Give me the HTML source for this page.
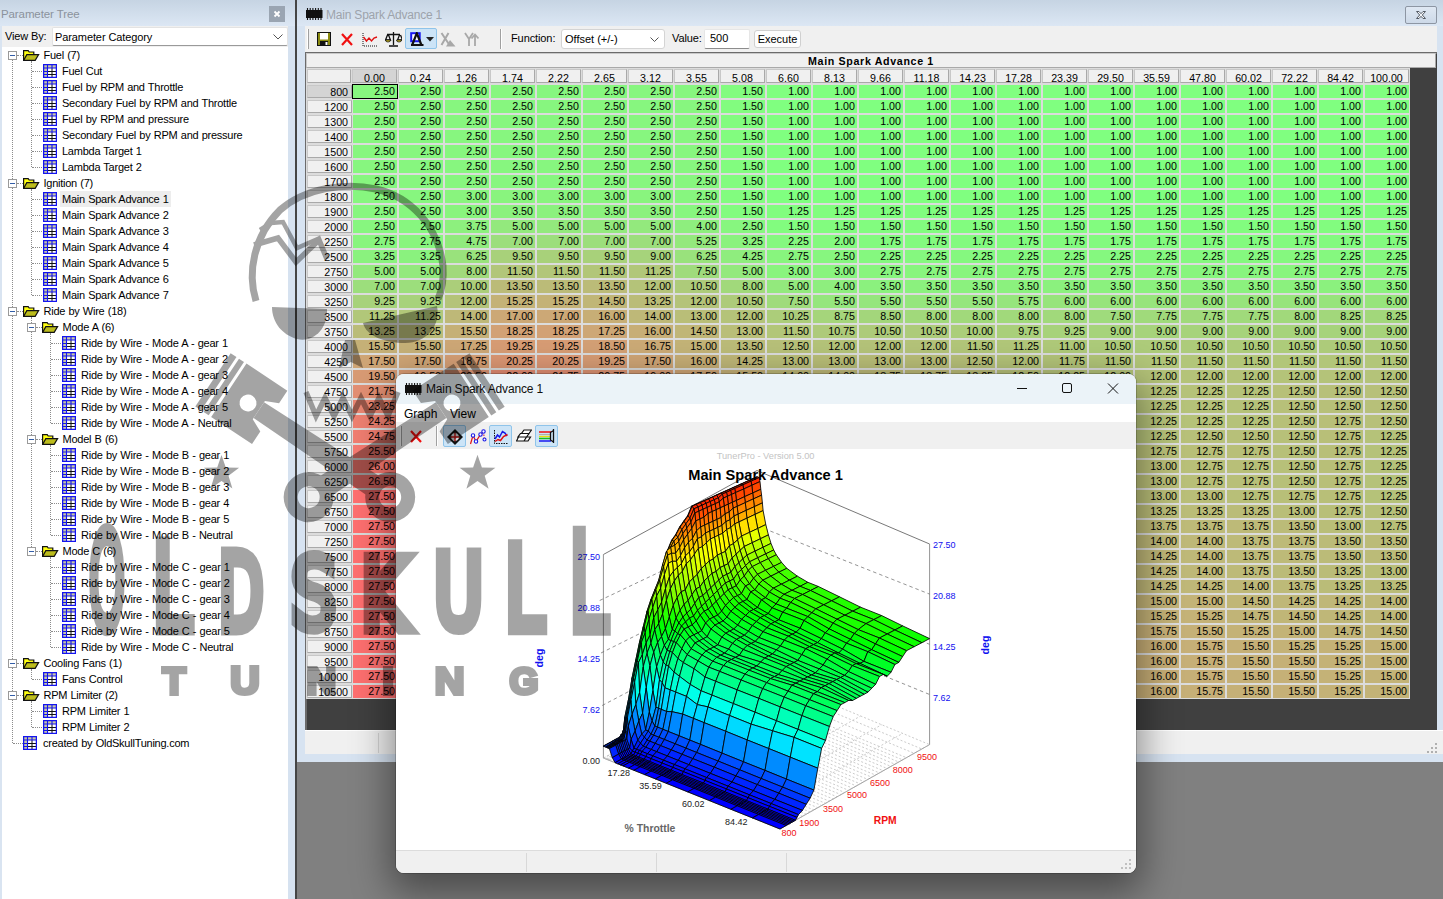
<!DOCTYPE html><html><head><meta charset="utf-8"><title>Main Spark Advance 1</title><style>
*{box-sizing:border-box;margin:0;padding:0}
html,body{width:1443px;height:899px;overflow:hidden}
body{background:#808080;font-family:"Liberation Sans",sans-serif;font-size:11px;color:#000;position:relative}
.abs{position:absolute}
#left{position:absolute;left:0;top:0;width:290px;height:899px;background:#fff;border-left:2px solid #d9e4f1}
#lcap{position:absolute;left:-2px;top:0;width:297px;height:26px;background:linear-gradient(#c6d4e3,#dce7f4)}
#lcap span{position:absolute;left:1px;top:8px;font-size:11.5px;color:#8b929c;letter-spacing:-.1px}
#lclose{position:absolute;left:269px;top:6px;width:16px;height:16px;background:#9aa5b2}
#split{position:absolute;left:288px;top:26px;width:9px;height:873px;background:#d6e2f0}
#split i{position:absolute;left:7px;top:-26px;width:2px;height:899px;background:#454545}
.tree{position:absolute;left:0;top:47px;width:288px}
.tr{position:absolute;left:0;height:16px;line-height:16px;white-space:nowrap;font-size:11px;letter-spacing:-.25px;word-spacing:.5px;color:#000}
.tr .t{position:absolute;top:0;padding:0 2px}
.sel{background:#ededed}
.ico{position:absolute;top:1px;width:14px;height:14px}
.fold{position:absolute;top:1px;width:17px;height:14px}
.exp{position:absolute;top:4px;width:9px;height:9px;border:1px solid #9a9a9a;background:#fff}
.exp:after{content:"";position:absolute;left:1px;top:3px;width:5px;height:1px;background:#335ea8}
.dv{position:absolute;width:0;border-left:1px dotted #8c8c8c}
.dh{position:absolute;height:0;border-top:1px dotted #8c8c8c}
#main{position:absolute;left:297px;top:0;width:1146px;height:762px;background:#d7e3f1}
#mcap{position:absolute;left:0;top:0;width:1146px;height:26px;background:linear-gradient(#c6d4e3,#dce7f4)}
#mcap span{position:absolute;left:29px;top:8px;font-size:12px;color:#9da3ab;letter-spacing:-.2px}
#tb{position:absolute;left:8px;top:26px;width:1132px;height:26px;background:#f0f0f0}
#grid{position:absolute;left:8px;top:52px;width:1132px;height:678px;background:#404040;border-top:2px solid #6b6b6b;border-left:2px solid #6b6b6b}
#stat{position:absolute;left:8px;top:730px;width:1138px;height:24px;background:#f0f0f0;border-top:1px solid #fff}
.hc{position:absolute;background:#f0f0f0;border:1px solid #a9a9a9;border-top-color:#c8c8c8;border-left-color:#c8c8c8;font-size:10.67px;height:14px;line-height:17px;overflow:hidden}
.c{position:absolute;width:44.400px;height:13px;line-height:13px;font-size:10.67px;text-align:right;padding-right:2px}
.rh{position:absolute;left:9px;width:45px;height:13px;line-height:12px;font-size:10.67px;text-align:right;padding-right:3px;background:#f0f0f0;border:1px solid #a9a9a9;border-top-color:#c8c8c8;border-left-color:#c8c8c8}
#gw{position:absolute;left:396px;top:374px;width:740px;height:499px;background:#fff;border-radius:8px;box-shadow:0 0 0 1px rgba(0,0,0,.18),0 14px 38px 6px rgba(0,0,0,.42);overflow:hidden}
#gcap{position:absolute;left:0;top:0;width:740px;height:30px;background:#ebf3f8}
#gcap span{position:absolute;left:30px;top:8px;font-size:12px;color:#111;letter-spacing:-.15px}
#gmenu{position:absolute;left:0;top:30px;width:740px;height:18px;background:#fff;font-size:12px}
#gtb{position:absolute;left:0;top:48px;width:740px;height:27px;background:#f0f0f0}
#gstat{position:absolute;left:0;top:476px;width:740px;height:23px;background:#f0f0f0;border-top:1px solid #dcdcdc}
</style></head><body>
<div id="left"><div id="lcap"><span>Parameter Tree</span><div id="lclose"><svg width="16" height="16"><path d="M5.5 5.5l5 5M10.5 5.5l-5 5" stroke="#fff" stroke-width="1.8"/></svg></div></div>
<div class="abs" style="left:0;top:26px;width:288px;height:21px;background:#f0f0f0"></div><div class="abs" style="left:3px;top:30px;font-size:11px;letter-spacing:-.15px">View By:</div>
<div class="abs" style="left:50px;top:27px;width:236px;height:19px;background:#fff;border:1px solid #e3e3e3;border-bottom-color:#9a9a9a;border-radius:2px;font-size:11px;line-height:18px;padding-left:2px;letter-spacing:-.1px">Parameter Category<svg class="abs" style="right:4px;top:6px" width="10" height="6"><path d="M.5 .5l4.5 4.5 4.5-4.5" fill="none" stroke="#555" stroke-width="1"/></svg></div>
<div class="tree">
<div class="dv" style="left:10px;top:8px;height:688px"></div>
<div class="dh" style="left:15px;top:8px;width:6px"></div>
<div class="dh" style="left:30px;top:24px;width:12px"></div>
<div class="dh" style="left:30px;top:40px;width:12px"></div>
<div class="dh" style="left:30px;top:56px;width:12px"></div>
<div class="dh" style="left:30px;top:72px;width:12px"></div>
<div class="dh" style="left:30px;top:88px;width:12px"></div>
<div class="dh" style="left:30px;top:104px;width:12px"></div>
<div class="dh" style="left:30px;top:120px;width:12px"></div>
<div class="dh" style="left:15px;top:136px;width:6px"></div>
<div class="dh" style="left:30px;top:152px;width:12px"></div>
<div class="dh" style="left:30px;top:168px;width:12px"></div>
<div class="dh" style="left:30px;top:184px;width:12px"></div>
<div class="dh" style="left:30px;top:200px;width:12px"></div>
<div class="dh" style="left:30px;top:216px;width:12px"></div>
<div class="dh" style="left:30px;top:232px;width:12px"></div>
<div class="dh" style="left:30px;top:248px;width:12px"></div>
<div class="dh" style="left:15px;top:264px;width:6px"></div>
<div class="dh" style="left:34px;top:280px;width:6px"></div>
<div class="dh" style="left:49px;top:296px;width:12px"></div>
<div class="dh" style="left:49px;top:312px;width:12px"></div>
<div class="dh" style="left:49px;top:328px;width:12px"></div>
<div class="dh" style="left:49px;top:344px;width:12px"></div>
<div class="dh" style="left:49px;top:360px;width:12px"></div>
<div class="dh" style="left:49px;top:376px;width:12px"></div>
<div class="dh" style="left:34px;top:392px;width:6px"></div>
<div class="dh" style="left:49px;top:408px;width:12px"></div>
<div class="dh" style="left:49px;top:424px;width:12px"></div>
<div class="dh" style="left:49px;top:440px;width:12px"></div>
<div class="dh" style="left:49px;top:456px;width:12px"></div>
<div class="dh" style="left:49px;top:472px;width:12px"></div>
<div class="dh" style="left:49px;top:488px;width:12px"></div>
<div class="dh" style="left:34px;top:504px;width:6px"></div>
<div class="dh" style="left:49px;top:520px;width:12px"></div>
<div class="dh" style="left:49px;top:536px;width:12px"></div>
<div class="dh" style="left:49px;top:552px;width:12px"></div>
<div class="dh" style="left:49px;top:568px;width:12px"></div>
<div class="dh" style="left:49px;top:584px;width:12px"></div>
<div class="dh" style="left:49px;top:600px;width:12px"></div>
<div class="dh" style="left:15px;top:616px;width:6px"></div>
<div class="dh" style="left:30px;top:632px;width:12px"></div>
<div class="dh" style="left:15px;top:648px;width:6px"></div>
<div class="dh" style="left:30px;top:664px;width:12px"></div>
<div class="dh" style="left:30px;top:680px;width:12px"></div>
<div class="dh" style="left:11px;top:696px;width:10px"></div>
<div class="dv" style="left:29px;top:14px;height:106px"></div>
<div class="dv" style="left:29px;top:142px;height:106px"></div>
<div class="dv" style="left:29px;top:270px;height:234px"></div>
<div class="dv" style="left:48px;top:286px;height:90px"></div>
<div class="dv" style="left:48px;top:398px;height:90px"></div>
<div class="dv" style="left:48px;top:510px;height:90px"></div>
<div class="dv" style="left:29px;top:622px;height:10px"></div>
<div class="dv" style="left:29px;top:654px;height:26px"></div>
<div class="tr" style="top:0px"><div class="exp" style="left:6px"></div><svg class="fold" style="left:21px" viewBox="0 0 17 14"><path d="M.6 12V2.600h4.600l1 1.400h4.600v2.500" fill="#ffff10" stroke="#111" stroke-width="1.200"/><path d="M.6 12.400L3.800 6.600h11.800l-3.400 5.800z" fill="#bcbc1c" stroke="#111" stroke-width="1.200"/></svg><div class="t" style="left:39.5px">Fuel (7)</div></div>
<div class="tr" style="top:16px"><svg class="ico" style="left:41px" viewBox="0 0 14 14"><rect x="0" y="0" width="14" height="14" fill="#fff"/><rect x="0" y="0" width="14" height="4" fill="#c9c9a4"/><rect x="0" y="0" width="4.500" height="14" fill="#c9c9a4"/><path d="M4.500 7.500h9M4.500 10.500h9M9 4v9.500" stroke="#111" stroke-width="1" fill="none"/><path d="M0 4h14M4.500 0v14M9 0v4M0 7.500h4.500M0 10.500h4.500" stroke="#1414f0" stroke-width="1.100" fill="none"/><rect x=".6" y=".6" width="12.800" height="12.800" fill="none" stroke="#1414f0" stroke-width="1.300"/></svg><div class="t" style="left:58px">Fuel Cut</div></div>
<div class="tr" style="top:32px"><svg class="ico" style="left:41px" viewBox="0 0 14 14"><rect x="0" y="0" width="14" height="14" fill="#fff"/><rect x="0" y="0" width="14" height="4" fill="#c9c9a4"/><rect x="0" y="0" width="4.500" height="14" fill="#c9c9a4"/><path d="M4.500 7.500h9M4.500 10.500h9M9 4v9.500" stroke="#111" stroke-width="1" fill="none"/><path d="M0 4h14M4.500 0v14M9 0v4M0 7.500h4.500M0 10.500h4.500" stroke="#1414f0" stroke-width="1.100" fill="none"/><rect x=".6" y=".6" width="12.800" height="12.800" fill="none" stroke="#1414f0" stroke-width="1.300"/></svg><div class="t" style="left:58px">Fuel by RPM and Throttle</div></div>
<div class="tr" style="top:48px"><svg class="ico" style="left:41px" viewBox="0 0 14 14"><rect x="0" y="0" width="14" height="14" fill="#fff"/><rect x="0" y="0" width="14" height="4" fill="#c9c9a4"/><rect x="0" y="0" width="4.500" height="14" fill="#c9c9a4"/><path d="M4.500 7.500h9M4.500 10.500h9M9 4v9.500" stroke="#111" stroke-width="1" fill="none"/><path d="M0 4h14M4.500 0v14M9 0v4M0 7.500h4.500M0 10.500h4.500" stroke="#1414f0" stroke-width="1.100" fill="none"/><rect x=".6" y=".6" width="12.800" height="12.800" fill="none" stroke="#1414f0" stroke-width="1.300"/></svg><div class="t" style="left:58px">Secondary Fuel by RPM and Throttle</div></div>
<div class="tr" style="top:64px"><svg class="ico" style="left:41px" viewBox="0 0 14 14"><rect x="0" y="0" width="14" height="14" fill="#fff"/><rect x="0" y="0" width="14" height="4" fill="#c9c9a4"/><rect x="0" y="0" width="4.500" height="14" fill="#c9c9a4"/><path d="M4.500 7.500h9M4.500 10.500h9M9 4v9.500" stroke="#111" stroke-width="1" fill="none"/><path d="M0 4h14M4.500 0v14M9 0v4M0 7.500h4.500M0 10.500h4.500" stroke="#1414f0" stroke-width="1.100" fill="none"/><rect x=".6" y=".6" width="12.800" height="12.800" fill="none" stroke="#1414f0" stroke-width="1.300"/></svg><div class="t" style="left:58px">Fuel by RPM and pressure</div></div>
<div class="tr" style="top:80px"><svg class="ico" style="left:41px" viewBox="0 0 14 14"><rect x="0" y="0" width="14" height="14" fill="#fff"/><rect x="0" y="0" width="14" height="4" fill="#c9c9a4"/><rect x="0" y="0" width="4.500" height="14" fill="#c9c9a4"/><path d="M4.500 7.500h9M4.500 10.500h9M9 4v9.500" stroke="#111" stroke-width="1" fill="none"/><path d="M0 4h14M4.500 0v14M9 0v4M0 7.500h4.500M0 10.500h4.500" stroke="#1414f0" stroke-width="1.100" fill="none"/><rect x=".6" y=".6" width="12.800" height="12.800" fill="none" stroke="#1414f0" stroke-width="1.300"/></svg><div class="t" style="left:58px">Secondary Fuel by RPM and pressure</div></div>
<div class="tr" style="top:96px"><svg class="ico" style="left:41px" viewBox="0 0 14 14"><rect x="0" y="0" width="14" height="14" fill="#fff"/><rect x="0" y="0" width="14" height="4" fill="#c9c9a4"/><rect x="0" y="0" width="4.500" height="14" fill="#c9c9a4"/><path d="M4.500 7.500h9M4.500 10.500h9M9 4v9.500" stroke="#111" stroke-width="1" fill="none"/><path d="M0 4h14M4.500 0v14M9 0v4M0 7.500h4.500M0 10.500h4.500" stroke="#1414f0" stroke-width="1.100" fill="none"/><rect x=".6" y=".6" width="12.800" height="12.800" fill="none" stroke="#1414f0" stroke-width="1.300"/></svg><div class="t" style="left:58px">Lambda Target 1</div></div>
<div class="tr" style="top:112px"><svg class="ico" style="left:41px" viewBox="0 0 14 14"><rect x="0" y="0" width="14" height="14" fill="#fff"/><rect x="0" y="0" width="14" height="4" fill="#c9c9a4"/><rect x="0" y="0" width="4.500" height="14" fill="#c9c9a4"/><path d="M4.500 7.500h9M4.500 10.500h9M9 4v9.500" stroke="#111" stroke-width="1" fill="none"/><path d="M0 4h14M4.500 0v14M9 0v4M0 7.500h4.500M0 10.500h4.500" stroke="#1414f0" stroke-width="1.100" fill="none"/><rect x=".6" y=".6" width="12.800" height="12.800" fill="none" stroke="#1414f0" stroke-width="1.300"/></svg><div class="t" style="left:58px">Lambda Target 2</div></div>
<div class="tr" style="top:128px"><div class="exp" style="left:6px"></div><svg class="fold" style="left:21px" viewBox="0 0 17 14"><path d="M.6 12V2.600h4.600l1 1.400h4.600v2.500" fill="#ffff10" stroke="#111" stroke-width="1.200"/><path d="M.6 12.400L3.800 6.600h11.800l-3.400 5.800z" fill="#bcbc1c" stroke="#111" stroke-width="1.200"/></svg><div class="t" style="left:39.5px">Ignition (7)</div></div>
<div class="tr" style="top:144px"><svg class="ico" style="left:41px" viewBox="0 0 14 14"><rect x="0" y="0" width="14" height="14" fill="#fff"/><rect x="0" y="0" width="14" height="4" fill="#c9c9a4"/><rect x="0" y="0" width="4.500" height="14" fill="#c9c9a4"/><path d="M4.500 7.500h9M4.500 10.500h9M9 4v9.500" stroke="#111" stroke-width="1" fill="none"/><path d="M0 4h14M4.500 0v14M9 0v4M0 7.500h4.500M0 10.500h4.500" stroke="#1414f0" stroke-width="1.100" fill="none"/><rect x=".6" y=".6" width="12.800" height="12.800" fill="none" stroke="#1414f0" stroke-width="1.300"/></svg><div class="t sel" style="left:58px">Main Spark Advance 1</div></div>
<div class="tr" style="top:160px"><svg class="ico" style="left:41px" viewBox="0 0 14 14"><rect x="0" y="0" width="14" height="14" fill="#fff"/><rect x="0" y="0" width="14" height="4" fill="#c9c9a4"/><rect x="0" y="0" width="4.500" height="14" fill="#c9c9a4"/><path d="M4.500 7.500h9M4.500 10.500h9M9 4v9.500" stroke="#111" stroke-width="1" fill="none"/><path d="M0 4h14M4.500 0v14M9 0v4M0 7.500h4.500M0 10.500h4.500" stroke="#1414f0" stroke-width="1.100" fill="none"/><rect x=".6" y=".6" width="12.800" height="12.800" fill="none" stroke="#1414f0" stroke-width="1.300"/></svg><div class="t" style="left:58px">Main Spark Advance 2</div></div>
<div class="tr" style="top:176px"><svg class="ico" style="left:41px" viewBox="0 0 14 14"><rect x="0" y="0" width="14" height="14" fill="#fff"/><rect x="0" y="0" width="14" height="4" fill="#c9c9a4"/><rect x="0" y="0" width="4.500" height="14" fill="#c9c9a4"/><path d="M4.500 7.500h9M4.500 10.500h9M9 4v9.500" stroke="#111" stroke-width="1" fill="none"/><path d="M0 4h14M4.500 0v14M9 0v4M0 7.500h4.500M0 10.500h4.500" stroke="#1414f0" stroke-width="1.100" fill="none"/><rect x=".6" y=".6" width="12.800" height="12.800" fill="none" stroke="#1414f0" stroke-width="1.300"/></svg><div class="t" style="left:58px">Main Spark Advance 3</div></div>
<div class="tr" style="top:192px"><svg class="ico" style="left:41px" viewBox="0 0 14 14"><rect x="0" y="0" width="14" height="14" fill="#fff"/><rect x="0" y="0" width="14" height="4" fill="#c9c9a4"/><rect x="0" y="0" width="4.500" height="14" fill="#c9c9a4"/><path d="M4.500 7.500h9M4.500 10.500h9M9 4v9.500" stroke="#111" stroke-width="1" fill="none"/><path d="M0 4h14M4.500 0v14M9 0v4M0 7.500h4.500M0 10.500h4.500" stroke="#1414f0" stroke-width="1.100" fill="none"/><rect x=".6" y=".6" width="12.800" height="12.800" fill="none" stroke="#1414f0" stroke-width="1.300"/></svg><div class="t" style="left:58px">Main Spark Advance 4</div></div>
<div class="tr" style="top:208px"><svg class="ico" style="left:41px" viewBox="0 0 14 14"><rect x="0" y="0" width="14" height="14" fill="#fff"/><rect x="0" y="0" width="14" height="4" fill="#c9c9a4"/><rect x="0" y="0" width="4.500" height="14" fill="#c9c9a4"/><path d="M4.500 7.500h9M4.500 10.500h9M9 4v9.500" stroke="#111" stroke-width="1" fill="none"/><path d="M0 4h14M4.500 0v14M9 0v4M0 7.500h4.500M0 10.500h4.500" stroke="#1414f0" stroke-width="1.100" fill="none"/><rect x=".6" y=".6" width="12.800" height="12.800" fill="none" stroke="#1414f0" stroke-width="1.300"/></svg><div class="t" style="left:58px">Main Spark Advance 5</div></div>
<div class="tr" style="top:224px"><svg class="ico" style="left:41px" viewBox="0 0 14 14"><rect x="0" y="0" width="14" height="14" fill="#fff"/><rect x="0" y="0" width="14" height="4" fill="#c9c9a4"/><rect x="0" y="0" width="4.500" height="14" fill="#c9c9a4"/><path d="M4.500 7.500h9M4.500 10.500h9M9 4v9.500" stroke="#111" stroke-width="1" fill="none"/><path d="M0 4h14M4.500 0v14M9 0v4M0 7.500h4.500M0 10.500h4.500" stroke="#1414f0" stroke-width="1.100" fill="none"/><rect x=".6" y=".6" width="12.800" height="12.800" fill="none" stroke="#1414f0" stroke-width="1.300"/></svg><div class="t" style="left:58px">Main Spark Advance 6</div></div>
<div class="tr" style="top:240px"><svg class="ico" style="left:41px" viewBox="0 0 14 14"><rect x="0" y="0" width="14" height="14" fill="#fff"/><rect x="0" y="0" width="14" height="4" fill="#c9c9a4"/><rect x="0" y="0" width="4.500" height="14" fill="#c9c9a4"/><path d="M4.500 7.500h9M4.500 10.500h9M9 4v9.500" stroke="#111" stroke-width="1" fill="none"/><path d="M0 4h14M4.500 0v14M9 0v4M0 7.500h4.500M0 10.500h4.500" stroke="#1414f0" stroke-width="1.100" fill="none"/><rect x=".6" y=".6" width="12.800" height="12.800" fill="none" stroke="#1414f0" stroke-width="1.300"/></svg><div class="t" style="left:58px">Main Spark Advance 7</div></div>
<div class="tr" style="top:256px"><div class="exp" style="left:6px"></div><svg class="fold" style="left:21px" viewBox="0 0 17 14"><path d="M.6 12V2.600h4.600l1 1.400h4.600v2.500" fill="#ffff10" stroke="#111" stroke-width="1.200"/><path d="M.6 12.400L3.800 6.600h11.800l-3.400 5.800z" fill="#bcbc1c" stroke="#111" stroke-width="1.200"/></svg><div class="t" style="left:39.5px">Ride by Wire (18)</div></div>
<div class="tr" style="top:272px"><div class="exp" style="left:25px"></div><svg class="fold" style="left:40px" viewBox="0 0 17 14"><path d="M.6 12V2.600h4.600l1 1.400h4.600v2.500" fill="#ffff10" stroke="#111" stroke-width="1.200"/><path d="M.6 12.400L3.800 6.600h11.800l-3.400 5.800z" fill="#bcbc1c" stroke="#111" stroke-width="1.200"/></svg><div class="t" style="left:58.5px">Mode A (6)</div></div>
<div class="tr" style="top:288px"><svg class="ico" style="left:60px" viewBox="0 0 14 14"><rect x="0" y="0" width="14" height="14" fill="#fff"/><rect x="0" y="0" width="14" height="4" fill="#c9c9a4"/><rect x="0" y="0" width="4.500" height="14" fill="#c9c9a4"/><path d="M4.500 7.500h9M4.500 10.500h9M9 4v9.500" stroke="#111" stroke-width="1" fill="none"/><path d="M0 4h14M4.500 0v14M9 0v4M0 7.500h4.500M0 10.500h4.500" stroke="#1414f0" stroke-width="1.100" fill="none"/><rect x=".6" y=".6" width="12.800" height="12.800" fill="none" stroke="#1414f0" stroke-width="1.300"/></svg><div class="t" style="left:77px">Ride by Wire - Mode A - gear 1</div></div>
<div class="tr" style="top:304px"><svg class="ico" style="left:60px" viewBox="0 0 14 14"><rect x="0" y="0" width="14" height="14" fill="#fff"/><rect x="0" y="0" width="14" height="4" fill="#c9c9a4"/><rect x="0" y="0" width="4.500" height="14" fill="#c9c9a4"/><path d="M4.500 7.500h9M4.500 10.500h9M9 4v9.500" stroke="#111" stroke-width="1" fill="none"/><path d="M0 4h14M4.500 0v14M9 0v4M0 7.500h4.500M0 10.500h4.500" stroke="#1414f0" stroke-width="1.100" fill="none"/><rect x=".6" y=".6" width="12.800" height="12.800" fill="none" stroke="#1414f0" stroke-width="1.300"/></svg><div class="t" style="left:77px">Ride by Wire - Mode A - gear 2</div></div>
<div class="tr" style="top:320px"><svg class="ico" style="left:60px" viewBox="0 0 14 14"><rect x="0" y="0" width="14" height="14" fill="#fff"/><rect x="0" y="0" width="14" height="4" fill="#c9c9a4"/><rect x="0" y="0" width="4.500" height="14" fill="#c9c9a4"/><path d="M4.500 7.500h9M4.500 10.500h9M9 4v9.500" stroke="#111" stroke-width="1" fill="none"/><path d="M0 4h14M4.500 0v14M9 0v4M0 7.500h4.500M0 10.500h4.500" stroke="#1414f0" stroke-width="1.100" fill="none"/><rect x=".6" y=".6" width="12.800" height="12.800" fill="none" stroke="#1414f0" stroke-width="1.300"/></svg><div class="t" style="left:77px">Ride by Wire - Mode A - gear 3</div></div>
<div class="tr" style="top:336px"><svg class="ico" style="left:60px" viewBox="0 0 14 14"><rect x="0" y="0" width="14" height="14" fill="#fff"/><rect x="0" y="0" width="14" height="4" fill="#c9c9a4"/><rect x="0" y="0" width="4.500" height="14" fill="#c9c9a4"/><path d="M4.500 7.500h9M4.500 10.500h9M9 4v9.500" stroke="#111" stroke-width="1" fill="none"/><path d="M0 4h14M4.500 0v14M9 0v4M0 7.500h4.500M0 10.500h4.500" stroke="#1414f0" stroke-width="1.100" fill="none"/><rect x=".6" y=".6" width="12.800" height="12.800" fill="none" stroke="#1414f0" stroke-width="1.300"/></svg><div class="t" style="left:77px">Ride by Wire - Mode A - gear 4</div></div>
<div class="tr" style="top:352px"><svg class="ico" style="left:60px" viewBox="0 0 14 14"><rect x="0" y="0" width="14" height="14" fill="#fff"/><rect x="0" y="0" width="14" height="4" fill="#c9c9a4"/><rect x="0" y="0" width="4.500" height="14" fill="#c9c9a4"/><path d="M4.500 7.500h9M4.500 10.500h9M9 4v9.500" stroke="#111" stroke-width="1" fill="none"/><path d="M0 4h14M4.500 0v14M9 0v4M0 7.500h4.500M0 10.500h4.500" stroke="#1414f0" stroke-width="1.100" fill="none"/><rect x=".6" y=".6" width="12.800" height="12.800" fill="none" stroke="#1414f0" stroke-width="1.300"/></svg><div class="t" style="left:77px">Ride by Wire - Mode A - gear 5</div></div>
<div class="tr" style="top:368px"><svg class="ico" style="left:60px" viewBox="0 0 14 14"><rect x="0" y="0" width="14" height="14" fill="#fff"/><rect x="0" y="0" width="14" height="4" fill="#c9c9a4"/><rect x="0" y="0" width="4.500" height="14" fill="#c9c9a4"/><path d="M4.500 7.500h9M4.500 10.500h9M9 4v9.500" stroke="#111" stroke-width="1" fill="none"/><path d="M0 4h14M4.500 0v14M9 0v4M0 7.500h4.500M0 10.500h4.500" stroke="#1414f0" stroke-width="1.100" fill="none"/><rect x=".6" y=".6" width="12.800" height="12.800" fill="none" stroke="#1414f0" stroke-width="1.300"/></svg><div class="t" style="left:77px">Ride by Wire - Mode A - Neutral</div></div>
<div class="tr" style="top:384px"><div class="exp" style="left:25px"></div><svg class="fold" style="left:40px" viewBox="0 0 17 14"><path d="M.6 12V2.600h4.600l1 1.400h4.600v2.500" fill="#ffff10" stroke="#111" stroke-width="1.200"/><path d="M.6 12.400L3.800 6.600h11.800l-3.400 5.800z" fill="#bcbc1c" stroke="#111" stroke-width="1.200"/></svg><div class="t" style="left:58.5px">Model B (6)</div></div>
<div class="tr" style="top:400px"><svg class="ico" style="left:60px" viewBox="0 0 14 14"><rect x="0" y="0" width="14" height="14" fill="#fff"/><rect x="0" y="0" width="14" height="4" fill="#c9c9a4"/><rect x="0" y="0" width="4.500" height="14" fill="#c9c9a4"/><path d="M4.500 7.500h9M4.500 10.500h9M9 4v9.500" stroke="#111" stroke-width="1" fill="none"/><path d="M0 4h14M4.500 0v14M9 0v4M0 7.500h4.500M0 10.500h4.500" stroke="#1414f0" stroke-width="1.100" fill="none"/><rect x=".6" y=".6" width="12.800" height="12.800" fill="none" stroke="#1414f0" stroke-width="1.300"/></svg><div class="t" style="left:77px">Ride by Wire - Mode B - gear 1</div></div>
<div class="tr" style="top:416px"><svg class="ico" style="left:60px" viewBox="0 0 14 14"><rect x="0" y="0" width="14" height="14" fill="#fff"/><rect x="0" y="0" width="14" height="4" fill="#c9c9a4"/><rect x="0" y="0" width="4.500" height="14" fill="#c9c9a4"/><path d="M4.500 7.500h9M4.500 10.500h9M9 4v9.500" stroke="#111" stroke-width="1" fill="none"/><path d="M0 4h14M4.500 0v14M9 0v4M0 7.500h4.500M0 10.500h4.500" stroke="#1414f0" stroke-width="1.100" fill="none"/><rect x=".6" y=".6" width="12.800" height="12.800" fill="none" stroke="#1414f0" stroke-width="1.300"/></svg><div class="t" style="left:77px">Ride by Wire - Mode B - gear 2</div></div>
<div class="tr" style="top:432px"><svg class="ico" style="left:60px" viewBox="0 0 14 14"><rect x="0" y="0" width="14" height="14" fill="#fff"/><rect x="0" y="0" width="14" height="4" fill="#c9c9a4"/><rect x="0" y="0" width="4.500" height="14" fill="#c9c9a4"/><path d="M4.500 7.500h9M4.500 10.500h9M9 4v9.500" stroke="#111" stroke-width="1" fill="none"/><path d="M0 4h14M4.500 0v14M9 0v4M0 7.500h4.500M0 10.500h4.500" stroke="#1414f0" stroke-width="1.100" fill="none"/><rect x=".6" y=".6" width="12.800" height="12.800" fill="none" stroke="#1414f0" stroke-width="1.300"/></svg><div class="t" style="left:77px">Ride by Wire - Mode B - gear 3</div></div>
<div class="tr" style="top:448px"><svg class="ico" style="left:60px" viewBox="0 0 14 14"><rect x="0" y="0" width="14" height="14" fill="#fff"/><rect x="0" y="0" width="14" height="4" fill="#c9c9a4"/><rect x="0" y="0" width="4.500" height="14" fill="#c9c9a4"/><path d="M4.500 7.500h9M4.500 10.500h9M9 4v9.500" stroke="#111" stroke-width="1" fill="none"/><path d="M0 4h14M4.500 0v14M9 0v4M0 7.500h4.500M0 10.500h4.500" stroke="#1414f0" stroke-width="1.100" fill="none"/><rect x=".6" y=".6" width="12.800" height="12.800" fill="none" stroke="#1414f0" stroke-width="1.300"/></svg><div class="t" style="left:77px">Ride by Wire - Mode B - gear 4</div></div>
<div class="tr" style="top:464px"><svg class="ico" style="left:60px" viewBox="0 0 14 14"><rect x="0" y="0" width="14" height="14" fill="#fff"/><rect x="0" y="0" width="14" height="4" fill="#c9c9a4"/><rect x="0" y="0" width="4.500" height="14" fill="#c9c9a4"/><path d="M4.500 7.500h9M4.500 10.500h9M9 4v9.500" stroke="#111" stroke-width="1" fill="none"/><path d="M0 4h14M4.500 0v14M9 0v4M0 7.500h4.500M0 10.500h4.500" stroke="#1414f0" stroke-width="1.100" fill="none"/><rect x=".6" y=".6" width="12.800" height="12.800" fill="none" stroke="#1414f0" stroke-width="1.300"/></svg><div class="t" style="left:77px">Ride by Wire - Mode B - gear 5</div></div>
<div class="tr" style="top:480px"><svg class="ico" style="left:60px" viewBox="0 0 14 14"><rect x="0" y="0" width="14" height="14" fill="#fff"/><rect x="0" y="0" width="14" height="4" fill="#c9c9a4"/><rect x="0" y="0" width="4.500" height="14" fill="#c9c9a4"/><path d="M4.500 7.500h9M4.500 10.500h9M9 4v9.500" stroke="#111" stroke-width="1" fill="none"/><path d="M0 4h14M4.500 0v14M9 0v4M0 7.500h4.500M0 10.500h4.500" stroke="#1414f0" stroke-width="1.100" fill="none"/><rect x=".6" y=".6" width="12.800" height="12.800" fill="none" stroke="#1414f0" stroke-width="1.300"/></svg><div class="t" style="left:77px">Ride by Wire - Mode B - Neutral</div></div>
<div class="tr" style="top:496px"><div class="exp" style="left:25px"></div><svg class="fold" style="left:40px" viewBox="0 0 17 14"><path d="M.6 12V2.600h4.600l1 1.400h4.600v2.500" fill="#ffff10" stroke="#111" stroke-width="1.200"/><path d="M.6 12.400L3.800 6.600h11.800l-3.400 5.800z" fill="#bcbc1c" stroke="#111" stroke-width="1.200"/></svg><div class="t" style="left:58.5px">Mode C (6)</div></div>
<div class="tr" style="top:512px"><svg class="ico" style="left:60px" viewBox="0 0 14 14"><rect x="0" y="0" width="14" height="14" fill="#fff"/><rect x="0" y="0" width="14" height="4" fill="#c9c9a4"/><rect x="0" y="0" width="4.500" height="14" fill="#c9c9a4"/><path d="M4.500 7.500h9M4.500 10.500h9M9 4v9.500" stroke="#111" stroke-width="1" fill="none"/><path d="M0 4h14M4.500 0v14M9 0v4M0 7.500h4.500M0 10.500h4.500" stroke="#1414f0" stroke-width="1.100" fill="none"/><rect x=".6" y=".6" width="12.800" height="12.800" fill="none" stroke="#1414f0" stroke-width="1.300"/></svg><div class="t" style="left:77px">Ride by Wire - Mode C - gear 1</div></div>
<div class="tr" style="top:528px"><svg class="ico" style="left:60px" viewBox="0 0 14 14"><rect x="0" y="0" width="14" height="14" fill="#fff"/><rect x="0" y="0" width="14" height="4" fill="#c9c9a4"/><rect x="0" y="0" width="4.500" height="14" fill="#c9c9a4"/><path d="M4.500 7.500h9M4.500 10.500h9M9 4v9.500" stroke="#111" stroke-width="1" fill="none"/><path d="M0 4h14M4.500 0v14M9 0v4M0 7.500h4.500M0 10.500h4.500" stroke="#1414f0" stroke-width="1.100" fill="none"/><rect x=".6" y=".6" width="12.800" height="12.800" fill="none" stroke="#1414f0" stroke-width="1.300"/></svg><div class="t" style="left:77px">Ride by Wire - Mode C - gear 2</div></div>
<div class="tr" style="top:544px"><svg class="ico" style="left:60px" viewBox="0 0 14 14"><rect x="0" y="0" width="14" height="14" fill="#fff"/><rect x="0" y="0" width="14" height="4" fill="#c9c9a4"/><rect x="0" y="0" width="4.500" height="14" fill="#c9c9a4"/><path d="M4.500 7.500h9M4.500 10.500h9M9 4v9.500" stroke="#111" stroke-width="1" fill="none"/><path d="M0 4h14M4.500 0v14M9 0v4M0 7.500h4.500M0 10.500h4.500" stroke="#1414f0" stroke-width="1.100" fill="none"/><rect x=".6" y=".6" width="12.800" height="12.800" fill="none" stroke="#1414f0" stroke-width="1.300"/></svg><div class="t" style="left:77px">Ride by Wire - Mode C - gear 3</div></div>
<div class="tr" style="top:560px"><svg class="ico" style="left:60px" viewBox="0 0 14 14"><rect x="0" y="0" width="14" height="14" fill="#fff"/><rect x="0" y="0" width="14" height="4" fill="#c9c9a4"/><rect x="0" y="0" width="4.500" height="14" fill="#c9c9a4"/><path d="M4.500 7.500h9M4.500 10.500h9M9 4v9.500" stroke="#111" stroke-width="1" fill="none"/><path d="M0 4h14M4.500 0v14M9 0v4M0 7.500h4.500M0 10.500h4.500" stroke="#1414f0" stroke-width="1.100" fill="none"/><rect x=".6" y=".6" width="12.800" height="12.800" fill="none" stroke="#1414f0" stroke-width="1.300"/></svg><div class="t" style="left:77px">Ride by Wire - Mode C - gear 4</div></div>
<div class="tr" style="top:576px"><svg class="ico" style="left:60px" viewBox="0 0 14 14"><rect x="0" y="0" width="14" height="14" fill="#fff"/><rect x="0" y="0" width="14" height="4" fill="#c9c9a4"/><rect x="0" y="0" width="4.500" height="14" fill="#c9c9a4"/><path d="M4.500 7.500h9M4.500 10.500h9M9 4v9.500" stroke="#111" stroke-width="1" fill="none"/><path d="M0 4h14M4.500 0v14M9 0v4M0 7.500h4.500M0 10.500h4.500" stroke="#1414f0" stroke-width="1.100" fill="none"/><rect x=".6" y=".6" width="12.800" height="12.800" fill="none" stroke="#1414f0" stroke-width="1.300"/></svg><div class="t" style="left:77px">Ride by Wire - Mode C - gear 5</div></div>
<div class="tr" style="top:592px"><svg class="ico" style="left:60px" viewBox="0 0 14 14"><rect x="0" y="0" width="14" height="14" fill="#fff"/><rect x="0" y="0" width="14" height="4" fill="#c9c9a4"/><rect x="0" y="0" width="4.500" height="14" fill="#c9c9a4"/><path d="M4.500 7.500h9M4.500 10.500h9M9 4v9.500" stroke="#111" stroke-width="1" fill="none"/><path d="M0 4h14M4.500 0v14M9 0v4M0 7.500h4.500M0 10.500h4.500" stroke="#1414f0" stroke-width="1.100" fill="none"/><rect x=".6" y=".6" width="12.800" height="12.800" fill="none" stroke="#1414f0" stroke-width="1.300"/></svg><div class="t" style="left:77px">Ride by Wire - Mode C - Neutral</div></div>
<div class="tr" style="top:608px"><div class="exp" style="left:6px"></div><svg class="fold" style="left:21px" viewBox="0 0 17 14"><path d="M.6 12V2.600h4.600l1 1.400h4.600v2.500" fill="#ffff10" stroke="#111" stroke-width="1.200"/><path d="M.6 12.400L3.800 6.600h11.800l-3.400 5.800z" fill="#bcbc1c" stroke="#111" stroke-width="1.200"/></svg><div class="t" style="left:39.5px">Cooling Fans (1)</div></div>
<div class="tr" style="top:624px"><svg class="ico" style="left:41px" viewBox="0 0 14 14"><rect x="0" y="0" width="14" height="14" fill="#fff"/><rect x="0" y="0" width="14" height="4" fill="#c9c9a4"/><rect x="0" y="0" width="4.500" height="14" fill="#c9c9a4"/><path d="M4.500 7.500h9M4.500 10.500h9M9 4v9.500" stroke="#111" stroke-width="1" fill="none"/><path d="M0 4h14M4.500 0v14M9 0v4M0 7.500h4.500M0 10.500h4.500" stroke="#1414f0" stroke-width="1.100" fill="none"/><rect x=".6" y=".6" width="12.800" height="12.800" fill="none" stroke="#1414f0" stroke-width="1.300"/></svg><div class="t" style="left:58px">Fans Control</div></div>
<div class="tr" style="top:640px"><div class="exp" style="left:6px"></div><svg class="fold" style="left:21px" viewBox="0 0 17 14"><path d="M.6 12V2.600h4.600l1 1.400h4.600v2.500" fill="#ffff10" stroke="#111" stroke-width="1.200"/><path d="M.6 12.400L3.800 6.600h11.800l-3.400 5.800z" fill="#bcbc1c" stroke="#111" stroke-width="1.200"/></svg><div class="t" style="left:39.5px">RPM Limiter (2)</div></div>
<div class="tr" style="top:656px"><svg class="ico" style="left:41px" viewBox="0 0 14 14"><rect x="0" y="0" width="14" height="14" fill="#fff"/><rect x="0" y="0" width="14" height="4" fill="#c9c9a4"/><rect x="0" y="0" width="4.500" height="14" fill="#c9c9a4"/><path d="M4.500 7.500h9M4.500 10.500h9M9 4v9.500" stroke="#111" stroke-width="1" fill="none"/><path d="M0 4h14M4.500 0v14M9 0v4M0 7.500h4.500M0 10.500h4.500" stroke="#1414f0" stroke-width="1.100" fill="none"/><rect x=".6" y=".6" width="12.800" height="12.800" fill="none" stroke="#1414f0" stroke-width="1.300"/></svg><div class="t" style="left:58px">RPM Limiter 1</div></div>
<div class="tr" style="top:672px"><svg class="ico" style="left:41px" viewBox="0 0 14 14"><rect x="0" y="0" width="14" height="14" fill="#fff"/><rect x="0" y="0" width="14" height="4" fill="#c9c9a4"/><rect x="0" y="0" width="4.500" height="14" fill="#c9c9a4"/><path d="M4.500 7.500h9M4.500 10.500h9M9 4v9.500" stroke="#111" stroke-width="1" fill="none"/><path d="M0 4h14M4.500 0v14M9 0v4M0 7.500h4.500M0 10.500h4.500" stroke="#1414f0" stroke-width="1.100" fill="none"/><rect x=".6" y=".6" width="12.800" height="12.800" fill="none" stroke="#1414f0" stroke-width="1.300"/></svg><div class="t" style="left:58px">RPM Limiter 2</div></div>
<div class="tr" style="top:688px"><svg class="ico" style="left:21px" viewBox="0 0 14 14"><rect x="0" y="0" width="14" height="14" fill="#fff"/><rect x="0" y="0" width="14" height="4" fill="#c9c9a4"/><rect x="0" y="0" width="4.500" height="14" fill="#c9c9a4"/><path d="M4.500 7.500h9M4.500 10.500h9M9 4v9.500" stroke="#111" stroke-width="1" fill="none"/><path d="M0 4h14M4.500 0v14M9 0v4M0 7.500h4.500M0 10.500h4.500" stroke="#1414f0" stroke-width="1.100" fill="none"/><rect x=".6" y=".6" width="12.800" height="12.800" fill="none" stroke="#1414f0" stroke-width="1.300"/></svg><div class="t" style="left:39px">created by OldSkullTuning.com</div></div>
</div></div>
<div id="split"><i></i></div>
<div id="main"><div id="mcap">
<svg class="abs" style="left:9px;top:8px" width="17" height="12" viewBox="0 0 17 12"><rect x="0" y="2" width="16.500" height="8" fill="#111"/><path d="M1.500 0v12M4.200 0v12M6.900 0v12M9.600 0v12M12.300 0v12M15 0v12" stroke="#111" stroke-width="1.100"/></svg>
<span>Main Spark Advance 1</span>
<div class="abs" style="left:1108px;top:6px;width:32px;height:18px;border:1px solid #8d96a3;border-radius:2px;background:linear-gradient(#dfe8f3,#cdd9e8)"><svg width="30" height="16"><path d="M10.5 4.5h2.5l2 2.2 2-2.2h2.5l-3.2 3.5 3.2 3.5h-2.5l-2-2.2-2 2.2h-2.5l3.2-3.5z" fill="#f4f6f9" stroke="#555c66" stroke-width="1"/></svg></div>
</div>
<div id="tb">
<div class="abs" style="left:2px;top:3px;width:2px;height:20px;border-left:1px solid #fff;border-right:1px solid #a0a0a0"></div>
<svg class="abs" style="left:12px;top:6px" width="14" height="14" viewBox="0 0 14 14"><rect x="0" y="0" width="14" height="14" fill="#111"/><rect x="1" y="1" width="12" height="12" fill="#8a8a10"/><rect x="3" y="1" width="8" height="6.5" fill="#fff"/><rect x="3" y="9" width="8" height="5" fill="#111"/><rect x="8.5" y="10" width="2" height="3" fill="#fff"/></svg>
<svg class="abs" style="left:36px;top:7px" width="12" height="13" viewBox="0 0 12 13"><path d="M1 1l10 11M11 1L1 12" stroke="#f01010" stroke-width="2.2" fill="none"/></svg>
<svg class="abs" style="left:57px;top:7px" width="16" height="14" viewBox="0 0 16 14"><path d="M1 0v13h15" stroke="#111" stroke-width="1" fill="none" stroke-dasharray="1 1"/><path d="M1.5 4l3 4 2.5-3 2.500 3 2.500-3 3-1" stroke="#e01010" stroke-width="1.4" fill="none"/></svg>
<svg class="abs" style="left:80px;top:5px" width="17" height="16" viewBox="0 0 17 16"><path d="M8.500 1v13M4 15h9M2 3.500h13M2.500 4l-2 5h5l-2-5M14.500 4l-2 5h5l-2-5" stroke="#111" stroke-width="1.300" fill="none"/><path d="M0.500 9h5a2.500 2 0 0 1-5 0zM11.500 9h5a2.500 2 0 0 1-5 0z" fill="#e8d020" stroke="#111" stroke-width=".8"/></svg>
<div class="abs" style="left:100px;top:2px;width:32px;height:21px;background:#cce4f7;border:1px solid #8fc4ea;border-radius:2px"></div>
<svg class="abs" style="left:105px;top:6px" width="14" height="14" viewBox="0 0 14 14"><rect x="1.200" y="1.200" width="8.500" height="8" fill="#fff" stroke="#1818f0" stroke-width="2"/><path d="M1 13h12.500M2.200 13L6.800 1.200 11.400 13" stroke="#111" stroke-width="2.200" fill="none"/></svg>
<svg class="abs" style="left:121px;top:11px" width="8" height="5"><path d="M0 0h8l-4 4.500z" fill="#222"/></svg>
<svg class="abs" style="left:135px;top:6px" width="16" height="15" viewBox="0 0 16 15"><path d="M1.500 1l8 12M8.500 1l-7 12" stroke="#a8a8a8" stroke-width="2" fill="none"/><path d="M6 14.500h9.500l-5.500-6.500z" fill="#a8a8a8"/></svg>
<svg class="abs" style="left:159px;top:6px" width="15" height="15" viewBox="0 0 15 15"><path d="M1 1l4 6v7M9 1l-4 6M11 14V3M7.500 6.500L11 2.500l3.500 4" stroke="#a8a8a8" stroke-width="1.800" fill="none"/></svg>
<div class="abs" style="left:195px;top:3px;width:2px;height:20px;border-left:1px solid #a0a0a0;border-right:1px solid #fff"></div>
<div class="abs" style="left:206px;top:6px;font-size:11px;letter-spacing:-.1px">Function:</div>
<div class="abs" style="left:256px;top:3px;width:104px;height:20px;background:#fff;border:1px solid #d4d4d4;border-radius:3px;font-size:11px;line-height:18px;padding-left:3px">Offset (+/-)<svg class="abs" style="right:5px;top:7px" width="9" height="6"><path d="M.5 .5l4 4 4-4" fill="none" stroke="#555" stroke-width="1"/></svg></div>
<div class="abs" style="left:367px;top:6px;font-size:11px;letter-spacing:-.1px">Value:</div>
<div class="abs" style="left:399px;top:3px;width:46px;height:20px;background:#fff;border:1px solid #e6e6e6;border-bottom-color:#8c8c8c;border-radius:2px;font-size:11px;line-height:17px;padding-left:5px">500</div>
<div class="abs" style="left:449px;top:4px;width:47px;height:18px;background:#fdfdfd;border:1px solid #d0d0d0;border-radius:3px;font-size:11px;line-height:17px;text-align:center">Execute</div>
</div>
<div id="grid">
<div class="abs" style="left:-1px;top:-1px;width:1104px;height:646px;background:#dcdcdc"></div>
<div class="hc" style="left:-1px;top:-1px;width:1130px;height:15px;line-height:15px;text-align:center;font-weight:bold;font-size:10.67px;letter-spacing:.66px;padding-right:0">Main Spark Advance 1</div>
<div class="hc" style="left:0px;top:15px;width:44px"></div>
<div class="hc" style="left:45.3px;top:15px;width:44.400px;text-align:center;background:#d4d4d4">0.00</div>
<div class="hc" style="left:91.3px;top:15px;width:44.400px;text-align:center">0.24</div>
<div class="hc" style="left:137.3px;top:15px;width:44.400px;text-align:center">1.26</div>
<div class="hc" style="left:183.3px;top:15px;width:44.400px;text-align:center">1.74</div>
<div class="hc" style="left:229.3px;top:15px;width:44.400px;text-align:center">2.22</div>
<div class="hc" style="left:275.3px;top:15px;width:44.400px;text-align:center">2.65</div>
<div class="hc" style="left:321.3px;top:15px;width:44.400px;text-align:center">3.12</div>
<div class="hc" style="left:367.3px;top:15px;width:44.400px;text-align:center">3.55</div>
<div class="hc" style="left:413.3px;top:15px;width:44.400px;text-align:center">5.08</div>
<div class="hc" style="left:459.3px;top:15px;width:44.400px;text-align:center">6.60</div>
<div class="hc" style="left:505.3px;top:15px;width:44.400px;text-align:center">8.13</div>
<div class="hc" style="left:551.3px;top:15px;width:44.400px;text-align:center">9.66</div>
<div class="hc" style="left:597.3px;top:15px;width:44.400px;text-align:center">11.18</div>
<div class="hc" style="left:643.3px;top:15px;width:44.400px;text-align:center">14.23</div>
<div class="hc" style="left:689.3px;top:15px;width:44.400px;text-align:center">17.28</div>
<div class="hc" style="left:735.3px;top:15px;width:44.400px;text-align:center">23.39</div>
<div class="hc" style="left:781.3px;top:15px;width:44.400px;text-align:center">29.50</div>
<div class="hc" style="left:827.3px;top:15px;width:44.400px;text-align:center">35.59</div>
<div class="hc" style="left:873.3px;top:15px;width:44.400px;text-align:center">47.80</div>
<div class="hc" style="left:919.3px;top:15px;width:44.400px;text-align:center">60.02</div>
<div class="hc" style="left:965.3px;top:15px;width:44.400px;text-align:center">72.22</div>
<div class="hc" style="left:1011.3px;top:15px;width:44.400px;text-align:center">84.42</div>
<div class="hc" style="left:1057.3px;top:15px;width:44.400px;text-align:center">100.00</div>
<div class="rh" style="top:30.5px;left:0px;background:#d4d4d4">800</div>
<div class="c" style="left:45.6px;top:30.5px;background:#87f67f;outline:1px solid #000">2.50</div><div class="c" style="left:91.6px;top:30.5px;background:#87f67f">2.50</div><div class="c" style="left:137.6px;top:30.5px;background:#87f67f">2.50</div><div class="c" style="left:183.6px;top:30.5px;background:#87f67f">2.50</div><div class="c" style="left:229.6px;top:30.5px;background:#87f67f">2.50</div><div class="c" style="left:275.6px;top:30.5px;background:#87f67f">2.50</div><div class="c" style="left:321.6px;top:30.5px;background:#87f67f">2.50</div><div class="c" style="left:367.6px;top:30.5px;background:#87f67f">2.50</div><div class="c" style="left:413.6px;top:30.5px;background:#82fc7f">1.50</div><div class="c" style="left:459.6px;top:30.5px;background:#80ff80">1.00</div><div class="c" style="left:505.6px;top:30.5px;background:#80ff80">1.00</div><div class="c" style="left:551.6px;top:30.5px;background:#80ff80">1.00</div><div class="c" style="left:597.6px;top:30.5px;background:#80ff80">1.00</div><div class="c" style="left:643.6px;top:30.5px;background:#80ff80">1.00</div><div class="c" style="left:689.6px;top:30.5px;background:#80ff80">1.00</div><div class="c" style="left:735.6px;top:30.5px;background:#80ff80">1.00</div><div class="c" style="left:781.6px;top:30.5px;background:#80ff80">1.00</div><div class="c" style="left:827.6px;top:30.5px;background:#80ff80">1.00</div><div class="c" style="left:873.6px;top:30.5px;background:#80ff80">1.00</div><div class="c" style="left:919.6px;top:30.5px;background:#80ff80">1.00</div><div class="c" style="left:965.6px;top:30.5px;background:#80ff80">1.00</div><div class="c" style="left:1011.6px;top:30.5px;background:#80ff80">1.00</div><div class="c" style="left:1057.6px;top:30.5px;background:#80ff80">1.00</div>
<div class="rh" style="top:45.5px;left:0px">1200</div>
<div class="c" style="left:45.6px;top:45.5px;background:#87f67f">2.50</div><div class="c" style="left:91.6px;top:45.5px;background:#87f67f">2.50</div><div class="c" style="left:137.6px;top:45.5px;background:#87f67f">2.50</div><div class="c" style="left:183.6px;top:45.5px;background:#87f67f">2.50</div><div class="c" style="left:229.6px;top:45.5px;background:#87f67f">2.50</div><div class="c" style="left:275.6px;top:45.5px;background:#87f67f">2.50</div><div class="c" style="left:321.6px;top:45.5px;background:#87f67f">2.50</div><div class="c" style="left:367.6px;top:45.5px;background:#87f67f">2.50</div><div class="c" style="left:413.6px;top:45.5px;background:#82fc7f">1.50</div><div class="c" style="left:459.6px;top:45.5px;background:#80ff80">1.00</div><div class="c" style="left:505.6px;top:45.5px;background:#80ff80">1.00</div><div class="c" style="left:551.6px;top:45.5px;background:#80ff80">1.00</div><div class="c" style="left:597.6px;top:45.5px;background:#80ff80">1.00</div><div class="c" style="left:643.6px;top:45.5px;background:#80ff80">1.00</div><div class="c" style="left:689.6px;top:45.5px;background:#80ff80">1.00</div><div class="c" style="left:735.6px;top:45.5px;background:#80ff80">1.00</div><div class="c" style="left:781.6px;top:45.5px;background:#80ff80">1.00</div><div class="c" style="left:827.6px;top:45.5px;background:#80ff80">1.00</div><div class="c" style="left:873.6px;top:45.5px;background:#80ff80">1.00</div><div class="c" style="left:919.6px;top:45.5px;background:#80ff80">1.00</div><div class="c" style="left:965.6px;top:45.5px;background:#80ff80">1.00</div><div class="c" style="left:1011.6px;top:45.5px;background:#80ff80">1.00</div><div class="c" style="left:1057.6px;top:45.5px;background:#80ff80">1.00</div>
<div class="rh" style="top:60.5px;left:0px">1300</div>
<div class="c" style="left:45.6px;top:60.5px;background:#87f67f">2.50</div><div class="c" style="left:91.6px;top:60.5px;background:#87f67f">2.50</div><div class="c" style="left:137.6px;top:60.5px;background:#87f67f">2.50</div><div class="c" style="left:183.6px;top:60.5px;background:#87f67f">2.50</div><div class="c" style="left:229.6px;top:60.5px;background:#87f67f">2.50</div><div class="c" style="left:275.6px;top:60.5px;background:#87f67f">2.50</div><div class="c" style="left:321.6px;top:60.5px;background:#87f67f">2.50</div><div class="c" style="left:367.6px;top:60.5px;background:#87f67f">2.50</div><div class="c" style="left:413.6px;top:60.5px;background:#82fc7f">1.50</div><div class="c" style="left:459.6px;top:60.5px;background:#80ff80">1.00</div><div class="c" style="left:505.6px;top:60.5px;background:#80ff80">1.00</div><div class="c" style="left:551.6px;top:60.5px;background:#80ff80">1.00</div><div class="c" style="left:597.6px;top:60.5px;background:#80ff80">1.00</div><div class="c" style="left:643.6px;top:60.5px;background:#80ff80">1.00</div><div class="c" style="left:689.6px;top:60.5px;background:#80ff80">1.00</div><div class="c" style="left:735.6px;top:60.5px;background:#80ff80">1.00</div><div class="c" style="left:781.6px;top:60.5px;background:#80ff80">1.00</div><div class="c" style="left:827.6px;top:60.5px;background:#80ff80">1.00</div><div class="c" style="left:873.6px;top:60.5px;background:#80ff80">1.00</div><div class="c" style="left:919.6px;top:60.5px;background:#80ff80">1.00</div><div class="c" style="left:965.6px;top:60.5px;background:#80ff80">1.00</div><div class="c" style="left:1011.6px;top:60.5px;background:#80ff80">1.00</div><div class="c" style="left:1057.6px;top:60.5px;background:#80ff80">1.00</div>
<div class="rh" style="top:75.5px;left:0px">1400</div>
<div class="c" style="left:45.6px;top:75.5px;background:#87f67f">2.50</div><div class="c" style="left:91.6px;top:75.5px;background:#87f67f">2.50</div><div class="c" style="left:137.6px;top:75.5px;background:#87f67f">2.50</div><div class="c" style="left:183.6px;top:75.5px;background:#87f67f">2.50</div><div class="c" style="left:229.6px;top:75.5px;background:#87f67f">2.50</div><div class="c" style="left:275.6px;top:75.5px;background:#87f67f">2.50</div><div class="c" style="left:321.6px;top:75.5px;background:#87f67f">2.50</div><div class="c" style="left:367.6px;top:75.5px;background:#87f67f">2.50</div><div class="c" style="left:413.6px;top:75.5px;background:#82fc7f">1.50</div><div class="c" style="left:459.6px;top:75.5px;background:#80ff80">1.00</div><div class="c" style="left:505.6px;top:75.5px;background:#80ff80">1.00</div><div class="c" style="left:551.6px;top:75.5px;background:#80ff80">1.00</div><div class="c" style="left:597.6px;top:75.5px;background:#80ff80">1.00</div><div class="c" style="left:643.6px;top:75.5px;background:#80ff80">1.00</div><div class="c" style="left:689.6px;top:75.5px;background:#80ff80">1.00</div><div class="c" style="left:735.6px;top:75.5px;background:#80ff80">1.00</div><div class="c" style="left:781.6px;top:75.5px;background:#80ff80">1.00</div><div class="c" style="left:827.6px;top:75.5px;background:#80ff80">1.00</div><div class="c" style="left:873.6px;top:75.5px;background:#80ff80">1.00</div><div class="c" style="left:919.6px;top:75.5px;background:#80ff80">1.00</div><div class="c" style="left:965.6px;top:75.5px;background:#80ff80">1.00</div><div class="c" style="left:1011.6px;top:75.5px;background:#80ff80">1.00</div><div class="c" style="left:1057.6px;top:75.5px;background:#80ff80">1.00</div>
<div class="rh" style="top:90.5px;left:0px">1500</div>
<div class="c" style="left:45.6px;top:90.5px;background:#87f67f">2.50</div><div class="c" style="left:91.6px;top:90.5px;background:#87f67f">2.50</div><div class="c" style="left:137.6px;top:90.5px;background:#87f67f">2.50</div><div class="c" style="left:183.6px;top:90.5px;background:#87f67f">2.50</div><div class="c" style="left:229.6px;top:90.5px;background:#87f67f">2.50</div><div class="c" style="left:275.6px;top:90.5px;background:#87f67f">2.50</div><div class="c" style="left:321.6px;top:90.5px;background:#87f67f">2.50</div><div class="c" style="left:367.6px;top:90.5px;background:#87f67f">2.50</div><div class="c" style="left:413.6px;top:90.5px;background:#82fc7f">1.50</div><div class="c" style="left:459.6px;top:90.5px;background:#80ff80">1.00</div><div class="c" style="left:505.6px;top:90.5px;background:#80ff80">1.00</div><div class="c" style="left:551.6px;top:90.5px;background:#80ff80">1.00</div><div class="c" style="left:597.6px;top:90.5px;background:#80ff80">1.00</div><div class="c" style="left:643.6px;top:90.5px;background:#80ff80">1.00</div><div class="c" style="left:689.6px;top:90.5px;background:#80ff80">1.00</div><div class="c" style="left:735.6px;top:90.5px;background:#80ff80">1.00</div><div class="c" style="left:781.6px;top:90.5px;background:#80ff80">1.00</div><div class="c" style="left:827.6px;top:90.5px;background:#80ff80">1.00</div><div class="c" style="left:873.6px;top:90.5px;background:#80ff80">1.00</div><div class="c" style="left:919.6px;top:90.5px;background:#80ff80">1.00</div><div class="c" style="left:965.6px;top:90.5px;background:#80ff80">1.00</div><div class="c" style="left:1011.6px;top:90.5px;background:#80ff80">1.00</div><div class="c" style="left:1057.6px;top:90.5px;background:#80ff80">1.00</div>
<div class="rh" style="top:105.5px;left:0px">1600</div>
<div class="c" style="left:45.6px;top:105.5px;background:#87f67f">2.50</div><div class="c" style="left:91.6px;top:105.5px;background:#87f67f">2.50</div><div class="c" style="left:137.6px;top:105.5px;background:#87f67f">2.50</div><div class="c" style="left:183.6px;top:105.5px;background:#87f67f">2.50</div><div class="c" style="left:229.6px;top:105.5px;background:#87f67f">2.50</div><div class="c" style="left:275.6px;top:105.5px;background:#87f67f">2.50</div><div class="c" style="left:321.6px;top:105.5px;background:#87f67f">2.50</div><div class="c" style="left:367.6px;top:105.5px;background:#87f67f">2.50</div><div class="c" style="left:413.6px;top:105.5px;background:#82fc7f">1.50</div><div class="c" style="left:459.6px;top:105.5px;background:#80ff80">1.00</div><div class="c" style="left:505.6px;top:105.5px;background:#80ff80">1.00</div><div class="c" style="left:551.6px;top:105.5px;background:#80ff80">1.00</div><div class="c" style="left:597.6px;top:105.5px;background:#80ff80">1.00</div><div class="c" style="left:643.6px;top:105.5px;background:#80ff80">1.00</div><div class="c" style="left:689.6px;top:105.5px;background:#80ff80">1.00</div><div class="c" style="left:735.6px;top:105.5px;background:#80ff80">1.00</div><div class="c" style="left:781.6px;top:105.5px;background:#80ff80">1.00</div><div class="c" style="left:827.6px;top:105.5px;background:#80ff80">1.00</div><div class="c" style="left:873.6px;top:105.5px;background:#80ff80">1.00</div><div class="c" style="left:919.6px;top:105.5px;background:#80ff80">1.00</div><div class="c" style="left:965.6px;top:105.5px;background:#80ff80">1.00</div><div class="c" style="left:1011.6px;top:105.5px;background:#80ff80">1.00</div><div class="c" style="left:1057.6px;top:105.5px;background:#80ff80">1.00</div>
<div class="rh" style="top:120.5px;left:0px">1700</div>
<div class="c" style="left:45.6px;top:120.5px;background:#87f67f">2.50</div><div class="c" style="left:91.6px;top:120.5px;background:#87f67f">2.50</div><div class="c" style="left:137.6px;top:120.5px;background:#87f67f">2.50</div><div class="c" style="left:183.6px;top:120.5px;background:#87f67f">2.50</div><div class="c" style="left:229.6px;top:120.5px;background:#87f67f">2.50</div><div class="c" style="left:275.6px;top:120.5px;background:#87f67f">2.50</div><div class="c" style="left:321.6px;top:120.5px;background:#87f67f">2.50</div><div class="c" style="left:367.6px;top:120.5px;background:#87f67f">2.50</div><div class="c" style="left:413.6px;top:120.5px;background:#82fc7f">1.50</div><div class="c" style="left:459.6px;top:120.5px;background:#80ff80">1.00</div><div class="c" style="left:505.6px;top:120.5px;background:#80ff80">1.00</div><div class="c" style="left:551.6px;top:120.5px;background:#80ff80">1.00</div><div class="c" style="left:597.6px;top:120.5px;background:#80ff80">1.00</div><div class="c" style="left:643.6px;top:120.5px;background:#80ff80">1.00</div><div class="c" style="left:689.6px;top:120.5px;background:#80ff80">1.00</div><div class="c" style="left:735.6px;top:120.5px;background:#80ff80">1.00</div><div class="c" style="left:781.6px;top:120.5px;background:#80ff80">1.00</div><div class="c" style="left:827.6px;top:120.5px;background:#80ff80">1.00</div><div class="c" style="left:873.6px;top:120.5px;background:#80ff80">1.00</div><div class="c" style="left:919.6px;top:120.5px;background:#80ff80">1.00</div><div class="c" style="left:965.6px;top:120.5px;background:#80ff80">1.00</div><div class="c" style="left:1011.6px;top:120.5px;background:#80ff80">1.00</div><div class="c" style="left:1057.6px;top:120.5px;background:#80ff80">1.00</div>
<div class="rh" style="top:135.5px;left:0px">1800</div>
<div class="c" style="left:45.6px;top:135.5px;background:#87f67f">2.50</div><div class="c" style="left:91.6px;top:135.5px;background:#87f67f">2.50</div><div class="c" style="left:137.6px;top:135.5px;background:#89f47e">3.00</div><div class="c" style="left:183.6px;top:135.5px;background:#89f47e">3.00</div><div class="c" style="left:229.6px;top:135.5px;background:#89f47e">3.00</div><div class="c" style="left:275.6px;top:135.5px;background:#89f47e">3.00</div><div class="c" style="left:321.6px;top:135.5px;background:#89f47e">3.00</div><div class="c" style="left:367.6px;top:135.5px;background:#87f67f">2.50</div><div class="c" style="left:413.6px;top:135.5px;background:#82fc7f">1.50</div><div class="c" style="left:459.6px;top:135.5px;background:#80ff80">1.00</div><div class="c" style="left:505.6px;top:135.5px;background:#80ff80">1.00</div><div class="c" style="left:551.6px;top:135.5px;background:#80ff80">1.00</div><div class="c" style="left:597.6px;top:135.5px;background:#80ff80">1.00</div><div class="c" style="left:643.6px;top:135.5px;background:#80ff80">1.00</div><div class="c" style="left:689.6px;top:135.5px;background:#80ff80">1.00</div><div class="c" style="left:735.6px;top:135.5px;background:#80ff80">1.00</div><div class="c" style="left:781.6px;top:135.5px;background:#80ff80">1.00</div><div class="c" style="left:827.6px;top:135.5px;background:#80ff80">1.00</div><div class="c" style="left:873.6px;top:135.5px;background:#80ff80">1.00</div><div class="c" style="left:919.6px;top:135.5px;background:#80ff80">1.00</div><div class="c" style="left:965.6px;top:135.5px;background:#80ff80">1.00</div><div class="c" style="left:1011.6px;top:135.5px;background:#80ff80">1.00</div><div class="c" style="left:1057.6px;top:135.5px;background:#80ff80">1.00</div>
<div class="rh" style="top:150.5px;left:0px">1900</div>
<div class="c" style="left:45.6px;top:150.5px;background:#87f67f">2.50</div><div class="c" style="left:91.6px;top:150.5px;background:#87f67f">2.50</div><div class="c" style="left:137.6px;top:150.5px;background:#89f47e">3.00</div><div class="c" style="left:183.6px;top:150.5px;background:#8bf17e">3.50</div><div class="c" style="left:229.6px;top:150.5px;background:#8bf17e">3.50</div><div class="c" style="left:275.6px;top:150.5px;background:#8bf17e">3.50</div><div class="c" style="left:321.6px;top:150.5px;background:#8bf17e">3.50</div><div class="c" style="left:367.6px;top:150.5px;background:#87f67f">2.50</div><div class="c" style="left:413.6px;top:150.5px;background:#82fc7f">1.50</div><div class="c" style="left:459.6px;top:150.5px;background:#81fd7f">1.25</div><div class="c" style="left:505.6px;top:150.5px;background:#81fd7f">1.25</div><div class="c" style="left:551.6px;top:150.5px;background:#81fd7f">1.25</div><div class="c" style="left:597.6px;top:150.5px;background:#81fd7f">1.25</div><div class="c" style="left:643.6px;top:150.5px;background:#81fd7f">1.25</div><div class="c" style="left:689.6px;top:150.5px;background:#81fd7f">1.25</div><div class="c" style="left:735.6px;top:150.5px;background:#81fd7f">1.25</div><div class="c" style="left:781.6px;top:150.5px;background:#81fd7f">1.25</div><div class="c" style="left:827.6px;top:150.5px;background:#81fd7f">1.25</div><div class="c" style="left:873.6px;top:150.5px;background:#81fd7f">1.25</div><div class="c" style="left:919.6px;top:150.5px;background:#81fd7f">1.25</div><div class="c" style="left:965.6px;top:150.5px;background:#81fd7f">1.25</div><div class="c" style="left:1011.6px;top:150.5px;background:#81fd7f">1.25</div><div class="c" style="left:1057.6px;top:150.5px;background:#81fd7f">1.25</div>
<div class="rh" style="top:165.5px;left:0px">2000</div>
<div class="c" style="left:45.6px;top:165.5px;background:#87f67f">2.50</div><div class="c" style="left:91.6px;top:165.5px;background:#87f67f">2.50</div><div class="c" style="left:137.6px;top:165.5px;background:#8df07e">3.75</div><div class="c" style="left:183.6px;top:165.5px;background:#93e97d">5.00</div><div class="c" style="left:229.6px;top:165.5px;background:#93e97d">5.00</div><div class="c" style="left:275.6px;top:165.5px;background:#93e97d">5.00</div><div class="c" style="left:321.6px;top:165.5px;background:#93e97d">5.00</div><div class="c" style="left:367.6px;top:165.5px;background:#8eee7e">4.00</div><div class="c" style="left:413.6px;top:165.5px;background:#87f67f">2.50</div><div class="c" style="left:459.6px;top:165.5px;background:#82fc7f">1.50</div><div class="c" style="left:505.6px;top:165.5px;background:#82fc7f">1.50</div><div class="c" style="left:551.6px;top:165.5px;background:#82fc7f">1.50</div><div class="c" style="left:597.6px;top:165.5px;background:#82fc7f">1.50</div><div class="c" style="left:643.6px;top:165.5px;background:#82fc7f">1.50</div><div class="c" style="left:689.6px;top:165.5px;background:#82fc7f">1.50</div><div class="c" style="left:735.6px;top:165.5px;background:#82fc7f">1.50</div><div class="c" style="left:781.6px;top:165.5px;background:#82fc7f">1.50</div><div class="c" style="left:827.6px;top:165.5px;background:#82fc7f">1.50</div><div class="c" style="left:873.6px;top:165.5px;background:#82fc7f">1.50</div><div class="c" style="left:919.6px;top:165.5px;background:#82fc7f">1.50</div><div class="c" style="left:965.6px;top:165.5px;background:#82fc7f">1.50</div><div class="c" style="left:1011.6px;top:165.5px;background:#82fc7f">1.50</div><div class="c" style="left:1057.6px;top:165.5px;background:#82fc7f">1.50</div>
<div class="rh" style="top:180.5px;left:0px">2250</div>
<div class="c" style="left:45.6px;top:180.5px;background:#88f57e">2.75</div><div class="c" style="left:91.6px;top:180.5px;background:#88f57e">2.75</div><div class="c" style="left:137.6px;top:180.5px;background:#91ea7d">4.75</div><div class="c" style="left:183.6px;top:180.5px;background:#9cde7c">7.00</div><div class="c" style="left:229.6px;top:180.5px;background:#9cde7c">7.00</div><div class="c" style="left:275.6px;top:180.5px;background:#9cde7c">7.00</div><div class="c" style="left:321.6px;top:180.5px;background:#9cde7c">7.00</div><div class="c" style="left:367.6px;top:180.5px;background:#94e87d">5.25</div><div class="c" style="left:413.6px;top:180.5px;background:#8af27e">3.25</div><div class="c" style="left:459.6px;top:180.5px;background:#85f87f">2.25</div><div class="c" style="left:505.6px;top:180.5px;background:#84f97f">2.00</div><div class="c" style="left:551.6px;top:180.5px;background:#83fa7f">1.75</div><div class="c" style="left:597.6px;top:180.5px;background:#83fa7f">1.75</div><div class="c" style="left:643.6px;top:180.5px;background:#83fa7f">1.75</div><div class="c" style="left:689.6px;top:180.5px;background:#83fa7f">1.75</div><div class="c" style="left:735.6px;top:180.5px;background:#83fa7f">1.75</div><div class="c" style="left:781.6px;top:180.5px;background:#83fa7f">1.75</div><div class="c" style="left:827.6px;top:180.5px;background:#83fa7f">1.75</div><div class="c" style="left:873.6px;top:180.5px;background:#83fa7f">1.75</div><div class="c" style="left:919.6px;top:180.5px;background:#83fa7f">1.75</div><div class="c" style="left:965.6px;top:180.5px;background:#83fa7f">1.75</div><div class="c" style="left:1011.6px;top:180.5px;background:#83fa7f">1.75</div><div class="c" style="left:1057.6px;top:180.5px;background:#83fa7f">1.75</div>
<div class="rh" style="top:195.5px;left:0px">2500</div>
<div class="c" style="left:45.6px;top:195.5px;background:#8af27e">3.25</div><div class="c" style="left:91.6px;top:195.5px;background:#8af27e">3.25</div><div class="c" style="left:137.6px;top:195.5px;background:#99e27c">6.25</div><div class="c" style="left:183.6px;top:195.5px;background:#a8d17a">9.50</div><div class="c" style="left:229.6px;top:195.5px;background:#a8d17a">9.50</div><div class="c" style="left:275.6px;top:195.5px;background:#a8d17a">9.50</div><div class="c" style="left:321.6px;top:195.5px;background:#a6d37b">9.00</div><div class="c" style="left:367.6px;top:195.5px;background:#99e27c">6.25</div><div class="c" style="left:413.6px;top:195.5px;background:#8fed7e">4.25</div><div class="c" style="left:459.6px;top:195.5px;background:#88f57e">2.75</div><div class="c" style="left:505.6px;top:195.5px;background:#87f67f">2.50</div><div class="c" style="left:551.6px;top:195.5px;background:#85f87f">2.25</div><div class="c" style="left:597.6px;top:195.5px;background:#85f87f">2.25</div><div class="c" style="left:643.6px;top:195.5px;background:#85f87f">2.25</div><div class="c" style="left:689.6px;top:195.5px;background:#85f87f">2.25</div><div class="c" style="left:735.6px;top:195.5px;background:#85f87f">2.25</div><div class="c" style="left:781.6px;top:195.5px;background:#85f87f">2.25</div><div class="c" style="left:827.6px;top:195.5px;background:#85f87f">2.25</div><div class="c" style="left:873.6px;top:195.5px;background:#85f87f">2.25</div><div class="c" style="left:919.6px;top:195.5px;background:#85f87f">2.25</div><div class="c" style="left:965.6px;top:195.5px;background:#85f87f">2.25</div><div class="c" style="left:1011.6px;top:195.5px;background:#85f87f">2.25</div><div class="c" style="left:1057.6px;top:195.5px;background:#85f87f">2.25</div>
<div class="rh" style="top:210.5px;left:0px">2750</div>
<div class="c" style="left:45.6px;top:210.5px;background:#93e97d">5.00</div><div class="c" style="left:91.6px;top:210.5px;background:#93e97d">5.00</div><div class="c" style="left:137.6px;top:210.5px;background:#a1d97b">8.00</div><div class="c" style="left:183.6px;top:210.5px;background:#b2c679">11.50</div><div class="c" style="left:229.6px;top:210.5px;background:#b2c679">11.50</div><div class="c" style="left:275.6px;top:210.5px;background:#b2c679">11.50</div><div class="c" style="left:321.6px;top:210.5px;background:#b1c779">11.25</div><div class="c" style="left:367.6px;top:210.5px;background:#9fdb7c">7.50</div><div class="c" style="left:413.6px;top:210.5px;background:#93e97d">5.00</div><div class="c" style="left:459.6px;top:210.5px;background:#89f47e">3.00</div><div class="c" style="left:505.6px;top:210.5px;background:#89f47e">3.00</div><div class="c" style="left:551.6px;top:210.5px;background:#88f57e">2.75</div><div class="c" style="left:597.6px;top:210.5px;background:#88f57e">2.75</div><div class="c" style="left:643.6px;top:210.5px;background:#88f57e">2.75</div><div class="c" style="left:689.6px;top:210.5px;background:#88f57e">2.75</div><div class="c" style="left:735.6px;top:210.5px;background:#88f57e">2.75</div><div class="c" style="left:781.6px;top:210.5px;background:#88f57e">2.75</div><div class="c" style="left:827.6px;top:210.5px;background:#88f57e">2.75</div><div class="c" style="left:873.6px;top:210.5px;background:#88f57e">2.75</div><div class="c" style="left:919.6px;top:210.5px;background:#88f57e">2.75</div><div class="c" style="left:965.6px;top:210.5px;background:#88f57e">2.75</div><div class="c" style="left:1011.6px;top:210.5px;background:#88f57e">2.75</div><div class="c" style="left:1057.6px;top:210.5px;background:#88f57e">2.75</div>
<div class="rh" style="top:225.5px;left:0px">3000</div>
<div class="c" style="left:45.6px;top:225.5px;background:#9cde7c">7.00</div><div class="c" style="left:91.6px;top:225.5px;background:#9cde7c">7.00</div><div class="c" style="left:137.6px;top:225.5px;background:#abce7a">10.00</div><div class="c" style="left:183.6px;top:225.5px;background:#bbbb78">13.50</div><div class="c" style="left:229.6px;top:225.5px;background:#bbbb78">13.50</div><div class="c" style="left:275.6px;top:225.5px;background:#bbbb78">13.50</div><div class="c" style="left:321.6px;top:225.5px;background:#b4c379">12.00</div><div class="c" style="left:367.6px;top:225.5px;background:#adcb7a">10.50</div><div class="c" style="left:413.6px;top:225.5px;background:#a1d97b">8.00</div><div class="c" style="left:459.6px;top:225.5px;background:#93e97d">5.00</div><div class="c" style="left:505.6px;top:225.5px;background:#8eee7e">4.00</div><div class="c" style="left:551.6px;top:225.5px;background:#8bf17e">3.50</div><div class="c" style="left:597.6px;top:225.5px;background:#8bf17e">3.50</div><div class="c" style="left:643.6px;top:225.5px;background:#8bf17e">3.50</div><div class="c" style="left:689.6px;top:225.5px;background:#8bf17e">3.50</div><div class="c" style="left:735.6px;top:225.5px;background:#8bf17e">3.50</div><div class="c" style="left:781.6px;top:225.5px;background:#8bf17e">3.50</div><div class="c" style="left:827.6px;top:225.5px;background:#8bf17e">3.50</div><div class="c" style="left:873.6px;top:225.5px;background:#8bf17e">3.50</div><div class="c" style="left:919.6px;top:225.5px;background:#8bf17e">3.50</div><div class="c" style="left:965.6px;top:225.5px;background:#8bf17e">3.50</div><div class="c" style="left:1011.6px;top:225.5px;background:#8bf17e">3.50</div><div class="c" style="left:1057.6px;top:225.5px;background:#8bf17e">3.50</div>
<div class="rh" style="top:240.5px;left:0px">3250</div>
<div class="c" style="left:45.6px;top:240.5px;background:#a7d27b">9.25</div><div class="c" style="left:91.6px;top:240.5px;background:#a7d27b">9.25</div><div class="c" style="left:137.6px;top:240.5px;background:#b4c379">12.00</div><div class="c" style="left:183.6px;top:240.5px;background:#c4b277">15.25</div><div class="c" style="left:229.6px;top:240.5px;background:#c4b277">15.25</div><div class="c" style="left:275.6px;top:240.5px;background:#c0b677">14.50</div><div class="c" style="left:321.6px;top:240.5px;background:#babc78">13.25</div><div class="c" style="left:367.6px;top:240.5px;background:#b4c379">12.00</div><div class="c" style="left:413.6px;top:240.5px;background:#adcb7a">10.50</div><div class="c" style="left:459.6px;top:240.5px;background:#9fdb7c">7.50</div><div class="c" style="left:505.6px;top:240.5px;background:#95e67d">5.50</div><div class="c" style="left:551.6px;top:240.5px;background:#95e67d">5.50</div><div class="c" style="left:597.6px;top:240.5px;background:#95e67d">5.50</div><div class="c" style="left:643.6px;top:240.5px;background:#95e67d">5.50</div><div class="c" style="left:689.6px;top:240.5px;background:#96e57d">5.75</div><div class="c" style="left:735.6px;top:240.5px;background:#97e47c">6.00</div><div class="c" style="left:781.6px;top:240.5px;background:#97e47c">6.00</div><div class="c" style="left:827.6px;top:240.5px;background:#97e47c">6.00</div><div class="c" style="left:873.6px;top:240.5px;background:#97e47c">6.00</div><div class="c" style="left:919.6px;top:240.5px;background:#97e47c">6.00</div><div class="c" style="left:965.6px;top:240.5px;background:#97e47c">6.00</div><div class="c" style="left:1011.6px;top:240.5px;background:#97e47c">6.00</div><div class="c" style="left:1057.6px;top:240.5px;background:#97e47c">6.00</div>
<div class="rh" style="top:255.5px;left:0px">3500</div>
<div class="c" style="left:45.6px;top:255.5px;background:#b1c779">11.25</div><div class="c" style="left:91.6px;top:255.5px;background:#b1c779">11.25</div><div class="c" style="left:137.6px;top:255.5px;background:#beb878">14.00</div><div class="c" style="left:183.6px;top:255.5px;background:#cca876">17.00</div><div class="c" style="left:229.6px;top:255.5px;background:#cca876">17.00</div><div class="c" style="left:275.6px;top:255.5px;background:#c7ae76">16.00</div><div class="c" style="left:321.6px;top:255.5px;background:#beb878">14.00</div><div class="c" style="left:367.6px;top:255.5px;background:#b9be78">13.00</div><div class="c" style="left:413.6px;top:255.5px;background:#b4c379">12.00</div><div class="c" style="left:459.6px;top:255.5px;background:#accd7a">10.25</div><div class="c" style="left:505.6px;top:255.5px;background:#a5d57b">8.75</div><div class="c" style="left:551.6px;top:255.5px;background:#a3d67b">8.50</div><div class="c" style="left:597.6px;top:255.5px;background:#a1d97b">8.00</div><div class="c" style="left:643.6px;top:255.5px;background:#a1d97b">8.00</div><div class="c" style="left:689.6px;top:255.5px;background:#a1d97b">8.00</div><div class="c" style="left:735.6px;top:255.5px;background:#a1d97b">8.00</div><div class="c" style="left:781.6px;top:255.5px;background:#9fdb7c">7.50</div><div class="c" style="left:827.6px;top:255.5px;background:#a0da7b">7.75</div><div class="c" style="left:873.6px;top:255.5px;background:#a0da7b">7.75</div><div class="c" style="left:919.6px;top:255.5px;background:#a0da7b">7.75</div><div class="c" style="left:965.6px;top:255.5px;background:#a1d97b">8.00</div><div class="c" style="left:1011.6px;top:255.5px;background:#a2d77b">8.25</div><div class="c" style="left:1057.6px;top:255.5px;background:#a2d77b">8.25</div>
<div class="rh" style="top:270.5px;left:0px">3750</div>
<div class="c" style="left:45.6px;top:270.5px;background:#babc78">13.25</div><div class="c" style="left:91.6px;top:270.5px;background:#babc78">13.25</div><div class="c" style="left:137.6px;top:270.5px;background:#c5b077">15.50</div><div class="c" style="left:183.6px;top:270.5px;background:#d2a175">18.25</div><div class="c" style="left:229.6px;top:270.5px;background:#d2a175">18.25</div><div class="c" style="left:275.6px;top:270.5px;background:#cda776">17.25</div><div class="c" style="left:321.6px;top:270.5px;background:#c7ae76">16.00</div><div class="c" style="left:367.6px;top:270.5px;background:#c0b677">14.50</div><div class="c" style="left:413.6px;top:270.5px;background:#b9be78">13.00</div><div class="c" style="left:459.6px;top:270.5px;background:#b2c679">11.50</div><div class="c" style="left:505.6px;top:270.5px;background:#aeca7a">10.75</div><div class="c" style="left:551.6px;top:270.5px;background:#adcb7a">10.50</div><div class="c" style="left:597.6px;top:270.5px;background:#adcb7a">10.50</div><div class="c" style="left:643.6px;top:270.5px;background:#abce7a">10.00</div><div class="c" style="left:689.6px;top:270.5px;background:#a9cf7a">9.75</div><div class="c" style="left:735.6px;top:270.5px;background:#a7d27b">9.25</div><div class="c" style="left:781.6px;top:270.5px;background:#a6d37b">9.00</div><div class="c" style="left:827.6px;top:270.5px;background:#a6d37b">9.00</div><div class="c" style="left:873.6px;top:270.5px;background:#a6d37b">9.00</div><div class="c" style="left:919.6px;top:270.5px;background:#a6d37b">9.00</div><div class="c" style="left:965.6px;top:270.5px;background:#a6d37b">9.00</div><div class="c" style="left:1011.6px;top:270.5px;background:#a6d37b">9.00</div><div class="c" style="left:1057.6px;top:270.5px;background:#a6d37b">9.00</div>
<div class="rh" style="top:285.5px;left:0px">4000</div>
<div class="c" style="left:45.6px;top:285.5px;background:#c5b077">15.50</div><div class="c" style="left:91.6px;top:285.5px;background:#c5b077">15.50</div><div class="c" style="left:137.6px;top:285.5px;background:#cda776">17.25</div><div class="c" style="left:183.6px;top:285.5px;background:#d79c74">19.25</div><div class="c" style="left:229.6px;top:285.5px;background:#d79c74">19.25</div><div class="c" style="left:275.6px;top:285.5px;background:#d3a075">18.50</div><div class="c" style="left:321.6px;top:285.5px;background:#cbaa76">16.75</div><div class="c" style="left:367.6px;top:285.5px;background:#c3b377">15.00</div><div class="c" style="left:413.6px;top:285.5px;background:#bbbb78">13.50</div><div class="c" style="left:459.6px;top:285.5px;background:#b7c079">12.50</div><div class="c" style="left:505.6px;top:285.5px;background:#b4c379">12.00</div><div class="c" style="left:551.6px;top:285.5px;background:#b4c379">12.00</div><div class="c" style="left:597.6px;top:285.5px;background:#b4c379">12.00</div><div class="c" style="left:643.6px;top:285.5px;background:#b2c679">11.50</div><div class="c" style="left:689.6px;top:285.5px;background:#b1c779">11.25</div><div class="c" style="left:735.6px;top:285.5px;background:#afc979">11.00</div><div class="c" style="left:781.6px;top:285.5px;background:#adcb7a">10.50</div><div class="c" style="left:827.6px;top:285.5px;background:#adcb7a">10.50</div><div class="c" style="left:873.6px;top:285.5px;background:#adcb7a">10.50</div><div class="c" style="left:919.6px;top:285.5px;background:#adcb7a">10.50</div><div class="c" style="left:965.6px;top:285.5px;background:#adcb7a">10.50</div><div class="c" style="left:1011.6px;top:285.5px;background:#adcb7a">10.50</div><div class="c" style="left:1057.6px;top:285.5px;background:#adcb7a">10.50</div>
<div class="rh" style="top:300.5px;left:0px">4250</div>
<div class="c" style="left:45.6px;top:300.5px;background:#cfa576">17.50</div><div class="c" style="left:91.6px;top:300.5px;background:#cfa576">17.50</div><div class="c" style="left:137.6px;top:300.5px;background:#d59f75">18.75</div><div class="c" style="left:183.6px;top:300.5px;background:#dc9774">20.25</div><div class="c" style="left:229.6px;top:300.5px;background:#dc9774">20.25</div><div class="c" style="left:275.6px;top:300.5px;background:#d79c74">19.25</div><div class="c" style="left:321.6px;top:300.5px;background:#cfa576">17.50</div><div class="c" style="left:367.6px;top:300.5px;background:#c7ae76">16.00</div><div class="c" style="left:413.6px;top:300.5px;background:#bfb778">14.25</div><div class="c" style="left:459.6px;top:300.5px;background:#b9be78">13.00</div><div class="c" style="left:505.6px;top:300.5px;background:#b9be78">13.00</div><div class="c" style="left:551.6px;top:300.5px;background:#b9be78">13.00</div><div class="c" style="left:597.6px;top:300.5px;background:#b9be78">13.00</div><div class="c" style="left:643.6px;top:300.5px;background:#b7c079">12.50</div><div class="c" style="left:689.6px;top:300.5px;background:#b4c379">12.00</div><div class="c" style="left:735.6px;top:300.5px;background:#b3c479">11.75</div><div class="c" style="left:781.6px;top:300.5px;background:#b2c679">11.50</div><div class="c" style="left:827.6px;top:300.5px;background:#b2c679">11.50</div><div class="c" style="left:873.6px;top:300.5px;background:#b2c679">11.50</div><div class="c" style="left:919.6px;top:300.5px;background:#b2c679">11.50</div><div class="c" style="left:965.6px;top:300.5px;background:#b2c679">11.50</div><div class="c" style="left:1011.6px;top:300.5px;background:#b2c679">11.50</div><div class="c" style="left:1057.6px;top:300.5px;background:#b2c679">11.50</div>
<div class="rh" style="top:315.5px;left:0px">4500</div>
<div class="c" style="left:45.6px;top:315.5px;background:#d89b74">19.50</div><div class="c" style="left:91.6px;top:315.5px;background:#d89b74">19.50</div><div class="c" style="left:137.6px;top:315.5px;background:#dd9574">20.50</div><div class="c" style="left:183.6px;top:315.5px;background:#e48d73">22.00</div><div class="c" style="left:229.6px;top:315.5px;background:#e38f73">21.75</div><div class="c" style="left:275.6px;top:315.5px;background:#de9474">20.75</div><div class="c" style="left:321.6px;top:315.5px;background:#d69d75">19.00</div><div class="c" style="left:367.6px;top:315.5px;background:#cfa576">17.50</div><div class="c" style="left:413.6px;top:315.5px;background:#c5b077">15.50</div><div class="c" style="left:459.6px;top:315.5px;background:#beb878">14.00</div><div class="c" style="left:505.6px;top:315.5px;background:#beb878">14.00</div><div class="c" style="left:551.6px;top:315.5px;background:#bdba78">13.75</div><div class="c" style="left:597.6px;top:315.5px;background:#bdba78">13.75</div><div class="c" style="left:643.6px;top:315.5px;background:#babc78">13.25</div><div class="c" style="left:689.6px;top:315.5px;background:#b7c079">12.50</div><div class="c" style="left:735.6px;top:315.5px;background:#b5c279">12.25</div><div class="c" style="left:781.6px;top:315.5px;background:#b4c379">12.00</div><div class="c" style="left:827.6px;top:315.5px;background:#b4c379">12.00</div><div class="c" style="left:873.6px;top:315.5px;background:#b4c379">12.00</div><div class="c" style="left:919.6px;top:315.5px;background:#b4c379">12.00</div><div class="c" style="left:965.6px;top:315.5px;background:#b4c379">12.00</div><div class="c" style="left:1011.6px;top:315.5px;background:#b4c379">12.00</div><div class="c" style="left:1057.6px;top:315.5px;background:#b4c379">12.00</div>
<div class="rh" style="top:330.5px;left:0px">4750</div>
<div class="c" style="left:45.6px;top:330.5px;background:#e38f73">21.75</div><div class="c" style="left:827.6px;top:330.5px;background:#b5c279">12.25</div><div class="c" style="left:873.6px;top:330.5px;background:#b5c279">12.25</div><div class="c" style="left:919.6px;top:330.5px;background:#b5c279">12.25</div><div class="c" style="left:965.6px;top:330.5px;background:#b7c079">12.50</div><div class="c" style="left:1011.6px;top:330.5px;background:#b7c079">12.50</div><div class="c" style="left:1057.6px;top:330.5px;background:#b7c079">12.50</div>
<div class="rh" style="top:345.5px;left:0px">5000</div>
<div class="c" style="left:45.6px;top:345.5px;background:#ea8672">23.25</div><div class="c" style="left:827.6px;top:345.5px;background:#b5c279">12.25</div><div class="c" style="left:873.6px;top:345.5px;background:#b5c279">12.25</div><div class="c" style="left:919.6px;top:345.5px;background:#b5c279">12.25</div><div class="c" style="left:965.6px;top:345.5px;background:#b7c079">12.50</div><div class="c" style="left:1011.6px;top:345.5px;background:#b7c079">12.50</div><div class="c" style="left:1057.6px;top:345.5px;background:#b7c079">12.50</div>
<div class="rh" style="top:360.5px;left:0px">5250</div>
<div class="c" style="left:45.6px;top:360.5px;background:#ef8171">24.25</div><div class="c" style="left:827.6px;top:360.5px;background:#b5c279">12.25</div><div class="c" style="left:873.6px;top:360.5px;background:#b5c279">12.25</div><div class="c" style="left:919.6px;top:360.5px;background:#b5c279">12.25</div><div class="c" style="left:965.6px;top:360.5px;background:#b7c079">12.50</div><div class="c" style="left:1011.6px;top:360.5px;background:#b8bf78">12.75</div><div class="c" style="left:1057.6px;top:360.5px;background:#b7c079">12.50</div>
<div class="rh" style="top:375.5px;left:0px">5500</div>
<div class="c" style="left:45.6px;top:375.5px;background:#f17e71">24.75</div><div class="c" style="left:827.6px;top:375.5px;background:#b5c279">12.25</div><div class="c" style="left:873.6px;top:375.5px;background:#b7c079">12.50</div><div class="c" style="left:919.6px;top:375.5px;background:#b7c079">12.50</div><div class="c" style="left:965.6px;top:375.5px;background:#b7c079">12.50</div><div class="c" style="left:1011.6px;top:375.5px;background:#b8bf78">12.75</div><div class="c" style="left:1057.6px;top:375.5px;background:#b5c279">12.25</div>
<div class="rh" style="top:390.5px;left:0px">5750</div>
<div class="c" style="left:45.6px;top:390.5px;background:#f57a71">25.50</div><div class="c" style="left:827.6px;top:390.5px;background:#b8bf78">12.75</div><div class="c" style="left:873.6px;top:390.5px;background:#b8bf78">12.75</div><div class="c" style="left:919.6px;top:390.5px;background:#b8bf78">12.75</div><div class="c" style="left:965.6px;top:390.5px;background:#b7c079">12.50</div><div class="c" style="left:1011.6px;top:390.5px;background:#b8bf78">12.75</div><div class="c" style="left:1057.6px;top:390.5px;background:#b5c279">12.25</div>
<div class="rh" style="top:405.5px;left:0px">6000</div>
<div class="c" style="left:45.6px;top:405.5px;background:#f77870">26.00</div><div class="c" style="left:827.6px;top:405.5px;background:#b9be78">13.00</div><div class="c" style="left:873.6px;top:405.5px;background:#b8bf78">12.75</div><div class="c" style="left:919.6px;top:405.5px;background:#b8bf78">12.75</div><div class="c" style="left:965.6px;top:405.5px;background:#b7c079">12.50</div><div class="c" style="left:1011.6px;top:405.5px;background:#b8bf78">12.75</div><div class="c" style="left:1057.6px;top:405.5px;background:#b5c279">12.25</div>
<div class="rh" style="top:420.5px;left:0px">6250</div>
<div class="c" style="left:45.6px;top:420.5px;background:#fa7570">26.50</div><div class="c" style="left:827.6px;top:420.5px;background:#b9be78">13.00</div><div class="c" style="left:873.6px;top:420.5px;background:#b8bf78">12.75</div><div class="c" style="left:919.6px;top:420.5px;background:#b8bf78">12.75</div><div class="c" style="left:965.6px;top:420.5px;background:#b7c079">12.50</div><div class="c" style="left:1011.6px;top:420.5px;background:#b8bf78">12.75</div><div class="c" style="left:1057.6px;top:420.5px;background:#b5c279">12.25</div>
<div class="rh" style="top:435.5px;left:0px">6500</div>
<div class="c" style="left:45.6px;top:435.5px;background:#ff7070">27.50</div><div class="c" style="left:827.6px;top:435.5px;background:#b9be78">13.00</div><div class="c" style="left:873.6px;top:435.5px;background:#b9be78">13.00</div><div class="c" style="left:919.6px;top:435.5px;background:#b8bf78">12.75</div><div class="c" style="left:965.6px;top:435.5px;background:#b8bf78">12.75</div><div class="c" style="left:1011.6px;top:435.5px;background:#b8bf78">12.75</div><div class="c" style="left:1057.6px;top:435.5px;background:#b5c279">12.25</div>
<div class="rh" style="top:450.5px;left:0px">6750</div>
<div class="c" style="left:45.6px;top:450.5px;background:#ff7070">27.50</div><div class="c" style="left:827.6px;top:450.5px;background:#babc78">13.25</div><div class="c" style="left:873.6px;top:450.5px;background:#babc78">13.25</div><div class="c" style="left:919.6px;top:450.5px;background:#babc78">13.25</div><div class="c" style="left:965.6px;top:450.5px;background:#b9be78">13.00</div><div class="c" style="left:1011.6px;top:450.5px;background:#b8bf78">12.75</div><div class="c" style="left:1057.6px;top:450.5px;background:#b7c079">12.50</div>
<div class="rh" style="top:465.5px;left:0px">7000</div>
<div class="c" style="left:45.6px;top:465.5px;background:#ff7070">27.50</div><div class="c" style="left:827.6px;top:465.5px;background:#bdba78">13.75</div><div class="c" style="left:873.6px;top:465.5px;background:#bdba78">13.75</div><div class="c" style="left:919.6px;top:465.5px;background:#bdba78">13.75</div><div class="c" style="left:965.6px;top:465.5px;background:#bbbb78">13.50</div><div class="c" style="left:1011.6px;top:465.5px;background:#b9be78">13.00</div><div class="c" style="left:1057.6px;top:465.5px;background:#b8bf78">12.75</div>
<div class="rh" style="top:480.5px;left:0px">7250</div>
<div class="c" style="left:45.6px;top:480.5px;background:#ff7070">27.50</div><div class="c" style="left:827.6px;top:480.5px;background:#beb878">14.00</div><div class="c" style="left:873.6px;top:480.5px;background:#beb878">14.00</div><div class="c" style="left:919.6px;top:480.5px;background:#bdba78">13.75</div><div class="c" style="left:965.6px;top:480.5px;background:#bdba78">13.75</div><div class="c" style="left:1011.6px;top:480.5px;background:#bbbb78">13.50</div><div class="c" style="left:1057.6px;top:480.5px;background:#bbbb78">13.50</div>
<div class="rh" style="top:495.5px;left:0px">7500</div>
<div class="c" style="left:45.6px;top:495.5px;background:#ff7070">27.50</div><div class="c" style="left:827.6px;top:495.5px;background:#bfb778">14.25</div><div class="c" style="left:873.6px;top:495.5px;background:#beb878">14.00</div><div class="c" style="left:919.6px;top:495.5px;background:#bdba78">13.75</div><div class="c" style="left:965.6px;top:495.5px;background:#bdba78">13.75</div><div class="c" style="left:1011.6px;top:495.5px;background:#bbbb78">13.50</div><div class="c" style="left:1057.6px;top:495.5px;background:#bbbb78">13.50</div>
<div class="rh" style="top:510.5px;left:0px">7750</div>
<div class="c" style="left:45.6px;top:510.5px;background:#ff7070">27.50</div><div class="c" style="left:827.6px;top:510.5px;background:#bfb778">14.25</div><div class="c" style="left:873.6px;top:510.5px;background:#beb878">14.00</div><div class="c" style="left:919.6px;top:510.5px;background:#bdba78">13.75</div><div class="c" style="left:965.6px;top:510.5px;background:#bbbb78">13.50</div><div class="c" style="left:1011.6px;top:510.5px;background:#babc78">13.25</div><div class="c" style="left:1057.6px;top:510.5px;background:#b9be78">13.00</div>
<div class="rh" style="top:525.5px;left:0px">8000</div>
<div class="c" style="left:45.6px;top:525.5px;background:#ff7070">27.50</div><div class="c" style="left:827.6px;top:525.5px;background:#bfb778">14.25</div><div class="c" style="left:873.6px;top:525.5px;background:#bfb778">14.25</div><div class="c" style="left:919.6px;top:525.5px;background:#beb878">14.00</div><div class="c" style="left:965.6px;top:525.5px;background:#bdba78">13.75</div><div class="c" style="left:1011.6px;top:525.5px;background:#babc78">13.25</div><div class="c" style="left:1057.6px;top:525.5px;background:#babc78">13.25</div>
<div class="rh" style="top:540.5px;left:0px">8250</div>
<div class="c" style="left:45.6px;top:540.5px;background:#ff7070">27.50</div><div class="c" style="left:827.6px;top:540.5px;background:#c3b377">15.00</div><div class="c" style="left:873.6px;top:540.5px;background:#c3b377">15.00</div><div class="c" style="left:919.6px;top:540.5px;background:#c0b677">14.50</div><div class="c" style="left:965.6px;top:540.5px;background:#bfb778">14.25</div><div class="c" style="left:1011.6px;top:540.5px;background:#bfb778">14.25</div><div class="c" style="left:1057.6px;top:540.5px;background:#beb878">14.00</div>
<div class="rh" style="top:555.5px;left:0px">8500</div>
<div class="c" style="left:45.6px;top:555.5px;background:#ff7070">27.50</div><div class="c" style="left:827.6px;top:555.5px;background:#c4b277">15.25</div><div class="c" style="left:873.6px;top:555.5px;background:#c4b277">15.25</div><div class="c" style="left:919.6px;top:555.5px;background:#c1b477">14.75</div><div class="c" style="left:965.6px;top:555.5px;background:#c0b677">14.50</div><div class="c" style="left:1011.6px;top:555.5px;background:#bfb778">14.25</div><div class="c" style="left:1057.6px;top:555.5px;background:#beb878">14.00</div>
<div class="rh" style="top:570.5px;left:0px">8750</div>
<div class="c" style="left:45.6px;top:570.5px;background:#ff7070">27.50</div><div class="c" style="left:827.6px;top:570.5px;background:#c6af77">15.75</div><div class="c" style="left:873.6px;top:570.5px;background:#c5b077">15.50</div><div class="c" style="left:919.6px;top:570.5px;background:#c4b277">15.25</div><div class="c" style="left:965.6px;top:570.5px;background:#c3b377">15.00</div><div class="c" style="left:1011.6px;top:570.5px;background:#c1b477">14.75</div><div class="c" style="left:1057.6px;top:570.5px;background:#c0b677">14.50</div>
<div class="rh" style="top:585.5px;left:0px">9000</div>
<div class="c" style="left:45.6px;top:585.5px;background:#ff7070">27.50</div><div class="c" style="left:827.6px;top:585.5px;background:#c7ae76">16.00</div><div class="c" style="left:873.6px;top:585.5px;background:#c6af77">15.75</div><div class="c" style="left:919.6px;top:585.5px;background:#c5b077">15.50</div><div class="c" style="left:965.6px;top:585.5px;background:#c4b277">15.25</div><div class="c" style="left:1011.6px;top:585.5px;background:#c4b277">15.25</div><div class="c" style="left:1057.6px;top:585.5px;background:#c3b377">15.00</div>
<div class="rh" style="top:600.5px;left:0px">9500</div>
<div class="c" style="left:45.6px;top:600.5px;background:#ff7070">27.50</div><div class="c" style="left:827.6px;top:600.5px;background:#c7ae76">16.00</div><div class="c" style="left:873.6px;top:600.5px;background:#c6af77">15.75</div><div class="c" style="left:919.6px;top:600.5px;background:#c5b077">15.50</div><div class="c" style="left:965.6px;top:600.5px;background:#c5b077">15.50</div><div class="c" style="left:1011.6px;top:600.5px;background:#c4b277">15.25</div><div class="c" style="left:1057.6px;top:600.5px;background:#c3b377">15.00</div>
<div class="rh" style="top:615.5px;left:0px">10000</div>
<div class="c" style="left:45.6px;top:615.5px;background:#ff7070">27.50</div><div class="c" style="left:827.6px;top:615.5px;background:#c7ae76">16.00</div><div class="c" style="left:873.6px;top:615.5px;background:#c6af77">15.75</div><div class="c" style="left:919.6px;top:615.5px;background:#c5b077">15.50</div><div class="c" style="left:965.6px;top:615.5px;background:#c5b077">15.50</div><div class="c" style="left:1011.6px;top:615.5px;background:#c4b277">15.25</div><div class="c" style="left:1057.6px;top:615.5px;background:#c3b377">15.00</div>
<div class="rh" style="top:630.5px;left:0px">10500</div>
<div class="c" style="left:45.6px;top:630.5px;background:#ff7070">27.50</div><div class="c" style="left:827.6px;top:630.5px;background:#c7ae76">16.00</div><div class="c" style="left:873.6px;top:630.5px;background:#c6af77">15.75</div><div class="c" style="left:919.6px;top:630.5px;background:#c5b077">15.50</div><div class="c" style="left:965.6px;top:630.5px;background:#c5b077">15.50</div><div class="c" style="left:1011.6px;top:630.5px;background:#c4b277">15.25</div><div class="c" style="left:1057.6px;top:630.5px;background:#c3b377">15.00</div>
</div>
<div id="stat"><div class="abs" style="left:73px;top:2px;width:1px;height:20px;background:#d4d4d4"></div><svg class="abs" style="right:6px;bottom:1px" width="10" height="10"><path d="M8 0h2v2h-2zM8 4h2v2h-2zM8 8h2v2h-2zM4 4h2v2h-2zM4 8h2v2h-2zM0 8h2v2h-2z" fill="#b0b0b0"/></svg></div>
</div>
<div id="gw">
<div id="gcap"><svg class="abs" style="left:9px;top:9px" width="17" height="12" viewBox="0 0 17 12"><rect x="0" y="2" width="16.500" height="8" fill="#111"/><path d="M1.500 0v12M4.200 0v12M6.900 0v12M9.600 0v12M12.300 0v12M15 0v12" stroke="#111" stroke-width="1.100"/></svg><span>Main Spark Advance 1</span>
<svg class="abs" style="left:610px;top:4px" width="130" height="22"><path d="M11 10.500h10" stroke="#111" stroke-width="1"/><rect x="56.500" y="5.500" width="9" height="9" rx="1.500" fill="none" stroke="#111" stroke-width="1"/><path d="M102 5.500l10 10M112 5.500l-10 10" stroke="#111" stroke-width="1"/></svg>
</div>
<div id="gmenu"><span class="abs" style="left:8px;top:3px">Graph</span><span class="abs" style="left:54px;top:3px">View</span></div>
<div id="gtb"><div class="abs" style="left:0;top:1px;width:740px;height:26px">
<div class="abs" style="left:4px;top:3px;width:2px;height:20px;border-left:1px solid #fff;border-right:1px solid #a0a0a0"></div>
<svg class="abs" style="left:14px;top:7px" width="12" height="13" viewBox="0 0 12 13"><path d="M1 1l10 11M11 1L1 12" stroke="#f01010" stroke-width="2.200" fill="none"/></svg>
<div class="abs" style="left:40px;top:3px;width:2px;height:20px;border-left:1px solid #a0a0a0;border-right:1px solid #fff"></div>
<div class="abs" style="left:47px;top:2px;width:23px;height:22px;background:#cce4f7;border:1px solid #8fc4ea;border-radius:2px"></div>
<svg class="abs" style="left:51px;top:6px" width="16" height="16" viewBox="0 0 16 16"><path d="M8 0L16 8 8 16 0 8z" fill="#111"/><circle cx="8" cy="8" r="4.300" fill="#d8dde2"/><path d="M8 3.500v9M3.500 8h9" stroke="#c01010" stroke-width="1.400"/><circle cx="8" cy="8" r="4.300" fill="none" stroke="#111" stroke-width=".8"/></svg>
<svg class="abs" style="left:73.500px;top:5.500px" width="17" height="16" viewBox="0 0 17 16"><path d="M.5 15L3 6.500 6 12.500 10.500 5.500 13.500 2.500" stroke="#e01010" stroke-width="1.200" fill="none"/><path d="M13.500 2.500l1 9" stroke="#e01010" stroke-width="1" stroke-dasharray="1.500 1.500"/><g fill="#fff" stroke="#1818e8" stroke-width="1.100"><circle cx="3" cy="6.500" r="1.700"/><circle cx="6" cy="12.500" r="1.700"/><circle cx="10.500" cy="5.500" r="1.700"/><circle cx="13.500" cy="2.500" r="1.700"/><circle cx="14.500" cy="10.500" r="1.500"/></g></svg>
<div class="abs" style="left:93px;top:2px;width:23px;height:22px;background:#cce4f7;border:1px solid #8fc4ea;border-radius:2px"></div>
<svg class="abs" style="left:97px;top:6.500px" width="16" height="15" viewBox="0 0 16 15"><path d="M1.500 0v13.500h14" stroke="#111" stroke-width="1" fill="none" stroke-dasharray="1.500 1"/><path d="M2 9l2.500-4 2 2 3-5.500 2.500 1.500 2 3" stroke="#1818e8" stroke-width="1.500" fill="none"/><path d="M2 11.500l3-2 2.500 1 3-4 4-2" stroke="#e01010" stroke-width="1.500" fill="none"/></svg>
<svg class="abs" style="left:120px;top:6px" width="16" height="13" viewBox="0 0 16 13"><path d="M8 1h7.500l-2.500 3.500h-7.500zM4.500 4.500h8.500l-2.500 3.500h-8.500zM2.500 8h12l-2.500 4h-11.500zM10.500 8l-2.500 4" stroke="#111" stroke-width="1.200" fill="#fff" stroke-linejoin="miter"/></svg>
<div class="abs" style="left:139px;top:2px;width:23px;height:22px;background:#cce4f7;border:1px solid #8fc4ea;border-radius:2px"></div>
<svg class="abs" style="left:143px;top:6px" width="16" height="14" viewBox="0 0 16 14"><path d="M0 3h12" stroke="#f01010" stroke-width="1.300"/><path d="M0 5.500h12" stroke="#b0b0b0" stroke-width="1"/><path d="M0 7.500h12" stroke="#e8e010" stroke-width="1.300"/><path d="M0 9.500h12" stroke="#10c020" stroke-width="1.300"/><path d="M0 12h12" stroke="#1818f0" stroke-width="1.300"/><path d="M14.500 0v14M14.500 1.500l-3 2v7.500l3 2" stroke="#111" stroke-width="1.300" fill="none"/></svg>
</div></div>
<svg class="abs" style="left:0;top:75px" width="740" height="401" viewBox="396 449 740 401" font-family="Liberation Sans, sans-serif"><path d="M603.4,554.5 L757.0,470.5 L929.6,544.0" fill="none" stroke="#555" stroke-width=".8"/><path d="M603.4,758.0 L603.4,554.5 M929.6,744.6 L929.6,544.0 M757.0,673.0 L757.0,476.7" fill="none" stroke="#777" stroke-width=".8"/><path d="M603.4,758.0 L780.0,829.0 L929.6,744.6" fill="none" stroke="#888" stroke-width=".8"/><path d="M602.2,705.5 L757.0,623.9 L929.6,694.5 M601.0,653.0 L757.0,574.9 L929.6,644.3 M599.7,600.5 L757.0,525.8 L929.6,594.1 " fill="none" stroke="#666" stroke-width=".7" stroke-dasharray="3.500 3"/><path d="M603.4,758.0 L780.0,829.0 M609.7,754.5 L786.2,825.5 M611.3,753.6 L787.7,824.6 M612.9,752.7 L789.3,823.8 M614.5,751.9 L790.8,822.9 M616.1,751.0 L792.3,822.0 M617.7,750.1 L793.9,821.2 M619.2,749.2 L795.4,820.3 M620.8,748.4 L797.0,819.4 M622.4,747.5 L798.5,818.6 M626.4,745.3 L802.4,816.4 M630.3,743.1 L806.2,814.2 M634.3,740.9 L810.1,812.0 M638.2,738.7 L813.9,809.9 M642.2,736.5 L817.8,807.7 M646.2,734.3 L821.6,805.5 M650.1,732.1 L825.5,803.3 M654.1,730.0 L829.4,801.2 M658.0,727.8 L833.2,799.0 M662.0,725.6 L837.1,796.8 M665.9,723.4 L840.9,794.6 M669.9,721.2 L844.8,792.5 M673.9,719.0 L848.6,790.3 M677.8,716.8 L852.5,788.1 M681.8,714.6 L856.3,785.9 M685.7,712.4 L860.2,783.8 M689.7,710.2 L864.1,781.6 M693.7,708.1 L867.9,779.4 M697.6,705.9 L871.8,777.2 M701.6,703.7 L875.6,775.1 M705.5,701.5 L879.5,772.9 M709.5,699.3 L883.3,770.7 M713.5,697.1 L887.2,768.5 M717.4,694.9 L891.0,766.4 M721.4,692.7 L894.9,764.2 M725.3,690.5 L898.8,762.0 M729.3,688.3 L902.6,759.8 M733.2,686.1 L906.5,757.7 M741.2,681.8 L914.2,753.3 M749.1,677.4 L921.9,749.0 M757.0,673.0 L929.6,744.6 M603.4,758.0 L757.0,673.0 M603.8,758.2 L757.4,673.2 M605.6,758.9 L759.2,673.9 M606.5,759.2 L760.0,674.2 M607.3,759.6 L760.8,674.6 M608.1,759.9 L761.6,674.9 M608.9,760.2 L762.4,675.2 M609.7,760.5 L763.1,675.5 M612.4,761.6 L765.8,676.6 M615.1,762.7 L768.4,677.7 M617.8,763.8 L771.0,678.8 M620.5,764.9 L773.7,679.9 M623.1,765.9 L776.3,681.0 M628.5,768.1 L781.6,683.2 M633.9,770.3 L786.8,685.4 M644.7,774.6 L797.4,689.7 M655.5,778.9 L807.9,694.1 M666.3,783.3 L818.4,698.5 M687.8,791.9 L839.5,707.2 M709.4,800.6 L860.6,716.0 M730.9,809.3 L881.7,724.7 M752.5,817.9 L902.7,733.4 M780.0,829.0 L929.6,744.6 " fill="none" stroke="#b4b4b4" stroke-width=".7" stroke-dasharray="2 2"/><g stroke="#000" stroke-width=".85" stroke-linejoin="round"><polygon points="748.8,480.4 749.2,480.5 757.4,476.9 757.0,476.7" fill="#ff2100"/><polygon points="749.2,480.5 751.0,481.2 759.2,477.5 757.4,476.9" fill="#ff2100"/><polygon points="751.0,481.2 751.8,485.3 760.0,481.6 759.2,477.5" fill="#ff2b00"/><polygon points="751.8,485.3 752.7,493.0 760.8,489.3 760.0,481.6" fill="#ff4700"/><polygon points="752.7,493.0 753.4,498.9 761.6,495.2 760.8,489.3" fill="#ff6700"/><polygon points="753.4,498.9 754.3,506.7 762.4,502.9 761.6,495.2" fill="#ff8800"/><polygon points="754.3,506.7 755.0,514.4 763.1,510.6 762.4,502.9" fill="#ffad00"/><polygon points="755.0,514.4 757.7,528.5 765.8,524.6 763.1,510.6" fill="#ffe000"/><polygon points="757.7,528.5 760.3,538.8 768.4,534.9 765.8,524.6" fill="#e5ff00"/><polygon points="760.3,538.8 763.0,547.3 771.0,543.4 768.4,534.9" fill="#bbff00"/><polygon points="763.0,547.3 765.6,553.9 773.7,550.0 771.0,543.4" fill="#9bff00"/><polygon points="765.6,553.9 768.3,558.7 776.3,554.8 773.7,550.0" fill="#83ff00"/><polygon points="768.3,558.7 773.5,566.4 781.6,562.4 776.3,554.8" fill="#6cff00"/><polygon points="773.5,566.4 778.8,572.2 786.8,568.3 781.6,562.4" fill="#55ff00"/><polygon points="778.8,572.2 789.4,580.2 797.4,576.2 786.8,568.3" fill="#42ff00"/><polygon points="789.4,580.2 800.0,586.3 807.9,582.3 797.4,576.2" fill="#34ff00"/><polygon points="800.0,586.3 810.5,590.5 818.4,586.5 807.9,582.3" fill="#30ff00"/><polygon points="810.5,590.5 831.6,600.8 839.5,596.8 818.4,586.5" fill="#2bff00"/><polygon points="831.6,600.8 852.7,611.2 860.6,607.2 839.5,596.8" fill="#22ff00"/><polygon points="852.7,611.2 873.8,619.6 881.7,615.6 860.6,607.2" fill="#1dff00"/><polygon points="873.8,619.6 894.9,630.0 902.7,625.9 881.7,615.6" fill="#18ff00"/><polygon points="894.9,630.0 921.9,642.7 929.6,638.6 902.7,625.9" fill="#0fff00"/><polygon points="740.7,484.1 741.1,484.2 749.2,480.5 748.8,480.4" fill="#ff2100"/><polygon points="741.1,484.2 742.8,484.9 751.0,481.2 749.2,480.5" fill="#ff2100"/><polygon points="742.8,484.9 743.7,489.0 751.8,485.3 751.0,481.2" fill="#ff2b00"/><polygon points="743.7,489.0 744.5,496.7 752.7,493.0 751.8,485.3" fill="#ff4700"/><polygon points="744.5,496.7 745.3,502.6 753.4,498.9 752.7,493.0" fill="#ff6700"/><polygon points="745.3,502.6 746.1,510.4 754.3,506.7 753.4,498.9" fill="#ff8800"/><polygon points="746.1,510.4 746.9,518.2 755.0,514.4 754.3,506.7" fill="#ffad00"/><polygon points="746.9,518.2 749.6,532.3 757.7,528.5 755.0,514.4" fill="#ffe000"/><polygon points="749.6,532.3 752.2,542.7 760.3,538.8 757.7,528.5" fill="#e5ff00"/><polygon points="752.2,542.7 754.9,551.2 763.0,547.3 760.3,538.8" fill="#bbff00"/><polygon points="754.9,551.2 757.6,557.8 765.6,553.9 763.0,547.3" fill="#9bff00"/><polygon points="757.6,557.8 760.2,562.6 768.3,558.7 765.6,553.9" fill="#83ff00"/><polygon points="760.2,562.6 765.5,570.3 773.5,566.4 768.3,558.7" fill="#6cff00"/><polygon points="765.5,570.3 770.8,576.2 778.8,572.2 773.5,566.4" fill="#55ff00"/><polygon points="770.8,576.2 781.4,584.2 789.4,580.2 778.8,572.2" fill="#42ff00"/><polygon points="781.4,584.2 792.0,590.3 800.0,586.3 789.4,580.2" fill="#34ff00"/><polygon points="792.0,590.3 802.6,594.5 810.5,590.5 800.0,586.3" fill="#30ff00"/><polygon points="802.6,594.5 823.7,604.8 831.6,600.8 810.5,590.5" fill="#2bff00"/><polygon points="823.7,604.8 844.9,615.2 852.7,611.2 831.6,600.8" fill="#22ff00"/><polygon points="844.9,615.2 866.0,623.6 873.8,619.6 852.7,611.2" fill="#1dff00"/><polygon points="866.0,623.6 887.2,634.0 894.9,630.0 873.8,619.6" fill="#18ff00"/><polygon points="887.2,634.0 914.2,646.7 921.9,642.7 894.9,630.0" fill="#0fff00"/><polygon points="732.5,487.7 732.9,487.9 741.1,484.2 740.7,484.1" fill="#ff2100"/><polygon points="732.9,487.9 734.7,488.6 742.8,484.9 741.1,484.2" fill="#ff2100"/><polygon points="734.7,488.6 735.5,492.6 743.7,489.0 742.8,484.9" fill="#ff2b00"/><polygon points="735.5,492.6 736.4,500.5 744.5,496.7 743.7,489.0" fill="#ff4700"/><polygon points="736.4,500.5 737.2,506.4 745.3,502.6 744.5,496.7" fill="#ff6700"/><polygon points="737.2,506.4 738.0,514.2 746.1,510.4 745.3,502.6" fill="#ff8800"/><polygon points="738.0,514.2 738.8,522.0 746.9,518.2 746.1,510.4" fill="#ffad00"/><polygon points="738.8,522.0 741.5,536.1 749.6,532.3 746.9,518.2" fill="#ffe000"/><polygon points="741.5,536.1 744.2,546.5 752.2,542.7 749.6,532.3" fill="#e5ff00"/><polygon points="744.2,546.5 746.9,555.1 754.9,551.2 752.2,542.7" fill="#bbff00"/><polygon points="746.9,555.1 749.5,561.8 757.6,557.8 754.9,551.2" fill="#9bff00"/><polygon points="749.5,561.8 752.2,566.6 760.2,562.6 757.6,557.8" fill="#83ff00"/><polygon points="752.2,566.6 757.5,574.3 765.5,570.3 760.2,562.6" fill="#6cff00"/><polygon points="757.5,574.3 762.8,580.2 770.8,576.2 765.5,570.3" fill="#55ff00"/><polygon points="762.8,580.2 773.4,588.2 781.4,584.2 770.8,576.2" fill="#42ff00"/><polygon points="773.4,588.2 784.0,594.3 792.0,590.3 781.4,584.2" fill="#34ff00"/><polygon points="784.0,594.3 794.6,598.5 802.6,594.5 792.0,590.3" fill="#30ff00"/><polygon points="794.6,598.5 815.8,608.8 823.7,604.8 802.6,594.5" fill="#2bff00"/><polygon points="815.8,608.8 837.0,619.2 844.9,615.2 823.7,604.8" fill="#22ff00"/><polygon points="837.0,619.2 858.2,629.6 866.0,623.6 844.9,615.2" fill="#1bff00"/><polygon points="858.2,629.6 879.4,638.0 887.2,634.0 866.0,623.6" fill="#16ff00"/><polygon points="879.4,638.0 906.5,650.7 914.2,646.7 887.2,634.0" fill="#0fff00"/><polygon points="728.4,489.6 728.8,489.7 732.9,487.9 732.5,487.7" fill="#ff2100"/><polygon points="728.8,489.7 730.6,490.4 734.7,488.6 732.9,487.9" fill="#ff2100"/><polygon points="730.6,490.4 731.5,494.5 735.5,492.6 734.7,488.6" fill="#ff2b00"/><polygon points="731.5,494.5 732.3,502.3 736.4,500.5 735.5,492.6" fill="#ff4700"/><polygon points="732.3,502.3 733.1,508.2 737.2,506.4 736.4,500.5" fill="#ff6700"/><polygon points="733.1,508.2 733.9,516.1 738.0,514.2 737.2,506.4" fill="#ff8800"/><polygon points="733.9,516.1 734.7,523.9 738.8,522.0 738.0,514.2" fill="#ffad00"/><polygon points="734.7,523.9 737.5,539.9 741.5,536.1 738.8,522.0" fill="#ffe300"/><polygon points="737.5,539.9 740.1,550.4 744.2,546.5 741.5,536.1" fill="#e0ff00"/><polygon points="740.1,550.4 742.8,558.9 746.9,555.1 744.2,546.5" fill="#b6ff00"/><polygon points="742.8,558.9 745.5,565.6 749.5,561.8 746.9,555.1" fill="#96ff00"/><polygon points="745.5,565.6 748.2,570.4 752.2,566.6 749.5,561.8" fill="#7fff00"/><polygon points="748.2,570.4 753.5,578.2 757.5,574.3 752.2,566.6" fill="#67ff00"/><polygon points="753.5,578.2 758.8,584.0 762.8,580.2 757.5,574.3" fill="#50ff00"/><polygon points="758.8,584.0 769.4,592.0 773.4,588.2 762.8,580.2" fill="#3eff00"/><polygon points="769.4,592.0 780.1,598.2 784.0,594.3 773.4,588.2" fill="#30ff00"/><polygon points="780.1,598.2 790.7,602.4 794.6,598.5 784.0,594.3" fill="#2bff00"/><polygon points="790.7,602.4 811.9,612.7 815.8,608.8 794.6,598.5" fill="#26ff00"/><polygon points="811.9,612.7 833.1,623.1 837.0,619.2 815.8,608.8" fill="#1dff00"/><polygon points="833.1,623.1 854.3,633.5 858.2,629.6 837.0,619.2" fill="#14ff00"/><polygon points="854.3,633.5 875.5,643.9 879.4,638.0 858.2,629.6" fill="#0dff00"/><polygon points="875.5,643.9 902.6,656.6 906.5,650.7 879.4,638.0" fill="#06ff00"/><polygon points="724.3,491.4 724.7,491.6 728.8,489.7 728.4,489.6" fill="#ff2100"/><polygon points="724.7,491.6 726.5,492.3 730.6,490.4 728.8,489.7" fill="#ff2100"/><polygon points="726.5,492.3 727.4,496.3 731.5,494.5 730.6,490.4" fill="#ff2b00"/><polygon points="727.4,496.3 728.2,504.2 732.3,502.3 731.5,494.5" fill="#ff4700"/><polygon points="728.2,504.2 729.0,512.0 733.1,508.2 732.3,502.3" fill="#ff6a00"/><polygon points="729.0,512.0 729.9,519.8 733.9,516.1 733.1,508.2" fill="#ff8c00"/><polygon points="729.9,519.8 730.7,527.6 734.7,523.9 733.9,516.1" fill="#ffb200"/><polygon points="730.7,527.6 733.4,543.7 737.5,539.9 734.7,523.9" fill="#ffe900"/><polygon points="733.4,543.7 736.1,554.2 740.1,550.4 737.5,539.9" fill="#d7ff00"/><polygon points="736.1,554.2 738.8,562.8 742.8,558.9 740.1,550.4" fill="#adff00"/><polygon points="738.8,562.8 741.5,569.5 745.5,565.6 742.8,558.9" fill="#8dff00"/><polygon points="741.5,569.5 744.2,576.1 748.2,570.4 745.5,565.6" fill="#73ff00"/><polygon points="744.2,576.1 749.5,583.9 753.5,578.2 748.2,570.4" fill="#59ff00"/><polygon points="749.5,583.9 754.8,589.8 758.8,584.0 753.5,578.2" fill="#42ff00"/><polygon points="754.8,589.8 765.5,597.8 769.4,592.0 758.8,584.0" fill="#30ff00"/><polygon points="765.5,597.8 776.1,603.9 780.1,598.2 769.4,592.0" fill="#22ff00"/><polygon points="776.1,603.9 786.7,608.2 790.7,602.4 780.1,598.2" fill="#1dff00"/><polygon points="786.7,608.2 807.9,616.6 811.9,612.7 790.7,602.4" fill="#1bff00"/><polygon points="807.9,616.6 829.2,628.9 833.1,623.1 811.9,612.7" fill="#11ff00"/><polygon points="829.2,628.9 850.4,639.3 854.3,633.5 833.1,623.1" fill="#06ff00"/><polygon points="850.4,639.3 871.7,649.7 875.5,643.9 854.3,633.5" fill="#00ff03"/><polygon points="871.7,649.7 898.8,662.4 902.6,656.6 875.5,643.9" fill="#00ff0c"/><polygon points="720.2,493.2 720.7,493.4 724.7,491.6 724.3,491.4" fill="#ff2100"/><polygon points="720.7,493.4 722.4,494.1 726.5,492.3 724.7,491.6" fill="#ff2100"/><polygon points="722.4,494.1 723.3,498.2 727.4,496.3 726.5,492.3" fill="#ff2b00"/><polygon points="723.3,498.2 724.2,506.0 728.2,504.2 727.4,496.3" fill="#ff4700"/><polygon points="724.2,506.0 725.0,513.9 729.0,512.0 728.2,504.2" fill="#ff6c00"/><polygon points="725.0,513.9 725.8,521.7 729.9,519.8 729.0,512.0" fill="#ff9100"/><polygon points="725.8,521.7 726.6,529.5 730.7,527.6 729.9,519.8" fill="#ffb600"/><polygon points="726.6,529.5 729.4,545.7 733.4,543.7 730.7,527.6" fill="#ffee00"/><polygon points="729.4,545.7 732.1,558.0 736.1,554.2 733.4,543.7" fill="#d0ff00"/><polygon points="732.1,558.0 734.8,566.6 738.8,562.8 736.1,554.2" fill="#a4ff00"/><polygon points="734.8,566.6 737.5,573.3 741.5,569.5 738.8,562.8" fill="#83ff00"/><polygon points="737.5,573.3 740.2,580.0 744.2,576.1 741.5,569.5" fill="#67ff00"/><polygon points="740.2,580.0 745.5,585.9 749.5,583.9 744.2,576.1" fill="#4eff00"/><polygon points="745.5,585.9 750.8,591.8 754.8,589.8 749.5,583.9" fill="#39ff00"/><polygon points="750.8,591.8 761.5,599.8 765.5,597.8 754.8,589.8" fill="#26ff00"/><polygon points="761.5,599.8 772.1,607.8 776.1,603.9 765.5,597.8" fill="#16ff00"/><polygon points="772.1,607.8 782.7,612.1 786.7,608.2 776.1,603.9" fill="#0fff00"/><polygon points="782.7,612.1 804.0,620.5 807.9,616.6 786.7,608.2" fill="#0fff00"/><polygon points="804.0,620.5 825.3,632.8 829.2,628.9 807.9,616.6" fill="#06ff00"/><polygon points="825.3,632.8 846.5,643.2 850.4,639.3 829.2,628.9" fill="#00ff07"/><polygon points="846.5,643.2 867.8,651.7 871.7,649.7 850.4,639.3" fill="#00ff0e"/><polygon points="867.8,651.7 894.9,664.5 898.8,662.4 871.7,649.7" fill="#00ff15"/><polygon points="716.1,495.1 716.6,495.2 720.7,493.4 720.2,493.2" fill="#ff2100"/><polygon points="716.6,495.2 718.4,497.8 722.4,494.1 720.7,493.4" fill="#ff2400"/><polygon points="718.4,497.8 719.2,501.9 723.3,498.2 722.4,494.1" fill="#ff2f00"/><polygon points="719.2,501.9 720.1,507.9 724.2,506.0 723.3,498.2" fill="#ff4900"/><polygon points="720.1,507.9 720.9,517.6 725.0,513.9 724.2,506.0" fill="#ff6e00"/><polygon points="720.9,517.6 721.8,525.5 725.8,521.7 725.0,513.9" fill="#ff9600"/><polygon points="721.8,525.5 722.6,533.3 726.6,529.5 725.8,521.7" fill="#ffbb00"/><polygon points="722.6,533.3 725.4,551.4 729.4,545.7 726.6,529.5" fill="#fff500"/><polygon points="725.4,551.4 728.1,563.7 732.1,558.0 729.4,545.7" fill="#c4ff00"/><polygon points="728.1,563.7 730.8,572.3 734.8,566.6 732.1,558.0" fill="#96ff00"/><polygon points="730.8,572.3 733.5,579.1 737.5,573.3 734.8,566.6" fill="#75ff00"/><polygon points="733.5,579.1 736.2,585.8 740.2,580.0 737.5,573.3" fill="#59ff00"/><polygon points="736.2,585.8 741.5,593.6 745.5,585.9 740.2,580.0" fill="#40ff00"/><polygon points="741.5,593.6 746.9,599.5 750.8,591.8 745.5,585.9" fill="#2bff00"/><polygon points="746.9,599.5 757.5,607.5 761.5,599.8 750.8,591.8" fill="#18ff00"/><polygon points="757.5,607.5 768.2,613.6 772.1,607.8 761.5,599.8" fill="#08ff00"/><polygon points="768.2,613.6 778.8,619.8 782.7,612.1 772.1,607.8" fill="#00ff00"/><polygon points="778.8,619.8 800.1,628.3 804.0,620.5 782.7,612.1" fill="#00ff03"/><polygon points="800.1,628.3 821.4,638.7 825.3,632.8 804.0,620.5" fill="#00ff0a"/><polygon points="821.4,638.7 842.6,649.1 846.5,643.2 825.3,632.8" fill="#00ff15"/><polygon points="842.6,649.1 863.9,661.4 867.8,651.7 846.5,643.2" fill="#00ff1e"/><polygon points="863.9,661.4 891.0,672.3 894.9,664.5 867.8,651.7" fill="#00ff25"/><polygon points="712.1,496.9 712.5,497.1 716.6,495.2 716.1,495.1" fill="#ff2100"/><polygon points="712.5,497.1 714.3,499.7 718.4,497.8 716.6,495.2" fill="#ff2600"/><polygon points="714.3,499.7 715.2,503.8 719.2,501.9 718.4,497.8" fill="#ff3400"/><polygon points="715.2,503.8 716.0,509.8 720.1,507.9 719.2,501.9" fill="#ff4b00"/><polygon points="716.0,509.8 716.8,519.5 720.9,517.6 720.1,507.9" fill="#ff7100"/><polygon points="716.8,519.5 717.7,527.4 721.8,525.5 720.9,517.6" fill="#ff9a00"/><polygon points="717.7,527.4 718.5,535.2 722.6,533.3 721.8,525.5" fill="#ffc000"/><polygon points="718.5,535.2 721.3,553.3 725.4,551.4 722.6,533.3" fill="#fffc00"/><polygon points="721.3,553.3 724.0,565.7 728.1,563.7 725.4,551.4" fill="#bbff00"/><polygon points="724.0,565.7 726.8,574.3 730.8,572.3 728.1,563.7" fill="#8dff00"/><polygon points="726.8,574.3 729.5,581.0 733.5,579.1 730.8,572.3" fill="#6cff00"/><polygon points="729.5,581.0 732.2,587.8 736.2,585.8 733.5,579.1" fill="#50ff00"/><polygon points="732.2,587.8 737.5,595.6 741.5,593.6 736.2,585.8" fill="#34ff00"/><polygon points="737.5,595.6 742.9,601.5 746.9,599.5 741.5,593.6" fill="#1dff00"/><polygon points="742.9,601.5 753.5,609.5 757.5,607.5 746.9,599.5" fill="#0aff00"/><polygon points="753.5,609.5 764.2,615.6 768.2,613.6 757.5,607.5" fill="#00ff03"/><polygon points="764.2,615.6 774.8,621.8 778.8,619.8 768.2,613.6" fill="#00ff0c"/><polygon points="774.8,621.8 796.1,632.2 800.1,628.3 778.8,619.8" fill="#00ff13"/><polygon points="796.1,632.2 817.5,642.6 821.4,638.7 800.1,628.3" fill="#00ff1a"/><polygon points="817.5,642.6 838.7,653.0 842.6,649.1 821.4,638.7" fill="#00ff23"/><polygon points="838.7,653.0 860.0,663.4 863.9,661.4 842.6,649.1" fill="#00ff2f"/><polygon points="860.0,663.4 887.2,676.2 891.0,672.3 863.9,661.4" fill="#00ff38"/><polygon points="708.0,498.8 708.4,498.9 712.5,497.1 712.1,496.9" fill="#ff2100"/><polygon points="708.4,498.9 710.2,501.5 714.3,499.7 712.5,497.1" fill="#ff2600"/><polygon points="710.2,501.5 711.1,505.6 715.2,503.8 714.3,499.7" fill="#ff3400"/><polygon points="711.1,505.6 712.0,511.6 716.0,509.8 715.2,503.8" fill="#ff4b00"/><polygon points="712.0,511.6 712.8,521.4 716.8,519.5 716.0,509.8" fill="#ff7100"/><polygon points="712.8,521.4 713.7,529.3 717.7,527.4 716.8,519.5" fill="#ff9a00"/><polygon points="713.7,529.3 714.5,537.1 718.5,535.2 717.7,527.4" fill="#ffc000"/><polygon points="714.5,537.1 717.3,555.2 721.3,553.3 718.5,535.2" fill="#fffc00"/><polygon points="717.3,555.2 720.0,567.6 724.0,565.7 721.3,553.3" fill="#bbff00"/><polygon points="720.0,567.6 722.7,576.3 726.8,574.3 724.0,565.7" fill="#8dff00"/><polygon points="722.7,576.3 725.4,583.0 729.5,581.0 726.8,574.3" fill="#6cff00"/><polygon points="725.4,583.0 728.1,589.7 732.2,587.8 729.5,581.0" fill="#50ff00"/><polygon points="728.1,589.7 733.5,597.5 737.5,595.6 732.2,587.8" fill="#34ff00"/><polygon points="733.5,597.5 738.9,603.5 742.9,601.5 737.5,595.6" fill="#1dff00"/><polygon points="738.9,603.5 749.6,611.5 753.5,609.5 742.9,601.5" fill="#0aff00"/><polygon points="749.6,611.5 760.2,617.7 764.2,615.6 753.5,609.5" fill="#00ff03"/><polygon points="760.2,617.7 770.9,623.8 774.8,621.8 764.2,615.6" fill="#00ff0c"/><polygon points="770.9,623.8 792.2,634.2 796.1,632.2 774.8,621.8" fill="#00ff15"/><polygon points="792.2,634.2 813.5,644.6 817.5,642.6 796.1,632.2" fill="#00ff1e"/><polygon points="813.5,644.6 834.8,653.1 838.7,653.0 817.5,642.6" fill="#00ff25"/><polygon points="834.8,653.1 856.1,663.6 860.0,663.4 838.7,653.0" fill="#00ff2c"/><polygon points="856.1,663.6 883.3,674.4 887.2,676.2 860.0,663.4" fill="#00ff33"/><polygon points="703.9,500.6 704.3,500.8 708.4,498.9 708.0,498.8" fill="#ff2100"/><polygon points="704.3,500.8 706.1,503.3 710.2,501.5 708.4,498.9" fill="#ff2600"/><polygon points="706.1,503.3 707.0,507.5 711.1,505.6 710.2,501.5" fill="#ff3400"/><polygon points="707.0,507.5 707.9,513.5 712.0,511.6 711.1,505.6" fill="#ff4b00"/><polygon points="707.9,513.5 708.7,523.2 712.8,521.4 712.0,511.6" fill="#ff7100"/><polygon points="708.7,523.2 709.6,531.2 713.7,529.3 712.8,521.4" fill="#ff9a00"/><polygon points="709.6,531.2 710.4,539.0 714.5,537.1 713.7,529.3" fill="#ffc000"/><polygon points="710.4,539.0 713.2,559.0 717.3,555.2 714.5,537.1" fill="#fffe00"/><polygon points="713.2,559.0 716.0,571.5 720.0,567.6 717.3,555.2" fill="#b6ff00"/><polygon points="716.0,571.5 718.7,580.1 722.7,576.3 720.0,567.6" fill="#88ff00"/><polygon points="718.7,580.1 721.4,586.9 725.4,583.0 722.7,576.3" fill="#67ff00"/><polygon points="721.4,586.9 724.1,593.6 728.1,589.7 725.4,583.0" fill="#4cff00"/><polygon points="724.1,593.6 729.5,601.4 733.5,597.5 728.1,589.7" fill="#30ff00"/><polygon points="729.5,601.4 734.9,607.4 738.9,603.5 733.5,597.5" fill="#18ff00"/><polygon points="734.9,607.4 745.6,615.4 749.6,611.5 738.9,603.5" fill="#06ff00"/><polygon points="745.6,615.4 756.3,621.6 760.2,617.7 749.6,611.5" fill="#00ff07"/><polygon points="756.3,621.6 766.9,627.7 770.9,623.8 760.2,617.7" fill="#00ff10"/><polygon points="766.9,627.7 788.3,636.2 792.2,634.2 770.9,623.8" fill="#00ff17"/><polygon points="788.3,636.2 809.6,646.7 813.5,644.6 792.2,634.2" fill="#00ff1e"/><polygon points="809.6,646.7 830.9,655.2 834.8,653.1 813.5,644.6" fill="#00ff23"/><polygon points="830.9,655.2 852.3,665.6 856.1,663.6 834.8,653.1" fill="#00ff28"/><polygon points="852.3,665.6 879.5,676.5 883.3,674.4 856.1,663.6" fill="#00ff2c"/><polygon points="699.8,502.4 700.2,502.6 704.3,500.8 703.9,500.6" fill="#ff2100"/><polygon points="700.2,502.6 702.0,505.2 706.1,503.3 704.3,500.8" fill="#ff2600"/><polygon points="702.0,505.2 702.9,509.3 707.0,507.5 706.1,503.3" fill="#ff3400"/><polygon points="702.9,509.3 703.8,517.2 707.9,513.5 707.0,507.5" fill="#ff4e00"/><polygon points="703.8,517.2 704.6,525.1 708.7,523.2 707.9,513.5" fill="#ff7300"/><polygon points="704.6,525.1 705.5,533.0 709.6,531.2 708.7,523.2" fill="#ff9a00"/><polygon points="705.5,533.0 706.4,542.8 710.4,539.0 709.6,531.2" fill="#ffc200"/><polygon points="706.4,542.8 709.2,561.0 713.2,559.0 710.4,539.0" fill="#faff00"/><polygon points="709.2,561.0 712.0,573.4 716.0,571.5 713.2,559.0" fill="#b2ff00"/><polygon points="712.0,573.4 714.7,584.0 718.7,580.1 716.0,571.5" fill="#81ff00"/><polygon points="714.7,584.0 717.4,590.8 721.4,586.9 718.7,580.1" fill="#5eff00"/><polygon points="717.4,590.8 720.1,597.5 724.1,593.6 721.4,586.9" fill="#42ff00"/><polygon points="720.1,597.5 725.5,605.3 729.5,601.4 724.1,593.6" fill="#26ff00"/><polygon points="725.5,605.3 730.9,611.3 734.9,607.4 729.5,601.4" fill="#0fff00"/><polygon points="730.9,611.3 741.6,619.3 745.6,615.4 734.9,607.4" fill="#00ff03"/><polygon points="741.6,619.3 752.3,625.5 756.3,621.6 745.6,615.4" fill="#00ff10"/><polygon points="752.3,625.5 763.0,631.7 766.9,627.7 756.3,621.6" fill="#00ff1a"/><polygon points="763.0,631.7 784.3,640.2 788.3,636.2 766.9,627.7" fill="#00ff1e"/><polygon points="784.3,640.2 805.7,648.7 809.6,646.7 788.3,636.2" fill="#00ff21"/><polygon points="805.7,648.7 827.0,659.1 830.9,655.2 809.6,646.7" fill="#00ff25"/><polygon points="827.0,659.1 848.4,671.5 852.3,665.6 830.9,655.2" fill="#00ff2f"/><polygon points="848.4,671.5 875.6,684.3 879.5,676.5 852.3,665.6" fill="#00ff38"/><polygon points="695.7,504.3 696.1,504.4 700.2,502.6 699.8,502.4" fill="#ff2100"/><polygon points="696.1,504.4 698.0,507.0 702.0,505.2 700.2,502.6" fill="#ff2600"/><polygon points="698.0,507.0 698.8,511.2 702.9,509.3 702.0,505.2" fill="#ff3400"/><polygon points="698.8,511.2 699.8,519.1 703.8,517.2 702.9,509.3" fill="#ff5000"/><polygon points="699.8,519.1 700.6,527.0 704.6,525.1 703.8,517.2" fill="#ff7500"/><polygon points="700.6,527.0 701.5,536.8 705.5,533.0 704.6,525.1" fill="#ff9d00"/><polygon points="701.5,536.8 702.3,546.6 706.4,542.8 705.5,533.0" fill="#ffc900"/><polygon points="702.3,546.6 705.2,564.8 709.2,561.0 706.4,542.8" fill="#f3ff00"/><polygon points="705.2,564.8 707.9,577.3 712.0,573.4 709.2,561.0" fill="#adff00"/><polygon points="707.9,577.3 710.7,587.9 714.7,584.0 712.0,573.4" fill="#7aff00"/><polygon points="710.7,587.9 713.4,594.6 717.4,590.8 714.7,584.0" fill="#55ff00"/><polygon points="713.4,594.6 716.2,601.4 720.1,597.5 717.4,590.8" fill="#39ff00"/><polygon points="716.2,601.4 721.6,611.2 725.5,605.3 720.1,597.5" fill="#1bff00"/><polygon points="721.6,611.2 726.9,617.1 730.9,611.3 725.5,605.3" fill="#01ff00"/><polygon points="726.9,617.1 737.7,625.2 741.6,619.3 730.9,611.3" fill="#00ff10"/><polygon points="737.7,625.2 748.4,631.3 752.3,625.5 741.6,619.3" fill="#00ff1e"/><polygon points="748.4,631.3 759.0,637.5 763.0,631.7 752.3,625.5" fill="#00ff28"/><polygon points="759.0,637.5 780.4,646.0 784.3,640.2 763.0,631.7" fill="#00ff2c"/><polygon points="780.4,646.0 801.8,654.6 805.7,648.7 784.3,640.2" fill="#00ff2c"/><polygon points="801.8,654.6 823.1,665.0 827.0,659.1 805.7,648.7" fill="#00ff31"/><polygon points="823.1,665.0 844.5,675.4 848.4,671.5 827.0,659.1" fill="#00ff3d"/><polygon points="844.5,675.4 871.8,688.3 875.6,684.3 848.4,671.5" fill="#00ff48"/><polygon points="691.6,506.1 692.1,506.3 696.1,504.4 695.7,504.3" fill="#ff2100"/><polygon points="692.1,506.3 693.9,508.9 698.0,507.0 696.1,504.4" fill="#ff2600"/><polygon points="693.9,508.9 694.8,513.0 698.8,511.2 698.0,507.0" fill="#ff3400"/><polygon points="694.8,513.0 695.7,521.0 699.8,519.1 698.8,511.2" fill="#ff5000"/><polygon points="695.7,521.0 696.5,530.8 700.6,527.0 699.8,519.1" fill="#ff7800"/><polygon points="696.5,530.8 697.4,538.7 701.5,536.8 700.6,527.0" fill="#ffa100"/><polygon points="697.4,538.7 698.3,548.5 702.3,546.6 701.5,536.8" fill="#ffce00"/><polygon points="698.3,548.5 701.2,568.7 705.2,564.8 702.3,546.6" fill="#ecff00"/><polygon points="701.2,568.7 703.9,581.2 707.9,577.3 705.2,564.8" fill="#a4ff00"/><polygon points="703.9,581.2 706.7,591.8 710.7,587.9 707.9,577.3" fill="#71ff00"/><polygon points="706.7,591.8 709.4,598.5 713.4,594.6 710.7,587.9" fill="#4cff00"/><polygon points="709.4,598.5 712.2,605.3 716.2,601.4 713.4,594.6" fill="#30ff00"/><polygon points="712.2,605.3 717.6,615.1 721.6,611.2 716.2,601.4" fill="#0fff00"/><polygon points="717.6,615.1 723.0,621.0 726.9,617.1 721.6,611.2" fill="#00ff0c"/><polygon points="723.0,621.0 733.7,629.1 737.7,625.2 726.9,617.1" fill="#00ff1e"/><polygon points="733.7,629.1 744.4,635.3 748.4,631.3 737.7,625.2" fill="#00ff2c"/><polygon points="744.4,635.3 755.1,641.5 759.0,637.5 748.4,631.3" fill="#00ff36"/><polygon points="755.1,641.5 776.5,650.0 780.4,646.0 759.0,637.5" fill="#00ff3a"/><polygon points="776.5,650.0 797.9,660.4 801.8,654.6 780.4,646.0" fill="#00ff3d"/><polygon points="797.9,660.4 819.3,669.0 823.1,665.0 801.8,654.6" fill="#00ff41"/><polygon points="819.3,669.0 840.6,677.5 844.5,675.4 823.1,665.0" fill="#00ff46"/><polygon points="840.6,677.5 867.9,692.2 871.8,688.3 844.5,675.4" fill="#00ff4f"/><polygon points="687.6,515.6 688.1,515.7 692.1,506.3 691.6,506.1" fill="#ff3400"/><polygon points="688.1,515.7 689.9,518.3 693.9,508.9 692.1,506.3" fill="#ff3900"/><polygon points="689.9,518.3 690.8,522.5 694.8,513.0 693.9,508.9" fill="#ff4700"/><polygon points="690.8,522.5 691.7,528.5 695.7,521.0 694.8,513.0" fill="#ff6000"/><polygon points="691.7,528.5 692.5,538.4 696.5,530.8 695.7,521.0" fill="#ff8800"/><polygon points="692.5,538.4 693.4,546.3 697.4,538.7 696.5,530.8" fill="#ffb200"/><polygon points="693.4,546.3 694.3,554.3 698.3,548.5 697.4,538.7" fill="#ffd900"/><polygon points="694.3,554.3 697.2,574.4 701.2,568.7 698.3,548.5" fill="#e0ff00"/><polygon points="697.2,574.4 699.9,586.9 703.9,581.2 701.2,568.7" fill="#96ff00"/><polygon points="699.9,586.9 702.7,595.6 706.7,591.8 703.9,581.2" fill="#65ff00"/><polygon points="702.7,595.6 705.4,602.4 709.4,598.5 706.7,591.8" fill="#42ff00"/><polygon points="705.4,602.4 708.2,609.2 712.2,605.3 709.4,598.5" fill="#26ff00"/><polygon points="708.2,609.2 713.6,617.1 717.6,615.1 712.2,605.3" fill="#08ff00"/><polygon points="713.6,617.1 719.0,623.0 723.0,621.0 717.6,615.1" fill="#00ff10"/><polygon points="719.0,623.0 729.7,631.1 733.7,629.1 723.0,621.0" fill="#00ff23"/><polygon points="729.7,631.1 740.4,637.3 744.4,635.3 733.7,629.1" fill="#00ff31"/><polygon points="740.4,637.3 751.1,643.5 755.1,641.5 744.4,635.3" fill="#00ff3a"/><polygon points="751.1,643.5 772.5,653.9 776.5,650.0 755.1,641.5" fill="#00ff41"/><polygon points="772.5,653.9 794.0,662.5 797.9,660.4 776.5,650.0" fill="#00ff46"/><polygon points="794.0,662.5 815.4,672.9 819.3,669.0 797.9,660.4" fill="#00ff4b"/><polygon points="815.4,672.9 836.7,679.5 840.6,677.5 819.3,669.0" fill="#00ff4b"/><polygon points="836.7,679.5 864.1,694.3 867.9,692.2 840.6,677.5" fill="#00ff52"/><polygon points="683.6,521.2 684.0,521.4 688.1,515.7 687.6,515.6" fill="#ff5000"/><polygon points="684.0,521.4 685.8,524.0 689.9,518.3 688.1,515.7" fill="#ff5500"/><polygon points="685.8,524.0 686.7,528.2 690.8,522.5 689.9,518.3" fill="#ff6300"/><polygon points="686.7,528.2 687.6,534.2 691.7,528.5 690.8,522.5" fill="#ff7a00"/><polygon points="687.6,534.2 688.5,542.2 692.5,538.4 691.7,528.5" fill="#ff9d00"/><polygon points="688.5,542.2 689.4,552.1 693.4,546.3 692.5,538.4" fill="#ffc700"/><polygon points="689.4,552.1 690.3,560.0 694.3,554.3 693.4,546.3" fill="#ffee00"/><polygon points="690.3,560.0 693.1,578.3 697.2,574.4 694.3,554.3" fill="#d0ff00"/><polygon points="693.1,578.3 695.9,588.9 699.9,586.9 697.2,574.4" fill="#8aff00"/><polygon points="695.9,588.9 698.7,597.6 702.7,595.6 699.9,586.9" fill="#5eff00"/><polygon points="698.7,597.6 701.5,606.3 705.4,602.4 702.7,595.6" fill="#3bff00"/><polygon points="701.5,606.3 704.2,611.2 708.2,609.2 705.4,602.4" fill="#1fff00"/><polygon points="704.2,611.2 709.6,619.1 713.6,617.1 708.2,609.2" fill="#06ff00"/><polygon points="709.6,619.1 715.0,625.1 719.0,623.0 713.6,617.1" fill="#00ff10"/><polygon points="715.0,625.1 725.7,633.2 729.7,631.1 719.0,623.0" fill="#00ff23"/><polygon points="725.7,633.2 736.5,639.4 740.4,637.3 729.7,631.1" fill="#00ff31"/><polygon points="736.5,639.4 747.2,645.5 751.1,643.5 740.4,637.3" fill="#00ff3a"/><polygon points="747.2,645.5 768.6,656.0 772.5,653.9 751.1,643.5" fill="#00ff44"/><polygon points="768.6,656.0 790.0,664.5 794.0,662.5 772.5,653.9" fill="#00ff48"/><polygon points="790.0,664.5 811.5,675.0 815.4,672.9 794.0,662.5" fill="#00ff4d"/><polygon points="811.5,675.0 832.9,681.6 836.7,679.5 815.4,672.9" fill="#00ff4d"/><polygon points="832.9,681.6 860.2,696.3 864.1,694.3 836.7,679.5" fill="#00ff52"/><polygon points="679.6,526.9 680.0,527.1 684.0,521.4 683.6,521.2" fill="#ff6300"/><polygon points="680.0,527.1 681.8,529.7 685.8,524.0 684.0,521.4" fill="#ff6700"/><polygon points="681.8,529.7 682.7,533.9 686.7,528.2 685.8,524.0" fill="#ff7500"/><polygon points="682.7,533.9 683.6,539.9 687.6,534.2 686.7,528.2" fill="#ff8c00"/><polygon points="683.6,539.9 684.5,547.9 688.5,542.2 687.6,534.2" fill="#ffad00"/><polygon points="684.5,547.9 685.4,555.9 689.4,552.1 688.5,542.2" fill="#ffd500"/><polygon points="685.4,555.9 686.2,563.9 690.3,560.0 689.4,552.1" fill="#fffc00"/><polygon points="686.2,563.9 689.1,582.2 693.1,578.3 690.3,560.0" fill="#c4ff00"/><polygon points="689.1,582.2 691.9,594.7 695.9,588.9 693.1,578.3" fill="#81ff00"/><polygon points="691.9,594.7 694.7,603.4 698.7,597.6 695.9,588.9" fill="#55ff00"/><polygon points="694.7,603.4 697.5,610.3 701.5,606.3 698.7,597.6" fill="#32ff00"/><polygon points="697.5,610.3 700.2,615.2 704.2,611.2 701.5,606.3" fill="#18ff00"/><polygon points="700.2,615.2 705.6,623.0 709.6,619.1 704.2,611.2" fill="#01ff00"/><polygon points="705.6,623.0 711.0,629.0 715.0,625.1 709.6,619.1" fill="#00ff15"/><polygon points="711.0,629.0 721.8,637.1 725.7,633.2 715.0,625.1" fill="#00ff28"/><polygon points="721.8,637.1 732.5,643.3 736.5,639.4 725.7,633.2" fill="#00ff36"/><polygon points="732.5,643.3 743.2,649.5 747.2,645.5 736.5,639.4" fill="#00ff3f"/><polygon points="743.2,649.5 764.7,658.0 768.6,656.0 747.2,645.5" fill="#00ff46"/><polygon points="764.7,658.0 786.1,666.6 790.0,664.5 768.6,656.0" fill="#00ff48"/><polygon points="786.1,666.6 807.6,677.0 811.5,675.0 790.0,664.5" fill="#00ff4d"/><polygon points="807.6,677.0 829.0,683.6 832.9,681.6 811.5,675.0" fill="#00ff4d"/><polygon points="829.0,683.6 856.3,698.4 860.2,696.3 832.9,681.6" fill="#00ff52"/><polygon points="675.6,534.6 676.0,534.7 680.0,527.1 679.6,526.9" fill="#ff7a00"/><polygon points="676.0,534.7 677.8,537.3 681.8,529.7 680.0,527.1" fill="#ff7f00"/><polygon points="677.8,537.3 678.7,541.5 682.7,533.9 681.8,529.7" fill="#ff8c00"/><polygon points="678.7,541.5 679.6,547.6 683.6,539.9 682.7,533.9" fill="#ffa400"/><polygon points="679.6,547.6 680.5,555.6 684.5,547.9 683.6,539.9" fill="#ffc400"/><polygon points="680.5,555.6 681.4,563.6 685.4,555.9 684.5,547.9" fill="#ffe900"/><polygon points="681.4,563.6 682.3,571.5 686.2,563.9 685.4,555.9" fill="#eeff00"/><polygon points="682.3,571.5 685.2,589.9 689.1,582.2 686.2,563.9" fill="#b2ff00"/><polygon points="685.2,589.9 688.0,600.5 691.9,594.7 689.1,582.2" fill="#6eff00"/><polygon points="688.0,600.5 690.7,609.3 694.7,603.4 691.9,594.7" fill="#42ff00"/><polygon points="690.7,609.3 693.5,616.1 697.5,610.3 694.7,603.4" fill="#22ff00"/><polygon points="693.5,616.1 696.2,621.0 700.2,615.2 697.5,610.3" fill="#0aff00"/><polygon points="696.2,621.0 701.7,630.8 705.6,623.0 700.2,615.2" fill="#00ff0e"/><polygon points="701.7,630.8 707.1,636.8 711.0,629.0 705.6,623.0" fill="#00ff28"/><polygon points="707.1,636.8 717.8,644.9 721.8,637.1 711.0,629.0" fill="#00ff3a"/><polygon points="717.8,644.9 728.6,649.2 732.5,643.3 721.8,637.1" fill="#00ff46"/><polygon points="728.6,649.2 739.3,655.4 743.2,649.5 732.5,643.3" fill="#00ff4d"/><polygon points="739.3,655.4 760.7,662.0 764.7,658.0 743.2,649.5" fill="#00ff4f"/><polygon points="760.7,662.0 782.2,670.5 786.1,666.6 764.7,658.0" fill="#00ff4d"/><polygon points="782.2,670.5 803.7,679.1 807.6,677.0 786.1,666.6" fill="#00ff4f"/><polygon points="803.7,679.1 825.1,685.7 829.0,683.6 807.6,677.0" fill="#00ff4d"/><polygon points="825.1,685.7 852.5,700.5 856.3,698.4 829.0,683.6" fill="#00ff52"/><polygon points="671.5,540.3 672.0,540.4 676.0,534.7 675.6,534.6" fill="#ff9100"/><polygon points="672.0,540.4 673.8,541.1 677.8,537.3 676.0,534.7" fill="#ff9300"/><polygon points="673.8,541.1 674.7,545.3 678.7,541.5 677.8,537.3" fill="#ff9f00"/><polygon points="674.7,545.3 675.6,553.3 679.6,547.6 678.7,541.5" fill="#ffb900"/><polygon points="675.6,553.3 676.5,561.3 680.5,555.6 679.6,547.6" fill="#ffdc00"/><polygon points="676.5,561.3 677.4,567.4 681.4,563.6 680.5,555.6" fill="#fffe00"/><polygon points="677.4,567.4 678.2,575.4 682.3,571.5 681.4,563.6" fill="#dcff00"/><polygon points="678.2,575.4 681.1,591.8 685.2,589.9 682.3,571.5" fill="#a2ff00"/><polygon points="681.1,591.8 684.0,604.4 688.0,600.5 685.2,589.9" fill="#60ff00"/><polygon points="684.0,604.4 686.7,613.2 690.7,609.3 688.0,600.5" fill="#34ff00"/><polygon points="686.7,613.2 689.5,618.1 693.5,616.1 690.7,609.3" fill="#16ff00"/><polygon points="689.5,618.1 692.2,624.9 696.2,621.0 693.5,616.1" fill="#00ff00"/><polygon points="692.2,624.9 697.7,632.9 701.7,630.8 696.2,621.0" fill="#00ff1c"/><polygon points="697.7,632.9 703.1,638.8 707.1,636.8 701.7,630.8" fill="#00ff36"/><polygon points="703.1,638.8 713.9,647.0 717.8,644.9 707.1,636.8" fill="#00ff48"/><polygon points="713.9,647.0 724.6,653.2 728.6,649.2 717.8,644.9" fill="#00ff54"/><polygon points="724.6,653.2 735.3,657.4 739.3,655.4 728.6,649.2" fill="#00ff59"/><polygon points="735.3,657.4 756.8,666.0 760.7,662.0 739.3,655.4" fill="#00ff59"/><polygon points="756.8,666.0 778.3,674.5 782.2,670.5 760.7,662.0" fill="#00ff56"/><polygon points="778.3,674.5 799.8,681.1 803.7,679.1 782.2,670.5" fill="#00ff54"/><polygon points="799.8,681.1 821.2,687.7 825.1,685.7 803.7,679.1" fill="#00ff4d"/><polygon points="821.2,687.7 848.6,700.5 852.5,700.5 825.1,685.7" fill="#00ff4f"/><polygon points="667.6,549.9 668.0,550.0 672.0,540.4 671.5,540.3" fill="#ffad00"/><polygon points="668.0,550.0 669.8,548.8 673.8,541.1 672.0,540.4" fill="#ffab00"/><polygon points="669.8,548.8 670.6,547.2 674.7,545.3 673.8,541.1" fill="#ffab00"/><polygon points="670.6,547.2 671.5,553.3 675.6,553.3 674.7,545.3" fill="#ffbd00"/><polygon points="671.5,553.3 672.4,561.3 676.5,561.3 675.6,553.3" fill="#ffe000"/><polygon points="672.4,561.3 673.4,571.3 677.4,567.4 676.5,561.3" fill="#f8ff00"/><polygon points="673.4,571.3 674.2,581.2 678.2,575.4 677.4,567.4" fill="#d0ff00"/><polygon points="674.2,581.2 677.1,597.7 681.1,591.8 678.2,575.4" fill="#96ff00"/><polygon points="677.1,597.7 680.0,610.3 684.0,604.4 681.1,591.8" fill="#55ff00"/><polygon points="680.0,610.3 682.8,617.1 686.7,613.2 684.0,604.4" fill="#29ff00"/><polygon points="682.8,617.1 685.5,622.0 689.5,618.1 686.7,613.2" fill="#0fff00"/><polygon points="685.5,622.0 688.2,627.0 692.2,624.9 689.5,618.1" fill="#00ff05"/><polygon points="688.2,627.0 693.7,634.9 697.7,632.9 692.2,624.9" fill="#00ff1e"/><polygon points="693.7,634.9 699.1,640.9 703.1,638.8 697.7,632.9" fill="#00ff36"/><polygon points="699.1,640.9 709.9,649.0 713.9,647.0 703.1,638.8" fill="#00ff48"/><polygon points="709.9,649.0 720.7,655.2 724.6,653.2 713.9,647.0" fill="#00ff56"/><polygon points="720.7,655.2 731.4,659.5 735.3,657.4 724.6,653.2" fill="#00ff5b"/><polygon points="731.4,659.5 752.9,668.0 756.8,666.0 735.3,657.4" fill="#00ff5b"/><polygon points="752.9,668.0 774.4,676.6 778.3,674.5 756.8,666.0" fill="#00ff5b"/><polygon points="774.4,676.6 795.9,683.2 799.8,681.1 778.3,674.5" fill="#00ff56"/><polygon points="795.9,683.2 817.3,691.7 821.2,687.7 799.8,681.1" fill="#00ff4f"/><polygon points="817.3,691.7 844.8,702.6 848.6,700.5 821.2,687.7" fill="#00ff4f"/><polygon points="663.7,563.3 664.1,563.5 668.0,550.0 667.6,549.9" fill="#ffdc00"/><polygon points="664.1,563.5 665.8,558.4 669.8,548.8 668.0,550.0" fill="#ffd200"/><polygon points="665.8,558.4 666.6,551.0 670.6,547.2 669.8,548.8" fill="#ffbd00"/><polygon points="666.6,551.0 667.5,555.2 671.5,553.3 670.6,547.2" fill="#ffbd00"/><polygon points="667.5,555.2 668.3,563.2 672.4,561.3 671.5,553.3" fill="#ffdc00"/><polygon points="668.3,563.2 669.4,577.0 673.4,571.3 672.4,561.3" fill="#f3ff00"/><polygon points="669.4,577.0 670.3,588.9 674.2,581.2 673.4,571.3" fill="#bdff00"/><polygon points="670.3,588.9 673.2,605.4 677.1,597.7 674.2,581.2" fill="#7fff00"/><polygon points="673.2,605.4 676.0,618.1 680.0,610.3 677.1,597.7" fill="#3eff00"/><polygon points="676.0,618.1 678.8,623.0 682.8,617.1 680.0,610.3" fill="#16ff00"/><polygon points="678.8,623.0 681.5,626.0 685.5,622.0 682.8,617.1" fill="#03ff00"/><polygon points="681.5,626.0 684.2,629.0 688.2,627.0 685.5,622.0" fill="#00ff0a"/><polygon points="684.2,629.0 689.7,636.9 693.7,634.9 688.2,627.0" fill="#00ff1e"/><polygon points="689.7,636.9 695.1,642.9 699.1,640.9 693.7,634.9" fill="#00ff36"/><polygon points="695.1,642.9 705.9,651.0 709.9,649.0 699.1,640.9" fill="#00ff48"/><polygon points="705.9,651.0 716.7,657.3 720.7,655.2 709.9,649.0" fill="#00ff56"/><polygon points="716.7,657.3 727.4,661.5 731.4,659.5 720.7,655.2" fill="#00ff5b"/><polygon points="727.4,661.5 748.9,670.1 752.9,668.0 731.4,659.5" fill="#00ff5b"/><polygon points="748.9,670.1 770.5,678.6 774.4,676.6 752.9,668.0" fill="#00ff5b"/><polygon points="770.5,678.6 792.0,685.2 795.9,683.2 774.4,676.6" fill="#00ff56"/><polygon points="792.0,685.2 813.5,693.7 817.3,691.7 795.9,683.2" fill="#00ff52"/><polygon points="813.5,693.7 840.9,704.6 844.8,702.6 817.3,691.7" fill="#00ff52"/><polygon points="659.9,582.6 660.3,582.8 664.1,563.5 663.7,563.3" fill="#dcff00"/><polygon points="660.3,582.8 662.0,575.8 665.8,558.4 664.1,563.5" fill="#ecff00"/><polygon points="662.0,575.8 662.7,564.5 666.6,551.0 665.8,558.4" fill="#ffe900"/><polygon points="662.7,564.5 663.6,566.8 667.5,555.2 666.6,551.0" fill="#ffd900"/><polygon points="663.6,566.8 664.4,574.8 668.3,563.2 667.5,555.2" fill="#fff300"/><polygon points="664.4,574.8 665.5,588.6 669.4,577.0 668.3,563.2" fill="#d7ff00"/><polygon points="665.5,588.6 666.4,600.5 670.3,588.9 669.4,577.0" fill="#9bff00"/><polygon points="666.4,600.5 669.3,617.1 673.2,605.4 670.3,588.9" fill="#59ff00"/><polygon points="669.3,617.1 672.2,629.7 676.0,618.1 673.2,605.4" fill="#18ff00"/><polygon points="672.2,629.7 674.9,630.8 678.8,623.0 676.0,618.1" fill="#00ff07"/><polygon points="674.9,630.8 677.6,633.8 681.5,626.0 678.8,623.0" fill="#00ff10"/><polygon points="677.6,633.8 680.3,634.9 684.2,629.0 681.5,626.0" fill="#00ff17"/><polygon points="680.3,634.9 685.7,640.9 689.7,636.9 684.2,629.0" fill="#00ff25"/><polygon points="685.7,640.9 691.2,648.8 695.1,642.9 689.7,636.9" fill="#00ff3d"/><polygon points="691.2,648.8 702.0,655.0 705.9,651.0 695.1,642.9" fill="#00ff4f"/><polygon points="702.0,655.0 712.7,661.2 716.7,657.3 705.9,651.0" fill="#00ff5b"/><polygon points="712.7,661.2 723.5,665.5 727.4,661.5 716.7,657.3" fill="#00ff60"/><polygon points="723.5,665.5 745.0,674.1 748.9,670.1 727.4,661.5" fill="#00ff60"/><polygon points="745.0,674.1 766.6,682.6 770.5,678.6 748.9,670.1" fill="#00ff60"/><polygon points="766.6,682.6 788.1,691.2 792.0,685.2 770.5,678.6" fill="#00ff5d"/><polygon points="788.1,691.2 809.6,699.7 813.5,693.7 792.0,685.2" fill="#00ff5b"/><polygon points="809.6,699.7 837.1,710.6 840.9,704.6 813.5,693.7" fill="#00ff5b"/><polygon points="656.1,600.0 656.5,600.2 660.3,582.8 659.9,582.6" fill="#8dff00"/><polygon points="656.5,600.2 658.2,591.2 662.0,575.8 660.3,582.8" fill="#a2ff00"/><polygon points="658.2,591.2 658.8,580.0 662.7,564.5 662.0,575.8" fill="#d2ff00"/><polygon points="658.8,580.0 659.7,580.3 663.6,566.8 662.7,564.5" fill="#ecff00"/><polygon points="659.7,580.3 660.6,588.3 664.4,574.8 663.6,566.8" fill="#d7ff00"/><polygon points="660.6,588.3 661.6,602.2 665.5,588.6 664.4,574.8" fill="#a4ff00"/><polygon points="661.6,602.2 662.5,614.1 666.4,600.5 665.5,588.6" fill="#67ff00"/><polygon points="662.5,614.1 665.4,628.8 669.3,617.1 666.4,600.5" fill="#29ff00"/><polygon points="665.4,628.8 668.3,639.5 672.2,629.7 669.3,617.1" fill="#00ff13"/><polygon points="668.3,639.5 671.0,640.6 674.9,630.8 672.2,629.7" fill="#00ff2c"/><polygon points="671.0,640.6 673.7,641.6 677.6,633.8 674.9,630.8" fill="#00ff2f"/><polygon points="673.7,641.6 676.3,642.7 680.3,634.9 677.6,633.8" fill="#00ff31"/><polygon points="676.3,642.7 681.8,648.7 685.7,640.9 680.3,634.9" fill="#00ff3a"/><polygon points="681.8,648.7 687.2,654.7 691.2,648.8 685.7,640.9" fill="#00ff4f"/><polygon points="687.2,654.7 698.0,660.9 702.0,655.0 691.2,648.8" fill="#00ff60"/><polygon points="698.0,660.9 708.8,667.2 712.7,661.2 702.0,655.0" fill="#00ff69"/><polygon points="708.8,667.2 719.6,671.4 723.5,665.5 712.7,661.2" fill="#00ff6e"/><polygon points="719.6,671.4 741.1,680.0 745.0,674.1 723.5,665.5" fill="#00ff6e"/><polygon points="741.1,680.0 762.7,688.6 766.6,682.6 745.0,674.1" fill="#00ff6e"/><polygon points="762.7,688.6 784.2,697.1 788.1,691.2 766.6,682.6" fill="#00ff6e"/><polygon points="784.2,697.1 805.7,705.7 809.6,699.7 788.1,691.2" fill="#00ff6e"/><polygon points="805.7,705.7 833.2,716.6 837.1,710.6 809.6,699.7" fill="#00ff6e"/><polygon points="652.3,617.5 652.7,617.7 656.5,600.2 656.1,600.0" fill="#42ff00"/><polygon points="652.7,617.7 654.3,604.8 658.2,591.2 656.5,600.2" fill="#5eff00"/><polygon points="654.3,604.8 654.9,589.7 658.8,580.0 658.2,591.2" fill="#9bff00"/><polygon points="654.9,589.7 655.8,590.0 659.7,580.3 658.8,580.0" fill="#bbff00"/><polygon points="655.8,590.0 656.6,596.1 660.6,588.3 659.7,580.3" fill="#abff00"/><polygon points="656.6,596.1 657.7,610.0 661.6,602.2 660.6,588.3" fill="#7aff00"/><polygon points="657.7,610.0 658.6,623.9 662.5,614.1 661.6,602.2" fill="#3bff00"/><polygon points="658.6,623.9 661.5,636.6 665.4,628.8 662.5,614.1" fill="#00ff00"/><polygon points="661.5,636.6 664.3,645.4 668.3,639.5 665.4,628.8" fill="#00ff33"/><polygon points="664.3,645.4 667.1,650.4 671.0,640.6 668.3,639.5" fill="#00ff4d"/><polygon points="667.1,650.4 669.8,651.4 673.7,641.6 671.0,640.6" fill="#00ff52"/><polygon points="669.8,651.4 672.5,652.5 676.3,642.7 673.7,641.6" fill="#00ff52"/><polygon points="672.5,652.5 677.9,658.5 681.8,648.7 676.3,642.7" fill="#00ff5b"/><polygon points="677.9,658.5 683.3,662.6 687.2,654.7 681.8,648.7" fill="#00ff6b"/><polygon points="683.3,662.6 694.1,668.8 698.0,660.9 687.2,654.7" fill="#00ff77"/><polygon points="694.1,668.8 705.0,677.0 708.8,667.2 698.0,660.9" fill="#00ff82"/><polygon points="705.0,677.0 715.7,681.3 719.6,671.4 708.8,667.2" fill="#00ff89"/><polygon points="715.7,681.3 737.2,689.9 741.1,680.0 719.6,671.4" fill="#00ff89"/><polygon points="737.2,689.9 758.8,698.4 762.7,688.6 741.1,680.0" fill="#00ff89"/><polygon points="758.8,698.4 780.3,707.0 784.2,697.1 762.7,688.6" fill="#00ff89"/><polygon points="780.3,707.0 801.9,715.6 805.7,705.7 784.2,697.1" fill="#00ff89"/><polygon points="801.9,715.6 829.4,726.5 833.2,716.6 805.7,705.7" fill="#00ff89"/><polygon points="648.5,637.0 649.0,637.2 652.7,617.7 652.3,617.5" fill="#00ff0c"/><polygon points="649.0,637.2 650.5,620.4 654.3,604.8 652.7,617.7" fill="#18ff00"/><polygon points="650.5,620.4 651.0,599.4 654.9,589.7 654.3,604.8" fill="#6aff00"/><polygon points="651.0,599.4 651.8,599.7 655.8,590.0 654.9,589.7" fill="#96ff00"/><polygon points="651.8,599.7 652.7,607.8 656.6,596.1 655.8,590.0" fill="#86ff00"/><polygon points="652.7,607.8 653.7,617.8 657.7,610.0 656.6,596.1" fill="#59ff00"/><polygon points="653.7,617.8 654.7,629.8 658.6,623.9 657.7,610.0" fill="#1fff00"/><polygon points="654.7,629.8 657.6,642.5 661.5,636.6 658.6,623.9" fill="#00ff1a"/><polygon points="657.6,642.5 660.4,655.2 664.3,645.4 661.5,636.6" fill="#00ff4d"/><polygon points="660.4,655.2 663.2,662.1 667.1,650.4 664.3,645.4" fill="#00ff70"/><polygon points="663.2,662.1 666.0,665.1 669.8,651.4 667.1,650.4" fill="#00ff7e"/><polygon points="666.0,665.1 668.6,666.2 672.5,652.5 669.8,651.4" fill="#00ff80"/><polygon points="668.6,666.2 674.1,672.2 677.9,658.5 672.5,652.5" fill="#00ff89"/><polygon points="674.1,672.2 679.5,676.3 683.3,662.6 677.9,658.5" fill="#00ff97"/><polygon points="679.5,676.3 690.3,684.5 694.1,668.8 683.3,662.6" fill="#00ffa3"/><polygon points="690.3,684.5 701.1,690.8 705.0,677.0 694.1,668.8" fill="#00ffb1"/><polygon points="701.1,690.8 711.9,695.1 715.7,681.3 705.0,677.0" fill="#00ffb8"/><polygon points="711.9,695.1 733.4,703.6 737.2,689.9 715.7,681.3" fill="#00ffb8"/><polygon points="733.4,703.6 755.0,712.2 758.8,698.4 737.2,689.9" fill="#00ffb8"/><polygon points="755.0,712.2 776.5,720.8 780.3,707.0 758.8,698.4" fill="#00ffb8"/><polygon points="776.5,720.8 798.0,729.4 801.9,715.6 780.3,707.0" fill="#00ffb8"/><polygon points="798.0,729.4 825.5,740.4 829.4,726.5 801.9,715.6" fill="#00ffb8"/><polygon points="644.8,654.6 645.2,654.8 649.0,637.2 648.5,637.0" fill="#00ff5b"/><polygon points="645.2,654.8 646.7,634.1 650.5,620.4 649.0,637.2" fill="#00ff2c"/><polygon points="646.7,634.1 647.1,611.1 651.0,599.4 650.5,620.4" fill="#37ff00"/><polygon points="647.1,611.1 648.0,611.4 651.8,599.7 651.0,599.4" fill="#6cff00"/><polygon points="648.0,611.4 648.9,619.5 652.7,607.8 651.8,599.7" fill="#59ff00"/><polygon points="648.9,619.5 649.9,635.4 653.7,617.8 652.7,607.8" fill="#29ff00"/><polygon points="649.9,635.4 650.8,643.5 654.7,629.8 653.7,617.8" fill="#00ff0c"/><polygon points="650.8,643.5 653.7,652.3 657.6,642.5 654.7,629.8" fill="#00ff3a"/><polygon points="653.7,652.3 656.6,667.0 660.4,655.2 657.6,642.5" fill="#00ff70"/><polygon points="656.6,667.0 659.5,679.8 663.2,662.1 660.4,655.2" fill="#00ffa3"/><polygon points="659.5,679.8 662.2,682.8 666.0,665.1 663.2,662.1" fill="#00ffbd"/><polygon points="662.2,682.8 664.9,687.8 668.6,666.2 666.0,665.1" fill="#00ffc6"/><polygon points="664.9,687.8 670.3,689.9 674.1,672.2 668.6,666.2" fill="#00ffcf"/><polygon points="670.3,689.9 675.7,692.1 679.5,676.3 674.1,672.2" fill="#00ffd6"/><polygon points="675.7,692.1 686.5,696.4 690.3,684.5 679.5,676.3" fill="#00ffdd"/><polygon points="686.5,696.4 697.3,704.6 701.1,690.8 690.3,684.5" fill="#00ffe9"/><polygon points="697.3,704.6 708.0,706.9 711.9,695.1 701.1,690.8" fill="#00ffed"/><polygon points="708.0,706.9 729.6,715.5 733.4,703.6 711.9,695.1" fill="#00ffeb"/><polygon points="729.6,715.5 751.1,724.1 755.0,712.2 733.4,703.6" fill="#00ffeb"/><polygon points="751.1,724.1 772.6,730.8 776.5,720.8 755.0,712.2" fill="#00ffe9"/><polygon points="772.6,730.8 794.1,737.4 798.0,729.4 776.5,720.8" fill="#00ffe4"/><polygon points="794.1,737.4 821.6,748.4 825.5,740.4 798.0,729.4" fill="#00ffe2"/><polygon points="641.1,672.2 641.5,672.4 645.2,654.8 644.8,654.6" fill="#00ffa5"/><polygon points="641.5,672.4 642.9,651.7 646.7,634.1 645.2,654.8" fill="#00ff72"/><polygon points="642.9,651.7 643.3,626.7 647.1,611.1 646.7,634.1" fill="#00ff05"/><polygon points="643.3,626.7 644.2,627.0 648.0,611.4 647.1,611.1" fill="#34ff00"/><polygon points="644.2,627.0 645.0,633.2 648.9,619.5 648.0,611.4" fill="#24ff00"/><polygon points="645.0,633.2 646.0,643.2 649.9,635.4 648.9,619.5" fill="#00ff0a"/><polygon points="646.0,643.2 647.0,653.3 650.8,643.5 649.9,635.4" fill="#00ff3d"/><polygon points="647.0,653.3 649.9,666.1 653.7,652.3 650.8,643.5" fill="#00ff69"/><polygon points="649.9,666.1 652.9,690.5 656.6,667.0 653.7,652.3" fill="#00ffac"/><polygon points="652.9,690.5 655.9,707.2 659.5,679.8 656.6,667.0" fill="#00fff9"/><polygon points="655.9,707.2 658.6,708.3 662.2,682.8 659.5,679.8" fill="#00e1ff"/><polygon points="658.6,708.3 661.3,709.4 664.9,687.8 662.2,682.8" fill="#00daff"/><polygon points="661.3,709.4 666.6,711.5 670.3,689.9 664.9,687.8" fill="#00d5ff"/><polygon points="666.6,711.5 672.0,711.7 675.7,692.1 670.3,689.9" fill="#00d8ff"/><polygon points="672.0,711.7 682.7,714.1 686.5,696.4 675.7,692.1" fill="#00dcff"/><polygon points="682.7,714.1 693.5,718.4 697.3,704.6 686.5,696.4" fill="#00daff"/><polygon points="693.5,718.4 704.2,722.7 708.0,706.9 697.3,704.6" fill="#00d8ff"/><polygon points="704.2,722.7 725.8,731.3 729.6,715.5 708.0,706.9" fill="#00daff"/><polygon points="725.8,731.3 747.3,740.0 751.1,724.1 729.6,715.5" fill="#00daff"/><polygon points="747.3,740.0 768.8,748.6 772.6,730.8 751.1,724.1" fill="#00dcff"/><polygon points="768.8,748.6 790.3,757.2 794.1,737.4 772.6,730.8" fill="#00e1ff"/><polygon points="790.3,757.2 817.8,768.2 821.6,748.4 794.1,737.4" fill="#00e3ff"/><polygon points="637.4,691.9 637.8,692.0 641.5,672.4 641.1,672.2" fill="#00fff4"/><polygon points="637.8,692.0 639.2,669.3 642.9,651.7 641.5,672.4" fill="#00ffbf"/><polygon points="639.2,669.3 639.5,642.3 643.3,626.7 642.9,651.7" fill="#00ff4b"/><polygon points="639.5,642.3 640.4,642.7 644.2,627.0 643.3,626.7" fill="#00ff0c"/><polygon points="640.4,642.7 641.2,643.0 645.0,633.2 644.2,627.0" fill="#00ff13"/><polygon points="641.2,643.0 642.2,655.0 646.0,643.2 645.0,633.2" fill="#00ff33"/><polygon points="642.2,655.0 643.2,667.0 647.0,653.3 646.0,643.2" fill="#00ff67"/><polygon points="643.2,667.0 646.2,687.7 649.9,666.1 647.0,653.3" fill="#00ffa5"/><polygon points="646.2,687.7 649.3,712.2 652.9,690.5 649.9,666.1" fill="#00fbff"/><polygon points="649.3,712.2 652.1,721.1 655.9,707.2 652.9,690.5" fill="#00a7ff"/><polygon points="652.1,721.1 654.9,726.1 658.6,708.3 655.9,707.2" fill="#0086ff"/><polygon points="654.9,726.1 657.6,727.1 661.3,709.4 658.6,708.3" fill="#0082ff"/><polygon points="657.6,727.1 662.9,729.3 666.6,711.5 661.3,709.4" fill="#0082ff"/><polygon points="662.9,729.3 668.3,731.5 672.0,711.7 666.6,711.5" fill="#0084ff"/><polygon points="668.3,731.5 679.1,735.8 682.7,714.1 672.0,711.7" fill="#0089ff"/><polygon points="679.1,735.8 689.8,740.1 693.5,718.4 682.7,714.1" fill="#008bff"/><polygon points="689.8,740.1 700.5,744.4 704.2,722.7 693.5,718.4" fill="#008bff"/><polygon points="700.5,744.4 722.0,753.1 725.8,731.3 704.2,722.7" fill="#008bff"/><polygon points="722.0,753.1 743.5,761.8 747.3,740.0 725.8,731.3" fill="#008bff"/><polygon points="743.5,761.8 765.0,770.4 768.8,748.6 747.3,740.0" fill="#008bff"/><polygon points="765.0,770.4 786.5,779.1 790.3,757.2 768.8,748.6" fill="#008bff"/><polygon points="786.5,779.1 813.9,790.1 817.8,768.2 790.3,757.2" fill="#008bff"/><polygon points="633.7,709.6 634.1,709.8 637.8,692.0 637.4,691.9" fill="#00baff"/><polygon points="634.1,709.8 635.5,687.1 639.2,669.3 637.8,692.0" fill="#00f1ff"/><polygon points="635.5,687.1 635.8,660.0 639.5,642.3 639.2,669.3" fill="#00ff93"/><polygon points="635.8,660.0 636.7,660.4 640.4,642.7 639.5,642.3" fill="#00ff52"/><polygon points="636.7,660.4 637.4,660.7 641.2,643.0 640.4,642.7" fill="#00ff52"/><polygon points="637.4,660.7 638.3,662.9 642.2,655.0 641.2,643.0" fill="#00ff62"/><polygon points="638.3,662.9 639.6,692.6 643.2,667.0 642.2,655.0" fill="#00ffa3"/><polygon points="639.6,692.6 642.6,713.2 646.2,687.7 643.2,667.0" fill="#00fbff"/><polygon points="642.6,713.2 645.6,730.0 649.3,712.2 646.2,687.7" fill="#009eff"/><polygon points="645.6,730.0 648.3,731.0 652.1,721.1 649.3,712.2" fill="#0066ff"/><polygon points="648.3,731.0 651.0,734.1 654.9,726.1 652.1,721.1" fill="#0056ff"/><polygon points="651.0,734.1 653.7,735.2 657.6,727.1 654.9,726.1" fill="#004fff"/><polygon points="653.7,735.2 659.1,737.3 662.9,729.3 657.6,727.1" fill="#004fff"/><polygon points="659.1,737.3 664.4,739.5 668.3,731.5 662.9,729.3" fill="#004fff"/><polygon points="664.4,739.5 675.2,743.8 679.1,735.8 668.3,731.5" fill="#004fff"/><polygon points="675.2,743.8 686.0,748.2 689.8,740.1 679.1,735.8" fill="#004fff"/><polygon points="686.0,748.2 696.7,752.5 700.5,744.4 689.8,740.1" fill="#004fff"/><polygon points="696.7,752.5 718.2,761.1 722.0,753.1 700.5,744.4" fill="#004fff"/><polygon points="718.2,761.1 739.7,769.8 743.5,761.8 722.0,753.1" fill="#004fff"/><polygon points="739.7,769.8 761.2,778.5 765.0,770.4 743.5,761.8" fill="#004fff"/><polygon points="761.2,778.5 782.6,787.1 786.5,779.1 765.0,770.4" fill="#004fff"/><polygon points="782.6,787.1 810.1,798.2 813.9,790.1 786.5,779.1" fill="#004fff"/><polygon points="630.0,725.5 630.4,725.6 634.1,709.8 633.7,709.6" fill="#0074ff"/><polygon points="630.4,725.6 631.7,702.9 635.5,687.1 634.1,709.8" fill="#00acff"/><polygon points="631.7,702.9 632.1,677.7 635.8,660.0 635.5,687.1" fill="#00ffdb"/><polygon points="632.1,677.7 633.0,678.1 636.7,660.4 635.8,660.0" fill="#00ff9c"/><polygon points="633.0,678.1 633.7,678.4 637.4,660.7 636.7,660.4" fill="#00ff9c"/><polygon points="633.7,678.4 634.6,682.6 638.3,662.9 637.4,660.7" fill="#00ffa3"/><polygon points="634.6,682.6 635.8,704.5 639.6,692.6 638.3,662.9" fill="#00ffe6"/><polygon points="635.8,704.5 638.8,721.2 642.6,713.2 639.6,692.6" fill="#00b0ff"/><polygon points="638.8,721.2 641.7,734.1 645.6,730.0 642.6,713.2" fill="#0066ff"/><polygon points="641.7,734.1 644.4,737.1 648.3,731.0 645.6,730.0" fill="#0043ff"/><polygon points="644.4,737.1 647.1,740.2 651.0,734.1 648.3,731.0" fill="#003cff"/><polygon points="647.1,740.2 649.8,741.2 653.7,735.2 651.0,734.1" fill="#0037ff"/><polygon points="649.8,741.2 655.2,743.4 659.1,737.3 653.7,735.2" fill="#0037ff"/><polygon points="655.2,743.4 660.6,745.6 664.4,739.5 659.1,737.3" fill="#0037ff"/><polygon points="660.6,745.6 671.3,749.9 675.2,743.8 664.4,739.5" fill="#0037ff"/><polygon points="671.3,749.9 682.1,754.3 686.0,748.2 675.2,743.8" fill="#0037ff"/><polygon points="682.1,754.3 692.8,758.6 696.7,752.5 686.0,748.2" fill="#0037ff"/><polygon points="692.8,758.6 714.3,767.2 718.2,761.1 696.7,752.5" fill="#0037ff"/><polygon points="714.3,767.2 735.8,775.9 739.7,769.8 718.2,761.1" fill="#0037ff"/><polygon points="735.8,775.9 757.3,784.6 761.2,778.5 739.7,769.8" fill="#0037ff"/><polygon points="757.3,784.6 778.8,793.2 782.6,787.1 761.2,778.5" fill="#0037ff"/><polygon points="778.8,793.2 806.2,804.3 810.1,798.2 782.6,787.1" fill="#0037ff"/><polygon points="626.1,731.6 626.5,731.7 630.4,725.6 630.0,725.5" fill="#004aff"/><polygon points="626.5,731.7 628.0,716.8 631.7,702.9 630.4,725.6" fill="#0078ff"/><polygon points="628.0,716.8 628.5,699.4 632.1,677.7 631.7,702.9" fill="#00daff"/><polygon points="628.5,699.4 629.3,699.8 633.0,678.1 632.1,677.7" fill="#00fff0"/><polygon points="629.3,699.8 630.1,700.1 633.7,678.4 633.0,678.1" fill="#00fff0"/><polygon points="630.1,700.1 630.9,700.4 634.6,682.6 633.7,678.4" fill="#00fff4"/><polygon points="630.9,700.4 632.0,714.5 635.8,704.5 634.6,682.6" fill="#00daff"/><polygon points="632.0,714.5 635.0,731.2 638.8,721.2 635.8,704.5" fill="#008bff"/><polygon points="635.0,731.2 637.8,740.2 641.7,734.1 638.8,721.2" fill="#004fff"/><polygon points="637.8,740.2 640.5,743.2 644.4,737.1 641.7,734.1" fill="#0033ff"/><polygon points="640.5,743.2 643.3,746.3 647.1,740.2 644.4,737.1" fill="#0029ff"/><polygon points="643.3,746.3 645.9,747.3 649.8,741.2 647.1,740.2" fill="#0025ff"/><polygon points="645.9,747.3 651.3,749.5 655.2,743.4 649.8,741.2" fill="#0025ff"/><polygon points="651.3,749.5 656.7,751.7 660.6,745.6 655.2,743.4" fill="#0025ff"/><polygon points="656.7,751.7 667.4,756.0 671.3,749.9 660.6,745.6" fill="#0025ff"/><polygon points="667.4,756.0 678.2,760.4 682.1,754.3 671.3,749.9" fill="#0025ff"/><polygon points="678.2,760.4 688.9,764.7 692.8,758.6 682.1,754.3" fill="#0025ff"/><polygon points="688.9,764.7 710.4,773.4 714.3,767.2 692.8,758.6" fill="#0025ff"/><polygon points="710.4,773.4 732.0,782.0 735.8,775.9 714.3,767.2" fill="#0025ff"/><polygon points="732.0,782.0 753.4,790.7 757.3,784.6 735.8,775.9" fill="#0025ff"/><polygon points="753.4,790.7 774.9,799.4 778.8,793.2 757.3,784.6" fill="#0025ff"/><polygon points="774.9,799.4 802.4,810.4 806.2,804.3 778.8,793.2" fill="#0025ff"/><polygon points="622.2,735.7 622.6,735.9 626.5,731.7 626.1,731.6" fill="#003cff"/><polygon points="622.6,735.9 624.2,726.8 628.0,716.8 626.5,731.7" fill="#005aff"/><polygon points="624.2,726.8 624.8,717.3 628.5,699.4 628.0,716.8" fill="#0099ff"/><polygon points="624.8,717.3 625.7,717.6 629.3,699.8 628.5,699.4" fill="#00baff"/><polygon points="625.7,717.6 626.4,717.9 630.1,700.1 629.3,699.8" fill="#00baff"/><polygon points="626.4,717.9 627.3,718.2 630.9,700.4 630.1,700.1" fill="#00baff"/><polygon points="627.3,718.2 628.2,726.4 632.0,714.5 630.9,700.4" fill="#00a0ff"/><polygon points="628.2,726.4 631.1,739.3 635.0,731.2 632.0,714.5" fill="#0066ff"/><polygon points="631.1,739.3 633.9,748.2 637.8,740.2 635.0,731.2" fill="#0033ff"/><polygon points="633.9,748.2 636.6,749.3 640.5,743.2 637.8,740.2" fill="#001eff"/><polygon points="636.6,749.3 639.3,750.4 643.3,746.3 640.5,743.2" fill="#0019ff"/><polygon points="639.3,750.4 642.0,751.5 645.9,747.3 643.3,746.3" fill="#0017ff"/><polygon points="642.0,751.5 647.4,753.7 651.3,749.5 645.9,747.3" fill="#0017ff"/><polygon points="647.4,753.7 652.8,755.8 656.7,751.7 651.3,749.5" fill="#0017ff"/><polygon points="652.8,755.8 663.5,760.2 667.4,756.0 656.7,751.7" fill="#0017ff"/><polygon points="663.5,760.2 674.3,764.5 678.2,760.4 667.4,756.0" fill="#0017ff"/><polygon points="674.3,764.5 685.0,768.8 688.9,764.7 678.2,760.4" fill="#0017ff"/><polygon points="685.0,768.8 706.5,777.5 710.4,773.4 688.9,764.7" fill="#0017ff"/><polygon points="706.5,777.5 728.1,786.2 732.0,782.0 710.4,773.4" fill="#0017ff"/><polygon points="728.1,786.2 749.6,794.9 753.4,790.7 732.0,782.0" fill="#0017ff"/><polygon points="749.6,794.9 771.1,803.5 774.9,799.4 753.4,790.7" fill="#0017ff"/><polygon points="771.1,803.5 798.5,814.6 802.4,810.4 774.9,799.4" fill="#0017ff"/><polygon points="620.6,736.6 621.0,736.7 622.6,735.9 622.2,735.7" fill="#0037ff"/><polygon points="621.0,736.7 622.7,733.5 624.2,726.8 622.6,735.9" fill="#0048ff"/><polygon points="622.7,733.5 623.5,729.9 624.8,717.3 624.2,726.8" fill="#0068ff"/><polygon points="623.5,729.9 624.3,730.3 625.7,717.6 624.8,717.3" fill="#0078ff"/><polygon points="624.3,730.3 625.1,730.6 626.4,717.9 625.7,717.6" fill="#0078ff"/><polygon points="625.1,730.6 625.9,730.9 627.3,718.2 626.4,717.9" fill="#0078ff"/><polygon points="625.9,730.9 626.8,739.1 628.2,726.4 627.3,718.2" fill="#0066ff"/><polygon points="626.8,739.1 629.7,748.0 631.1,739.3 628.2,726.4" fill="#003cff"/><polygon points="629.7,748.0 632.4,751.1 633.9,748.2 631.1,739.3" fill="#0019ff"/><polygon points="632.4,751.1 635.1,752.2 636.6,749.3 633.9,748.2" fill="#000dff"/><polygon points="635.1,752.2 637.8,753.3 639.3,750.4 636.6,749.3" fill="#000dff"/><polygon points="637.8,753.3 640.5,754.3 642.0,751.5 639.3,750.4" fill="#000dff"/><polygon points="640.5,754.3 645.8,756.5 647.4,753.7 642.0,751.5" fill="#000dff"/><polygon points="645.8,756.5 651.2,758.7 652.8,755.8 647.4,753.7" fill="#000dff"/><polygon points="651.2,758.7 662.0,763.0 663.5,760.2 652.8,755.8" fill="#000dff"/><polygon points="662.0,763.0 672.8,767.4 674.3,764.5 663.5,760.2" fill="#000dff"/><polygon points="672.8,767.4 683.5,771.7 685.0,768.8 674.3,764.5" fill="#000dff"/><polygon points="683.5,771.7 705.0,780.4 706.5,777.5 685.0,768.8" fill="#000dff"/><polygon points="705.0,780.4 726.5,789.0 728.1,786.2 706.5,777.5" fill="#000dff"/><polygon points="726.5,789.0 748.0,797.7 749.6,794.9 728.1,786.2" fill="#000dff"/><polygon points="748.0,797.7 769.5,806.4 771.1,803.5 749.6,794.9" fill="#000dff"/><polygon points="769.5,806.4 797.0,817.4 798.5,814.6 771.1,803.5" fill="#000dff"/><polygon points="619.0,737.4 619.4,737.6 621.0,736.7 620.6,736.6" fill="#0037ff"/><polygon points="619.4,737.6 621.1,734.4 622.7,733.5 621.0,736.7" fill="#0041ff"/><polygon points="621.1,734.4 622.0,734.7 623.5,729.9 622.7,733.5" fill="#004fff"/><polygon points="622.0,734.7 622.8,735.1 624.3,730.3 623.5,729.9" fill="#0053ff"/><polygon points="622.8,735.1 623.6,735.4 625.1,730.6 624.3,730.3" fill="#0053ff"/><polygon points="623.6,735.4 624.4,735.7 625.9,730.9 625.1,730.6" fill="#0053ff"/><polygon points="624.4,735.7 625.2,739.9 626.8,739.1 625.9,730.9" fill="#0045ff"/><polygon points="625.2,739.9 628.1,748.9 629.7,748.0 626.8,739.1" fill="#0025ff"/><polygon points="628.1,748.9 630.9,753.9 632.4,751.1 629.7,748.0" fill="#000bff"/><polygon points="630.9,753.9 633.6,755.0 635.1,752.2 632.4,751.1" fill="#0004ff"/><polygon points="633.6,755.0 636.3,756.1 637.8,753.3 635.1,752.2" fill="#0004ff"/><polygon points="636.3,756.1 638.9,757.2 640.5,754.3 637.8,753.3" fill="#0004ff"/><polygon points="638.9,757.2 644.3,759.3 645.8,756.5 640.5,754.3" fill="#0004ff"/><polygon points="644.3,759.3 649.7,761.5 651.2,758.7 645.8,756.5" fill="#0004ff"/><polygon points="649.7,761.5 660.4,765.9 662.0,763.0 651.2,758.7" fill="#0004ff"/><polygon points="660.4,765.9 671.2,770.2 672.8,767.4 662.0,763.0" fill="#0004ff"/><polygon points="671.2,770.2 681.9,774.5 683.5,771.7 672.8,767.4" fill="#0004ff"/><polygon points="681.9,774.5 703.5,783.2 705.0,780.4 683.5,771.7" fill="#0004ff"/><polygon points="703.5,783.2 725.0,791.9 726.5,789.0 705.0,780.4" fill="#0004ff"/><polygon points="725.0,791.9 746.5,800.6 748.0,797.7 726.5,789.0" fill="#0004ff"/><polygon points="746.5,800.6 768.0,809.2 769.5,806.4 748.0,797.7" fill="#0004ff"/><polygon points="768.0,809.2 795.4,820.3 797.0,817.4 769.5,806.4" fill="#0004ff"/><polygon points="617.4,738.3 617.8,738.5 619.4,737.6 619.0,737.4" fill="#0037ff"/><polygon points="617.8,738.5 619.6,739.2 621.1,734.4 619.4,737.6" fill="#003cff"/><polygon points="619.6,739.2 620.5,739.5 622.0,734.7 621.1,734.4" fill="#0041ff"/><polygon points="620.5,739.5 621.3,739.9 622.8,735.1 622.0,734.7" fill="#0041ff"/><polygon points="621.3,739.9 622.1,740.2 623.6,735.4 622.8,735.1" fill="#0041ff"/><polygon points="622.1,740.2 622.9,740.5 624.4,735.7 623.6,735.4" fill="#0041ff"/><polygon points="622.9,740.5 623.7,740.8 625.2,739.9 624.4,735.7" fill="#003cff"/><polygon points="623.7,740.8 626.5,749.8 628.1,748.9 625.2,739.9" fill="#0025ff"/><polygon points="626.5,749.8 629.3,754.8 630.9,753.9 628.1,748.9" fill="#0009ff"/><polygon points="629.3,754.8 632.0,755.9 633.6,755.0 630.9,753.9" fill="#0000ff"/><polygon points="632.0,755.9 634.7,757.0 636.3,756.1 633.6,755.0" fill="#0000ff"/><polygon points="634.7,757.0 637.4,758.1 638.9,757.2 636.3,756.1" fill="#0000ff"/><polygon points="637.4,758.1 642.7,760.2 644.3,759.3 638.9,757.2" fill="#0000ff"/><polygon points="642.7,760.2 648.1,762.4 649.7,761.5 644.3,759.3" fill="#0000ff"/><polygon points="648.1,762.4 658.9,766.7 660.4,765.9 649.7,761.5" fill="#0000ff"/><polygon points="658.9,766.7 669.6,771.1 671.2,770.2 660.4,765.9" fill="#0000ff"/><polygon points="669.6,771.1 680.4,775.4 681.9,774.5 671.2,770.2" fill="#0000ff"/><polygon points="680.4,775.4 701.9,784.1 703.5,783.2 681.9,774.5" fill="#0000ff"/><polygon points="701.9,784.1 723.4,792.8 725.0,791.9 703.5,783.2" fill="#0000ff"/><polygon points="723.4,792.8 744.9,801.4 746.5,800.6 725.0,791.9" fill="#0000ff"/><polygon points="744.9,801.4 766.4,810.1 768.0,809.2 746.5,800.6" fill="#0000ff"/><polygon points="766.4,810.1 793.9,821.2 795.4,820.3 768.0,809.2" fill="#0000ff"/><polygon points="615.8,739.2 616.2,739.3 617.8,738.5 617.4,738.3" fill="#0037ff"/><polygon points="616.2,739.3 618.0,740.1 619.6,739.2 617.8,738.5" fill="#0037ff"/><polygon points="618.0,740.1 618.9,740.4 620.5,739.5 619.6,739.2" fill="#0037ff"/><polygon points="618.9,740.4 619.7,740.7 621.3,739.9 620.5,739.5" fill="#0037ff"/><polygon points="619.7,740.7 620.5,741.0 622.1,740.2 621.3,739.9" fill="#0037ff"/><polygon points="620.5,741.0 621.3,741.4 622.9,740.5 622.1,740.2" fill="#0037ff"/><polygon points="621.3,741.4 622.1,741.7 623.7,740.8 622.9,740.5" fill="#0037ff"/><polygon points="622.1,741.7 624.9,750.7 626.5,749.8 623.7,740.8" fill="#0025ff"/><polygon points="624.9,750.7 627.7,755.7 629.3,754.8 626.5,749.8" fill="#0009ff"/><polygon points="627.7,755.7 630.4,756.8 632.0,755.9 629.3,754.8" fill="#0000ff"/><polygon points="630.4,756.8 633.1,757.9 634.7,757.0 632.0,755.9" fill="#0000ff"/><polygon points="633.1,757.9 635.8,758.9 637.4,758.1 634.7,757.0" fill="#0000ff"/><polygon points="635.8,758.9 641.2,761.1 642.7,760.2 637.4,758.1" fill="#0000ff"/><polygon points="641.2,761.1 646.5,763.3 648.1,762.4 642.7,760.2" fill="#0000ff"/><polygon points="646.5,763.3 657.3,767.6 658.9,766.7 648.1,762.4" fill="#0000ff"/><polygon points="657.3,767.6 668.1,771.9 669.6,771.1 658.9,766.7" fill="#0000ff"/><polygon points="668.1,771.9 678.8,776.3 680.4,775.4 669.6,771.1" fill="#0000ff"/><polygon points="678.8,776.3 700.3,785.0 701.9,784.1 680.4,775.4" fill="#0000ff"/><polygon points="700.3,785.0 721.9,793.6 723.4,792.8 701.9,784.1" fill="#0000ff"/><polygon points="721.9,793.6 743.4,802.3 744.9,801.4 723.4,792.8" fill="#0000ff"/><polygon points="743.4,802.3 764.9,811.0 766.4,810.1 744.9,801.4" fill="#0000ff"/><polygon points="764.9,811.0 792.3,822.0 793.9,821.2 766.4,810.1" fill="#0000ff"/><polygon points="614.2,740.0 614.7,740.2 616.2,739.3 615.8,739.2" fill="#0037ff"/><polygon points="614.7,740.2 616.5,740.9 618.0,740.1 616.2,739.3" fill="#0037ff"/><polygon points="616.5,740.9 617.3,741.3 618.9,740.4 618.0,740.1" fill="#0037ff"/><polygon points="617.3,741.3 618.1,741.6 619.7,740.7 618.9,740.4" fill="#0037ff"/><polygon points="618.1,741.6 618.9,741.9 620.5,741.0 619.7,740.7" fill="#0037ff"/><polygon points="618.9,741.9 619.7,742.2 621.3,741.4 620.5,741.0" fill="#0037ff"/><polygon points="619.7,742.2 620.5,742.6 622.1,741.7 621.3,741.4" fill="#0037ff"/><polygon points="620.5,742.6 623.4,751.5 624.9,750.7 622.1,741.7" fill="#0025ff"/><polygon points="623.4,751.5 626.1,756.6 627.7,755.7 624.9,750.7" fill="#0009ff"/><polygon points="626.1,756.6 628.8,757.6 630.4,756.8 627.7,755.7" fill="#0000ff"/><polygon points="628.8,757.6 631.5,758.7 633.1,757.9 630.4,756.8" fill="#0000ff"/><polygon points="631.5,758.7 634.2,759.8 635.8,758.9 633.1,757.9" fill="#0000ff"/><polygon points="634.2,759.8 639.6,762.0 641.2,761.1 635.8,758.9" fill="#0000ff"/><polygon points="639.6,762.0 645.0,764.1 646.5,763.3 641.2,761.1" fill="#0000ff"/><polygon points="645.0,764.1 655.7,768.5 657.3,767.6 646.5,763.3" fill="#0000ff"/><polygon points="655.7,768.5 666.5,772.8 668.1,771.9 657.3,767.6" fill="#0000ff"/><polygon points="666.5,772.8 677.2,777.2 678.8,776.3 668.1,771.9" fill="#0000ff"/><polygon points="677.2,777.2 698.8,785.8 700.3,785.0 678.8,776.3" fill="#0000ff"/><polygon points="698.8,785.8 720.3,794.5 721.9,793.6 700.3,785.0" fill="#0000ff"/><polygon points="720.3,794.5 741.8,803.2 743.4,802.3 721.9,793.6" fill="#0000ff"/><polygon points="741.8,803.2 763.3,811.8 764.9,811.0 743.4,802.3" fill="#0000ff"/><polygon points="763.3,811.8 790.8,822.9 792.3,822.0 764.9,811.0" fill="#0000ff"/><polygon points="612.6,740.9 613.1,741.1 614.7,740.2 614.2,740.0" fill="#0037ff"/><polygon points="613.1,741.1 614.9,741.8 616.5,740.9 614.7,740.2" fill="#0037ff"/><polygon points="614.9,741.8 615.7,742.1 617.3,741.3 616.5,740.9" fill="#0037ff"/><polygon points="615.7,742.1 616.6,742.5 618.1,741.6 617.3,741.3" fill="#0037ff"/><polygon points="616.6,742.5 617.3,742.8 618.9,741.9 618.1,741.6" fill="#0037ff"/><polygon points="617.3,742.8 618.2,743.1 619.7,742.2 618.9,741.9" fill="#0037ff"/><polygon points="618.2,743.1 618.9,743.4 620.5,742.6 619.7,742.2" fill="#0037ff"/><polygon points="618.9,743.4 621.8,752.4 623.4,751.5 620.5,742.6" fill="#0025ff"/><polygon points="621.8,752.4 624.5,757.4 626.1,756.6 623.4,751.5" fill="#0009ff"/><polygon points="624.5,757.4 627.2,758.5 628.8,757.6 626.1,756.6" fill="#0000ff"/><polygon points="627.2,758.5 629.9,759.6 631.5,758.7 628.8,757.6" fill="#0000ff"/><polygon points="629.9,759.6 632.6,760.7 634.2,759.8 631.5,758.7" fill="#0000ff"/><polygon points="632.6,760.7 638.0,762.9 639.6,762.0 634.2,759.8" fill="#0000ff"/><polygon points="638.0,762.9 643.4,765.0 645.0,764.1 639.6,762.0" fill="#0000ff"/><polygon points="643.4,765.0 654.1,769.4 655.7,768.5 645.0,764.1" fill="#0000ff"/><polygon points="654.1,769.4 664.9,773.7 666.5,772.8 655.7,768.5" fill="#0000ff"/><polygon points="664.9,773.7 675.7,778.0 677.2,777.2 666.5,772.8" fill="#0000ff"/><polygon points="675.7,778.0 697.2,786.7 698.8,785.8 677.2,777.2" fill="#0000ff"/><polygon points="697.2,786.7 718.7,795.4 720.3,794.5 698.8,785.8" fill="#0000ff"/><polygon points="718.7,795.4 740.3,804.0 741.8,803.2 720.3,794.5" fill="#0000ff"/><polygon points="740.3,804.0 761.8,812.7 763.3,811.8 741.8,803.2" fill="#0000ff"/><polygon points="761.8,812.7 789.3,823.8 790.8,822.9 763.3,811.8" fill="#0000ff"/><polygon points="611.1,741.8 611.5,741.9 613.1,741.1 612.6,740.9" fill="#0037ff"/><polygon points="611.5,741.9 613.3,742.7 614.9,741.8 613.1,741.1" fill="#0037ff"/><polygon points="613.3,742.7 614.1,743.0 615.7,742.1 614.9,741.8" fill="#0037ff"/><polygon points="614.1,743.0 615.0,743.3 616.6,742.5 615.7,742.1" fill="#0037ff"/><polygon points="615.0,743.3 615.7,743.7 617.3,742.8 616.6,742.5" fill="#0037ff"/><polygon points="615.7,743.7 616.6,744.0 618.2,743.1 617.3,742.8" fill="#0037ff"/><polygon points="616.6,744.0 617.3,744.3 618.9,743.4 618.2,743.1" fill="#0037ff"/><polygon points="617.3,744.3 620.2,753.3 621.8,752.4 618.9,743.4" fill="#0025ff"/><polygon points="620.2,753.3 623.0,758.3 624.5,757.4 621.8,752.4" fill="#0009ff"/><polygon points="623.0,758.3 625.7,759.4 627.2,758.5 624.5,757.4" fill="#0000ff"/><polygon points="625.7,759.4 628.4,760.5 629.9,759.6 627.2,758.5" fill="#0000ff"/><polygon points="628.4,760.5 631.0,761.6 632.6,760.7 629.9,759.6" fill="#0000ff"/><polygon points="631.0,761.6 636.4,763.7 638.0,762.9 632.6,760.7" fill="#0000ff"/><polygon points="636.4,763.7 641.8,765.9 643.4,765.0 638.0,762.9" fill="#0000ff"/><polygon points="641.8,765.9 652.6,770.2 654.1,769.4 643.4,765.0" fill="#0000ff"/><polygon points="652.6,770.2 663.4,774.6 664.9,773.7 654.1,769.4" fill="#0000ff"/><polygon points="663.4,774.6 674.1,778.9 675.7,778.0 664.9,773.7" fill="#0000ff"/><polygon points="674.1,778.9 695.6,787.6 697.2,786.7 675.7,778.0" fill="#0000ff"/><polygon points="695.6,787.6 717.2,796.3 718.7,795.4 697.2,786.7" fill="#0000ff"/><polygon points="717.2,796.3 738.7,804.9 740.3,804.0 718.7,795.4" fill="#0000ff"/><polygon points="738.7,804.9 760.2,813.6 761.8,812.7 740.3,804.0" fill="#0000ff"/><polygon points="760.2,813.6 787.7,824.6 789.3,823.8 761.8,812.7" fill="#0000ff"/><polygon points="609.5,742.6 609.9,742.8 611.5,741.9 611.1,741.8" fill="#0037ff"/><polygon points="609.9,742.8 611.7,743.5 613.3,742.7 611.5,741.9" fill="#0037ff"/><polygon points="611.7,743.5 612.5,743.9 614.1,743.0 613.3,742.7" fill="#0037ff"/><polygon points="612.5,743.9 613.4,744.2 615.0,743.3 614.1,743.0" fill="#0037ff"/><polygon points="613.4,744.2 614.2,744.5 615.7,743.7 615.0,743.3" fill="#0037ff"/><polygon points="614.2,744.5 615.0,744.9 616.6,744.0 615.7,743.7" fill="#0037ff"/><polygon points="615.0,744.9 615.7,745.2 617.3,744.3 616.6,744.0" fill="#0037ff"/><polygon points="615.7,745.2 618.6,754.1 620.2,753.3 617.3,744.3" fill="#0025ff"/><polygon points="618.6,754.1 621.4,759.2 623.0,758.3 620.2,753.3" fill="#0009ff"/><polygon points="621.4,759.2 624.1,760.3 625.7,759.4 623.0,758.3" fill="#0000ff"/><polygon points="624.1,760.3 626.8,761.4 628.4,760.5 625.7,759.4" fill="#0000ff"/><polygon points="626.8,761.4 629.5,762.4 631.0,761.6 628.4,760.5" fill="#0000ff"/><polygon points="629.5,762.4 634.8,764.6 636.4,763.7 631.0,761.6" fill="#0000ff"/><polygon points="634.8,764.6 640.2,766.8 641.8,765.9 636.4,763.7" fill="#0000ff"/><polygon points="640.2,766.8 651.0,771.1 652.6,770.2 641.8,765.9" fill="#0000ff"/><polygon points="651.0,771.1 661.8,775.4 663.4,774.6 652.6,770.2" fill="#0000ff"/><polygon points="661.8,775.4 672.5,779.8 674.1,778.9 663.4,774.6" fill="#0000ff"/><polygon points="672.5,779.8 694.1,788.4 695.6,787.6 674.1,778.9" fill="#0000ff"/><polygon points="694.1,788.4 715.6,797.1 717.2,796.3 695.6,787.6" fill="#0000ff"/><polygon points="715.6,797.1 737.2,805.8 738.7,804.9 717.2,796.3" fill="#0000ff"/><polygon points="737.2,805.8 758.7,814.5 760.2,813.6 738.7,804.9" fill="#0000ff"/><polygon points="758.7,814.5 786.2,825.5 787.7,824.6 760.2,813.6" fill="#0000ff"/><polygon points="603.1,746.1 603.5,746.3 609.9,742.8 609.5,742.6" fill="#0037ff"/><polygon points="603.5,746.3 605.4,747.0 611.7,743.5 609.9,742.8" fill="#0037ff"/><polygon points="605.4,747.0 606.2,747.3 612.5,743.9 611.7,743.5" fill="#0037ff"/><polygon points="606.2,747.3 607.0,747.7 613.4,744.2 612.5,743.9" fill="#0037ff"/><polygon points="607.0,747.7 607.8,748.0 614.2,744.5 613.4,744.2" fill="#0037ff"/><polygon points="607.8,748.0 608.6,748.3 615.0,744.9 614.2,744.5" fill="#0037ff"/><polygon points="608.6,748.3 609.4,748.6 615.7,745.2 615.0,744.9" fill="#0037ff"/><polygon points="609.4,748.6 612.3,757.6 618.6,754.1 615.7,745.2" fill="#0025ff"/><polygon points="612.3,757.6 615.1,762.7 621.4,759.2 618.6,754.1" fill="#0009ff"/><polygon points="615.1,762.7 617.8,763.8 624.1,760.3 621.4,759.2" fill="#0000ff"/><polygon points="617.8,763.8 620.5,764.9 626.8,761.4 624.1,760.3" fill="#0000ff"/><polygon points="620.5,764.9 623.1,765.9 629.5,762.4 626.8,761.4" fill="#0000ff"/><polygon points="623.1,765.9 628.5,768.1 634.8,764.6 629.5,762.4" fill="#0000ff"/><polygon points="628.5,768.1 633.9,770.3 640.2,766.8 634.8,764.6" fill="#0000ff"/><polygon points="633.9,770.3 644.7,774.6 651.0,771.1 640.2,766.8" fill="#0000ff"/><polygon points="644.7,774.6 655.5,778.9 661.8,775.4 651.0,771.1" fill="#0000ff"/><polygon points="655.5,778.9 666.3,783.3 672.5,779.8 661.8,775.4" fill="#0000ff"/><polygon points="666.3,783.3 687.8,791.9 694.1,788.4 672.5,779.8" fill="#0000ff"/><polygon points="687.8,791.9 709.4,800.6 715.6,797.1 694.1,788.4" fill="#0000ff"/><polygon points="709.4,800.6 730.9,809.3 737.2,805.8 715.6,797.1" fill="#0000ff"/><polygon points="730.9,809.3 752.5,817.9 758.7,814.5 737.2,805.8" fill="#0000ff"/><polygon points="752.5,817.9 780.0,829.0 786.2,825.5 758.7,814.5" fill="#0000ff"/></g><text x="765.600" y="459.300" font-size="9.250" fill="#c4c4c4" text-anchor="middle">TunerPro - Version 5.00</text><text x="765.600" y="479.500" font-size="14.630" font-weight="bold" fill="#000" text-anchor="middle">Main Spark Advance 1</text><text x="600" y="560.3" font-size="9" fill="#1010f0" text-anchor="end">27.50</text><text x="600" y="610.8" font-size="9" fill="#1010f0" text-anchor="end">20.88</text><text x="600" y="661.8" font-size="9" fill="#1010f0" text-anchor="end">14.25</text><text x="600" y="712.8" font-size="9" fill="#1010f0" text-anchor="end">7.62</text><text x="600" y="763.8" font-size="9" fill="#222" text-anchor="end">0.00</text><text x="933" y="547.8" font-size="9" fill="#1010f0">27.50</text><text x="933" y="598.8" font-size="9" fill="#1010f0">20.88</text><text x="933" y="649.8" font-size="9" fill="#1010f0">14.25</text><text x="933" y="700.8" font-size="9" fill="#1010f0">7.62</text><text transform="translate(543.1,658) rotate(-90)" font-size="10.670" font-weight="bold" fill="#1010f0" text-anchor="middle">deg</text><text transform="translate(989.3,645) rotate(-90)" font-size="10.670" font-weight="bold" fill="#1010f0" text-anchor="middle">deg</text><text x="618.8" y="776.2" font-size="9" fill="#222" text-anchor="middle">17.28</text><text x="650.6" y="788.9" font-size="9" fill="#222" text-anchor="middle">35.59</text><text x="693.2" y="807.1" font-size="9" fill="#222" text-anchor="middle">60.02</text><text x="736.3" y="824.7" font-size="9" fill="#222" text-anchor="middle">84.42</text><text x="789.0" y="835.9" font-size="9" fill="#f01010" text-anchor="middle">800</text><text x="809.3" y="825.6" font-size="9" fill="#f01010" text-anchor="middle">1900</text><text x="833.0" y="812.0" font-size="9" fill="#f01010" text-anchor="middle">3500</text><text x="857.0" y="798.4" font-size="9" fill="#f01010" text-anchor="middle">5000</text><text x="880.0" y="786.0" font-size="9" fill="#f01010" text-anchor="middle">6500</text><text x="902.8" y="772.7" font-size="9" fill="#f01010" text-anchor="middle">8000</text><text x="927.0" y="759.9" font-size="9" fill="#f01010" text-anchor="middle">9500</text><text x="650" y="832.300" font-size="10.400" font-weight="bold" fill="#666" text-anchor="middle">% Throttle</text><text x="885.200" y="823.500" font-size="10.300" font-weight="bold" fill="#f01010" text-anchor="middle">RPM</text></svg>
<div id="gstat"><div class="abs" style="left:130px;top:2px;width:1px;height:19px;background:#d8d8d8"></div><div class="abs" style="left:260px;top:2px;width:1px;height:19px;background:#d8d8d8"></div><div class="abs" style="left:390px;top:2px;width:1px;height:19px;background:#d8d8d8"></div><svg class="abs" style="right:5px;bottom:4px" width="10" height="10"><path d="M8 0h2v2h-2zM8 4h2v2h-2zM8 8h2v2h-2zM4 4h2v2h-2zM4 8h2v2h-2zM0 8h2v2h-2z" fill="#c0c0c0"/></svg></div>
</div>
<svg class="abs" style="left:0;top:0;pointer-events:none" width="1443" height="899" viewBox="0 0 1443 899"><g opacity=".36" fill="#000" stroke="#000" stroke-width="0"><path d="M256 301C247 272 254 236 280 210C305 188 345 182 376 189C411 197 438 226 443 266C444 280 442 290 438 299" fill="none" stroke-width="7" stroke-linecap="butt"/><path d="M260 230L271 223L283 222L297 248L320 238" fill="none" stroke-width="4.500" stroke-linejoin="miter"/><path d="M254 245L278 238L296 262L319 240L327 259" fill="none" stroke-width="5.500" stroke-linejoin="miter"/><path d="M272 307L327 309C328 330 312 343 297 339C282 335 272 322 272 307Z"/><path d="M363 323L437 306C441 326 426 343 405 343C385 343 366 336 363 323Z"/><path d="M345 340l10 0 8 28-12-6-12 6z"/><path d="M306 392l10 24 9-18 9 18 9-18 9 18 9-18 9 18 9-18 9 18 10-24" fill="none" stroke-width="5.500"/><g transform="translate(248 403) rotate(-56.5)"><rect x="-32" y="-42" width="64" height="7"/><rect x="-32" y="-32" width="64" height="6"/><path fill-rule="evenodd" d="M-32 -23H32V26H17L11 13H-11L-17 26H-32ZM8.500 0A8.500 8.500 0 1 0 -8.500 0A8.500 8.500 0 1 0 8.500 0Z"/><path d="M-9.500 13H9.500L11.500 152.5 H-11.500Z"/><path fill-rule="evenodd" d="M25 170.5 A25 25 0 1 0 -25 170.5 A25 25 0 1 0 25 170.5 Z M11 170.5 A11 11 0 1 1 -11 170.5 A11 11 0 1 1 11 170.5 Z"/></g><g transform="translate(452 403) rotate(56.7)"><rect x="-32" y="-42" width="64" height="7"/><rect x="-32" y="-32" width="64" height="6"/><path fill-rule="evenodd" d="M-32 -23H32V26H17L11 13H-11L-17 26H-32ZM8.500 0A8.500 8.500 0 1 0 -8.500 0A8.500 8.500 0 1 0 8.500 0Z"/><path d="M-9.500 13H9.500L11.500 153.5 H-11.500Z"/><path fill-rule="evenodd" d="M25 171.5 A25 25 0 1 0 -25 171.5 A25 25 0 1 0 25 171.5 Z M11 171.5 A11 11 0 1 1 -11 171.5 A11 11 0 1 1 11 171.5 Z"/></g><polygon points="221.5,455.0 225.8,467.5 239.1,467.8 228.5,475.8 232.4,488.5 221.5,480.9 210.6,488.5 214.5,475.8 203.9,467.8 217.2,467.5"/><polygon points="477.5,454.7 481.9,467.4 495.4,467.7 484.7,475.8 488.6,488.7 477.5,481.0 466.4,488.7 470.3,475.8 459.6,467.7 473.1,467.4"/><g font-family="DejaVu Sans, sans-serif" stroke-linejoin="miter"><text transform="matrix(0.4551 0 0 1.2434 89.07 625.26)" font-size="100" font-weight="200" stroke-width="14" vector-effect="non-scaling-stroke">O</text><text transform="matrix(0.7030 0 0 1.1248 152.42 627.00)" font-size="100" font-weight="200" stroke-width="14" vector-effect="non-scaling-stroke">L</text><text transform="matrix(0.5752 0 0 0.9739 218.88 627.00)" font-size="100" font-weight="200" stroke-width="14" vector-effect="non-scaling-stroke">D</text><text transform="matrix(0.7026 0 0 0.9061 291.35 626.23)" font-size="100" font-weight="200" stroke-width="14" vector-effect="non-scaling-stroke">S</text><text transform="matrix(0.7601 0 0 0.9328 356.85 627.00)" font-size="100" font-weight="200" stroke-width="14" vector-effect="non-scaling-stroke">K</text><text transform="matrix(0.6713 0 0 0.9623 434.08 625.65)" font-size="100" font-weight="200" stroke-width="14" vector-effect="non-scaling-stroke">U</text><text transform="matrix(0.7054 0 0 1.0837 504.79 627.00)" font-size="100" font-weight="200" stroke-width="14" vector-effect="non-scaling-stroke">L</text><text transform="matrix(0.7030 0 0 1.2689 568.92 627.00)" font-size="100" font-weight="200" stroke-width="14" vector-effect="non-scaling-stroke">L</text></g><g font-family="Liberation Sans, sans-serif" stroke-linejoin="miter"><text transform="matrix(0.3803 0 0 0.3779 162.58 693.50)" font-size="100" font-weight="bold" stroke-width="4" vector-effect="non-scaling-stroke">T</text><text transform="matrix(0.4077 0 0 0.3797 230.35 693.62)" font-size="100" font-weight="bold" stroke-width="4" vector-effect="non-scaling-stroke">U</text><text transform="matrix(0.4116 0 0 0.3779 306.54 693.50)" font-size="100" font-weight="bold" stroke-width="4" vector-effect="non-scaling-stroke">N</text><text transform="matrix(0.4167 0 0 0.3779 382.21 693.50)" font-size="100" font-weight="bold" stroke-width="4" vector-effect="non-scaling-stroke">I</text><text transform="matrix(0.4116 0 0 0.3779 434.64 693.50)" font-size="100" font-weight="bold" stroke-width="4" vector-effect="non-scaling-stroke">N</text><text transform="matrix(0.3719 0 0 0.3743 509.48 693.63)" font-size="100" font-weight="bold" stroke-width="4" vector-effect="non-scaling-stroke">G</text></g></g></svg>
</body></html>
